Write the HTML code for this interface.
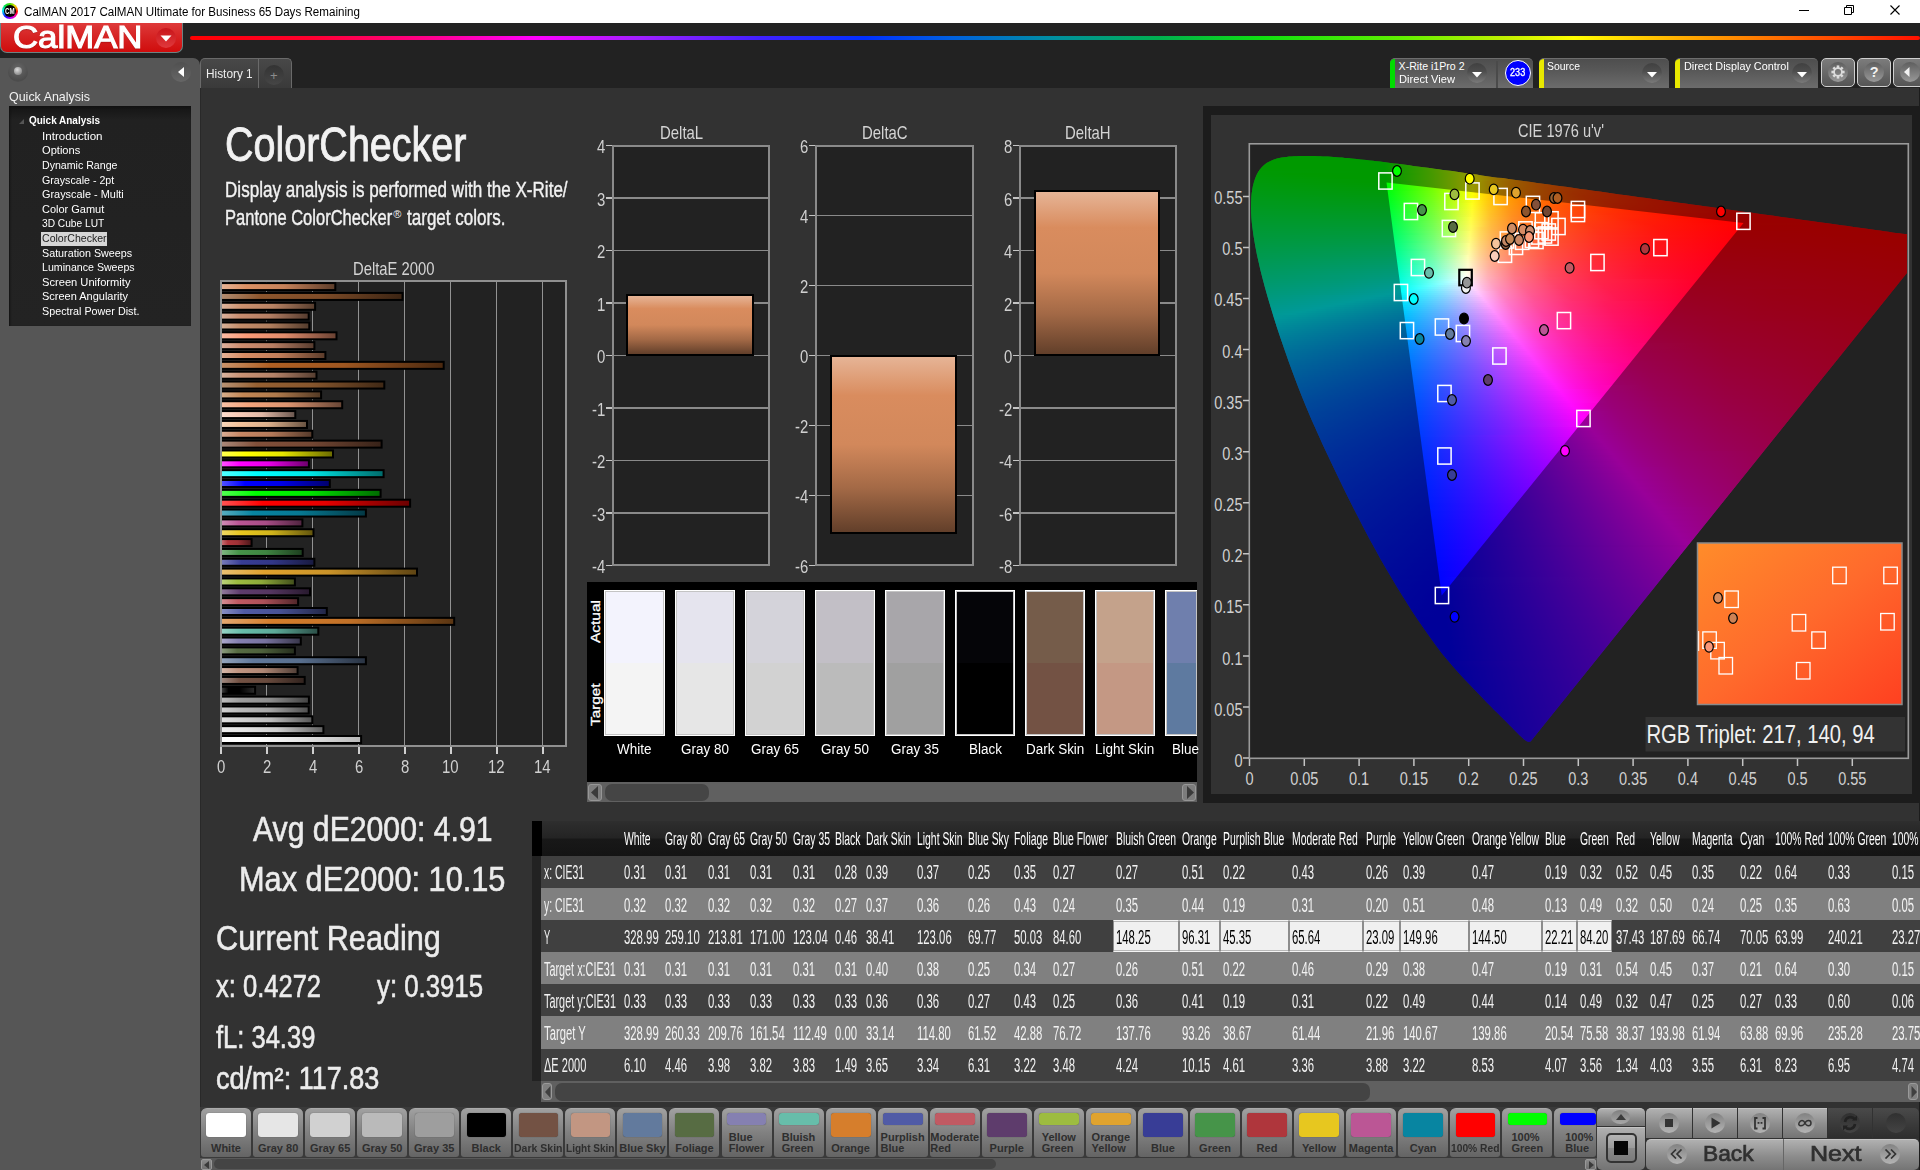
<!DOCTYPE html>
<html lang="en"><head><meta charset="utf-8"><title>CalMAN 2017 - ColorChecker</title>
<style>
*{box-sizing:border-box}
html,body{margin:0;padding:0;overflow:hidden}
body{width:1920px;height:1170px;overflow:hidden;background:#222;font-family:"Liberation Sans",sans-serif;position:relative}
div,span.t,svg{position:absolute}
span.t{white-space:nowrap;transform-origin:0 0;display:block}
.ciefill i{display:block;width:100%}
</style></head>
<body>
<!-- title bar -->
<div style="left:0px;top:0px;width:1920px;height:23px;background:#fff"></div>
<div style="left:1.8px;top:2.9px;width:16px;height:16px;border-radius:50%;background:conic-gradient(#4d0,#dd0 11%,#f80 19%,#f00 27%,#f0a 37%,#a0f 49%,#20f 60%,#08f 69%,#0ee 77%,#0d4 88%,#4d0);filter:blur(.3px)"></div>
<div style="left:3.9px;top:5px;width:11.8px;height:11.8px;border-radius:50%;background:#000"></div>
<span class="t" style="left:5.0px;top:6.1px;font-size:9.5px;line-height:9.5px;color:#fff;font-weight:bold;transform:scaleX(0.650);">CM</span>
<span class="t" style="left:24.0px;top:5.8px;font-size:12.5px;line-height:12.5px;color:#000;transform:scaleX(0.928);">CalMAN 2017 CalMAN Ultimate for Business 65 Days Remaining</span>
<svg style="left:1780px;top:0" width="140" height="23" viewBox="0 0 140 23" fill="none" stroke="#000" stroke-width="1"><path d="M19 10.5h10"/><path d="M64.5 7.5h7v7h-7zM66.5 7.5v-2h7v7h-2" /><path d="M110.500 5.500l9 9M119.500 5.500l-9 9" stroke-width="1.100"/></svg>
<!-- header -->
<div style="left:0px;top:23px;width:1920px;height:35px;background:#222"></div>
<div style="left:0px;top:23px;width:183px;height:29.7px;background:linear-gradient(#de3a3a,#d62222 50%,#d00c0c);border-radius:0 0 7px 7px;border:1px solid #6e8282;border-top:none"></div>
<span class="t" style="left:13.0px;top:21.3px;font-size:32px;line-height:32px;color:#fff;transform:scaleX(1.087);-webkit-text-stroke:1.1px #fff;text-shadow:0 1px 1px rgba(90,0,0,.6);">CalMAN</span>
<div style="left:156px;top:28px;width:20px;height:20px;border-radius:50%;background:linear-gradient(#c8151a,#e0393c)"></div>
<svg style="left:160px;top:35px" width="12" height="7"><path d="M0.500 0.500h11l-5.500 6z" fill="#fff"/></svg>
<div style="left:190px;top:36px;width:1730px;height:4px;background:linear-gradient(90deg,#f00 0,#ff0030 7%,#ff0090 14%,#f0f 20%,#a020ff 26%,#4020ff 33%,#0030ff 39%,#0060e0 44%,#0090a0 50%,#00b050 56%,#10e010 62%,#60f000 70%,#c0f000 76%,#ff0 80%,#ffb000 86%,#ff6000 93%,#ff1000 100%);border-radius:2px"></div>
<!-- sidebar -->
<div style="left:0px;top:58px;width:200px;height:1112px;background:#565656;border-top-right-radius:7px"></div>
<div style="left:8px;top:62px;width:20px;height:20px;border-radius:50%;background:radial-gradient(circle at 50% 35%,#686868,#4c4c4c 70%,#555)"></div>
<div style="left:14px;top:67px;width:8px;height:8px;border-radius:50%;background:radial-gradient(circle at 40% 35%,#ddd,#999 60%,#777)"></div>
<div style="left:171px;top:62px;width:20px;height:20px;border-radius:50%;background:linear-gradient(#505050,#666)"></div>
<svg style="left:177.800px;top:66.700px" width="6" height="10"><path d="M6 0v10l-6-5z" fill="#fff"/></svg>
<span class="t" style="left:9.0px;top:89.8px;font-size:13.5px;line-height:13.5px;color:#f0f0f0;transform:scaleX(0.923);">Quick Analysis</span>
<div style="left:9px;top:106px;width:182px;height:220px;background:linear-gradient(#141414,#212121 14px,#232323);box-shadow:inset 1px 1px 2px #111"></div>
<svg style="left:19px;top:119px" width="5" height="5"><path d="M5 0v5h-5z" fill="#555"/></svg>
<span class="t" style="left:29.0px;top:114.8px;font-size:11.5px;line-height:11.5px;color:#fff;font-weight:bold;transform:scaleX(0.866);">Quick Analysis</span>
<span class="t" style="left:42.0px;top:130.8px;font-size:11.5px;line-height:11.5px;color:#fff;transform:scaleX(1.007);">Introduction</span>
<span class="t" style="left:42.0px;top:145.4px;font-size:11.5px;line-height:11.5px;color:#fff;transform:scaleX(0.966);">Options</span>
<span class="t" style="left:42.0px;top:160.0px;font-size:11.5px;line-height:11.5px;color:#fff;transform:scaleX(0.922);">Dynamic Range</span>
<span class="t" style="left:42.0px;top:174.6px;font-size:11.5px;line-height:11.5px;color:#fff;transform:scaleX(0.926);">Grayscale - 2pt</span>
<span class="t" style="left:42.0px;top:189.2px;font-size:11.5px;line-height:11.5px;color:#fff;transform:scaleX(0.948);">Grayscale - Multi</span>
<span class="t" style="left:42.0px;top:203.8px;font-size:11.5px;line-height:11.5px;color:#fff;transform:scaleX(0.954);">Color Gamut</span>
<span class="t" style="left:42.0px;top:218.4px;font-size:11.5px;line-height:11.5px;color:#fff;transform:scaleX(0.885);">3D Cube LUT</span>
<div style="left:41px;top:231.8px;width:66px;height:14px;background:#d6d6d6"></div>
<span class="t" style="left:42.0px;top:233.1px;font-size:11.5px;line-height:11.5px;color:#222;transform:scaleX(0.919);">ColorChecker</span>
<span class="t" style="left:42.0px;top:247.6px;font-size:11.5px;line-height:11.5px;color:#fff;transform:scaleX(0.934);">Saturation Sweeps</span>
<span class="t" style="left:42.0px;top:262.2px;font-size:11.5px;line-height:11.5px;color:#fff;transform:scaleX(0.923);">Luminance Sweeps</span>
<span class="t" style="left:42.0px;top:276.9px;font-size:11.5px;line-height:11.5px;color:#fff;transform:scaleX(0.968);">Screen Uniformity</span>
<span class="t" style="left:42.0px;top:291.4px;font-size:11.5px;line-height:11.5px;color:#fff;transform:scaleX(0.955);">Screen Angularity</span>
<span class="t" style="left:42.0px;top:306.0px;font-size:11.5px;line-height:11.5px;color:#fff;transform:scaleX(0.935);">Spectral Power Dist.</span>
<!-- tabs -->
<div style="left:200px;top:58px;width:59px;height:30px;background:linear-gradient(#484848,#3a3a3a);border:1px solid #6a6a6a;border-bottom:none;border-radius:5px 0 0 0"></div>
<div style="left:258px;top:58px;width:34px;height:30px;background:linear-gradient(#484848,#3a3a3a);border:1px solid #6a6a6a;border-bottom:none;border-radius:0 5px 0 0"></div>
<span class="t" style="left:206.2px;top:68.0px;font-size:12px;line-height:12px;color:#eee;transform:scaleX(0.986);">History 1</span>
<div style="left:264px;top:65px;width:20px;height:20px;border-radius:50%;background:linear-gradient(#333,#464646)"></div>
<span class="t" style="left:270.0px;top:69.2px;font-size:13px;line-height:13px;color:#8c8c8c;">+</span>
<!-- toolbar -->
<div style="left:1390px;top:58px;width:143px;height:30px;background:linear-gradient(#4e4e4e,#585858 40%,#6c6c6c);border-top:1px solid #6e6e6e;border-radius:5px 5px 0 0;overflow:hidden"><div style="left:0;top:-1px;width:5px;height:31px;background:#0d0"></div><div style="left:106px;top:2px;width:2px;height:28px;background:#4a4a4a"></div></div>
<span class="t" style="left:1398.6px;top:60.5px;font-size:10.6px;line-height:10.6px;color:#fff;">X-Rite i1Pro 2</span>
<span class="t" style="left:1398.6px;top:74.4px;font-size:10.6px;line-height:10.6px;color:#fff;transform:scaleX(1.049);">Direct View</span>
<div style="left:1467.4px;top:63px;width:20px;height:20px;border-radius:50%;background:linear-gradient(#404040,#4c4c4c 40%,#7a7a7a)"></div>
<svg style="left:1472.4px;top:71.6px" width="10" height="6"><path d="M0 0h10l-5 5.500z" fill="#fff"/></svg>
<div style="left:1504.5px;top:59.5px;width:26px;height:26px;border-radius:50%;background:#00f;border:1px solid #fff"></div>
<span class="t" style="left:1510.0px;top:67.3px;font-size:10.5px;line-height:10.5px;color:#fff;transform:scaleX(0.868);-webkit-text-stroke:.35px #fff;">233</span>
<div style="left:1539px;top:58px;width:130px;height:30px;background:linear-gradient(#4e4e4e,#585858 40%,#6c6c6c);border-top:1px solid #6e6e6e;border-radius:5px 5px 0 0;overflow:hidden"><div style="left:0;top:-1px;width:5px;height:31px;background:#e8e800"></div></div>
<span class="t" style="left:1547.4px;top:60.5px;font-size:10.6px;line-height:10.6px;color:#fff;transform:scaleX(0.983);">Source</span>
<div style="left:1642.4px;top:63px;width:20px;height:20px;border-radius:50%;background:linear-gradient(#404040,#4c4c4c 40%,#7a7a7a)"></div>
<svg style="left:1647.4px;top:71.6px" width="10" height="6"><path d="M0 0h10l-5 5.500z" fill="#fff"/></svg>
<div style="left:1675px;top:58px;width:143px;height:30px;background:linear-gradient(#4e4e4e,#585858 40%,#6c6c6c);border-top:1px solid #6e6e6e;border-radius:5px 5px 0 0;overflow:hidden"><div style="left:0;top:-1px;width:5px;height:31px;background:#e8e800"></div></div>
<span class="t" style="left:1683.7px;top:60.5px;font-size:10.6px;line-height:10.6px;color:#fff;transform:scaleX(1.023);">Direct Display Control</span>
<div style="left:1791.8px;top:63px;width:20px;height:20px;border-radius:50%;background:linear-gradient(#404040,#4c4c4c 40%,#7a7a7a)"></div>
<svg style="left:1796.8px;top:71.6px" width="10" height="6"><path d="M0 0h10l-5 5.500z" fill="#fff"/></svg>
<div style="left:1821px;top:58px;width:34px;height:28.5px;background:linear-gradient(#7c7c7c,#555);border:1px solid #cfcfcf;border-radius:5px;"></div>
<div style="left:1828px;top:62px;width:20px;height:20px;border-radius:50%;background:linear-gradient(#5e5e5e,#999)"></div>
<div style="left:1857px;top:58px;width:34px;height:28.5px;background:linear-gradient(#7c7c7c,#555);border:1px solid #cfcfcf;border-radius:5px;"></div>
<div style="left:1864px;top:62px;width:20px;height:20px;border-radius:50%;background:linear-gradient(#5e5e5e,#999)"></div>
<div style="left:1893px;top:58px;width:34px;height:28.5px;background:linear-gradient(#7c7c7c,#555);border:1px solid #cfcfcf;border-radius:5px;"></div>
<div style="left:1900px;top:62px;width:20px;height:20px;border-radius:50%;background:linear-gradient(#5e5e5e,#999)"></div>
<svg style="left:1830px;top:64px" width="16" height="16" viewBox="-8 -8 16 16" fill="#dcdcdc"><rect x="-1.300" y="-6.600" width="2.600" height="2.800" transform="rotate(0)"/><rect x="-1.300" y="-6.600" width="2.600" height="2.800" transform="rotate(45)"/><rect x="-1.300" y="-6.600" width="2.600" height="2.800" transform="rotate(90)"/><rect x="-1.300" y="-6.600" width="2.600" height="2.800" transform="rotate(135)"/><rect x="-1.300" y="-6.600" width="2.600" height="2.800" transform="rotate(180)"/><rect x="-1.300" y="-6.600" width="2.600" height="2.800" transform="rotate(225)"/><rect x="-1.300" y="-6.600" width="2.600" height="2.800" transform="rotate(270)"/><rect x="-1.300" y="-6.600" width="2.600" height="2.800" transform="rotate(315)"/><circle r="3.900" fill="none" stroke="#dcdcdc" stroke-width="1.700"/></svg>
<span class="t" style="left:1869.8px;top:65.3px;font-size:14.5px;line-height:14.5px;color:#f2f2f2;font-weight:bold;">?</span>
<svg style="left:1904px;top:67px" width="6" height="10"><path d="M5.500 0v10l-5.500-5z" fill="#f2f2f2"/></svg>
<!-- main panel -->
<div style="left:200px;top:88px;width:1720px;height:1082px;background:#323232"></div>
<div style="left:1919px;top:88px;width:1px;height:1082px;background:#1c1c1c"></div>
<div style="left:200px;top:88px;width:1.2px;height:1082px;background:#292929"></div>
<span class="t" style="left:225.0px;top:119.6px;font-size:48.4px;line-height:48.4px;color:#f2f2f2;transform:scaleX(0.816);-webkit-text-stroke:.9px #f2f2f2;">ColorChecker</span>
<span class="t" style="left:225.0px;top:178.8px;font-size:21.2px;line-height:21.2px;color:#f2f2f2;transform:scaleX(0.806);-webkit-text-stroke:.4px #f2f2f2;">Display analysis is performed with the X-Rite/</span>
<span class="t" style="left:225.0px;top:206.5px;font-size:21.2px;line-height:21.2px;color:#f2f2f2;transform:scaleX(0.780);-webkit-text-stroke:.4px #f2f2f2;">Pantone ColorChecker</span>
<span class="t" style="left:393.3px;top:208.8px;font-size:11px;line-height:11px;color:#f2f2f2;">®</span>
<span class="t" style="left:407.3px;top:206.5px;font-size:21.2px;line-height:21.2px;color:#f2f2f2;transform:scaleX(0.804);-webkit-text-stroke:.4px #f2f2f2;">target colors.</span>
<!-- DeltaE 2000 chart -->
<span class="t" style="left:353.4px;top:260.1px;font-size:18.2px;line-height:18.2px;color:#d4d4d4;transform:scaleX(0.814);">DeltaE 2000</span>
<div style="left:220px;top:280px;width:347px;height:467px;background:#222"></div>
<div style="left:266.05px;top:282px;width:1.3px;height:463px;background:#929292"></div>
<div style="left:312.05px;top:282px;width:1.3px;height:463px;background:#929292"></div>
<div style="left:358.05px;top:282px;width:1.3px;height:463px;background:#929292"></div>
<div style="left:404.05px;top:282px;width:1.3px;height:463px;background:#929292"></div>
<div style="left:450.05px;top:282px;width:1.3px;height:463px;background:#929292"></div>
<div style="left:496.05px;top:282px;width:1.3px;height:463px;background:#929292"></div>
<div style="left:542.05px;top:282px;width:1.3px;height:463px;background:#929292"></div>
<div style="left:219.7px;top:747px;width:2px;height:7px;background:#d0d0d0"></div>
<span class="t" style="left:216.6px;top:757.7px;font-size:18.2px;line-height:18.2px;color:#d0d0d0;transform:scaleX(0.820);">0</span>
<div style="left:265.7px;top:747px;width:2px;height:7px;background:#d0d0d0"></div>
<span class="t" style="left:262.6px;top:757.7px;font-size:18.2px;line-height:18.2px;color:#d0d0d0;transform:scaleX(0.820);">2</span>
<div style="left:311.7px;top:747px;width:2px;height:7px;background:#d0d0d0"></div>
<span class="t" style="left:308.6px;top:757.7px;font-size:18.2px;line-height:18.2px;color:#d0d0d0;transform:scaleX(0.820);">4</span>
<div style="left:357.7px;top:747px;width:2px;height:7px;background:#d0d0d0"></div>
<span class="t" style="left:354.6px;top:757.7px;font-size:18.2px;line-height:18.2px;color:#d0d0d0;transform:scaleX(0.820);">6</span>
<div style="left:403.7px;top:747px;width:2px;height:7px;background:#d0d0d0"></div>
<span class="t" style="left:400.6px;top:757.7px;font-size:18.2px;line-height:18.2px;color:#d0d0d0;transform:scaleX(0.820);">8</span>
<div style="left:449.7px;top:747px;width:2px;height:7px;background:#d0d0d0"></div>
<span class="t" style="left:442.4px;top:757.7px;font-size:18.2px;line-height:18.2px;color:#d0d0d0;transform:scaleX(0.820);">10</span>
<div style="left:495.7px;top:747px;width:2px;height:7px;background:#d0d0d0"></div>
<span class="t" style="left:488.4px;top:757.7px;font-size:18.2px;line-height:18.2px;color:#d0d0d0;transform:scaleX(0.820);">12</span>
<div style="left:541.7px;top:747px;width:2px;height:7px;background:#d0d0d0"></div>
<span class="t" style="left:534.4px;top:757.7px;font-size:18.2px;line-height:18.2px;color:#d0d0d0;transform:scaleX(0.820);">14</span>
<svg style="left:220px;top:280px" width="347" height="467" viewBox="220 280 347 467"><defs><linearGradient id="b0"><stop offset="0" stop-color="#fff"/><stop offset=".22" stop-color="#fff"/><stop offset=".55" stop-color="#e6e6e6"/><stop offset="1" stop-color="#b9b9b9"/></linearGradient><linearGradient id="b1"><stop offset="0" stop-color="#eee"/><stop offset=".22" stop-color="#e6e6e6"/><stop offset=".55" stop-color="#cfcfcf"/><stop offset="1" stop-color="#616161"/></linearGradient><linearGradient id="b2"><stop offset="0" stop-color="#e0e0e0"/><stop offset=".22" stop-color="#d1d1d1"/><stop offset=".55" stop-color="#bcbcbc"/><stop offset="1" stop-color="#585858"/></linearGradient><linearGradient id="b3"><stop offset="0" stop-color="#d1d1d1"/><stop offset=".22" stop-color="#bababa"/><stop offset=".55" stop-color="#a7a7a7"/><stop offset="1" stop-color="#4e4e4e"/></linearGradient><linearGradient id="b4"><stop offset="0" stop-color="#bebebe"/><stop offset=".22" stop-color="#9e9e9e"/><stop offset=".55" stop-color="#8e8e8e"/><stop offset="1" stop-color="#424242"/></linearGradient><linearGradient id="b5"><stop offset="0" stop-color="#464646"/><stop offset=".22" stop-color="#000"/><stop offset=".55" stop-color="#000"/><stop offset="1" stop-color="#2d2d2d"/></linearGradient><linearGradient id="b6"><stop offset="0" stop-color="#a18b82"/><stop offset=".22" stop-color="#735244"/><stop offset=".55" stop-color="#684a3d"/><stop offset="1" stop-color="#30221d"/></linearGradient><linearGradient id="b7"><stop offset="0" stop-color="#d6b9ab"/><stop offset=".22" stop-color="#c29682"/><stop offset=".55" stop-color="#af8775"/><stop offset="1" stop-color="#513f37"/></linearGradient><linearGradient id="b8"><stop offset="0" stop-color="#96a6bd"/><stop offset=".22" stop-color="#627a9d"/><stop offset=".55" stop-color="#586e8d"/><stop offset="1" stop-color="#293342"/></linearGradient><linearGradient id="b9"><stop offset="0" stop-color="#8e9d81"/><stop offset=".22" stop-color="#576c43"/><stop offset=".55" stop-color="#4e613c"/><stop offset="1" stop-color="#252d1c"/></linearGradient><linearGradient id="b10"><stop offset="0" stop-color="#adaacb"/><stop offset=".22" stop-color="#8580b1"/><stop offset=".55" stop-color="#78739f"/><stop offset="1" stop-color="#38364a"/></linearGradient><linearGradient id="b11"><stop offset="0" stop-color="#99d3c6"/><stop offset=".22" stop-color="#67bdaa"/><stop offset=".55" stop-color="#5daa99"/><stop offset="1" stop-color="#2b4f47"/></linearGradient><linearGradient id="b12"><stop offset="0" stop-color="#e4a972"/><stop offset=".22" stop-color="#d67e2c"/><stop offset=".55" stop-color="#c17128"/><stop offset="1" stop-color="#5a3512"/></linearGradient><linearGradient id="b13"><stop offset="0" stop-color="#8a91c3"/><stop offset=".22" stop-color="#505ba6"/><stop offset=".55" stop-color="#485295"/><stop offset="1" stop-color="#222646"/></linearGradient><linearGradient id="b14"><stop offset="0" stop-color="#d59096"/><stop offset=".22" stop-color="#c15a63"/><stop offset=".55" stop-color="#ae5159"/><stop offset="1" stop-color="#51262a"/></linearGradient><linearGradient id="b15"><stop offset="0" stop-color="#937c9d"/><stop offset=".22" stop-color="#5e3c6c"/><stop offset=".55" stop-color="#553661"/><stop offset="1" stop-color="#27192d"/></linearGradient><linearGradient id="b16"><stop offset="0" stop-color="#bdd27f"/><stop offset=".22" stop-color="#9dbc40"/><stop offset=".55" stop-color="#8da93a"/><stop offset="1" stop-color="#424f1b"/></linearGradient><linearGradient id="b17"><stop offset="0" stop-color="#eac173"/><stop offset=".22" stop-color="#e0a32e"/><stop offset=".55" stop-color="#ca9329"/><stop offset="1" stop-color="#5e4413"/></linearGradient><linearGradient id="b18"><stop offset="0" stop-color="#7a7db9"/><stop offset=".22" stop-color="#383d96"/><stop offset=".55" stop-color="#323787"/><stop offset="1" stop-color="#181a3f"/></linearGradient><linearGradient id="b19"><stop offset="0" stop-color="#83b785"/><stop offset=".22" stop-color="#469449"/><stop offset=".55" stop-color="#3f8542"/><stop offset="1" stop-color="#1d3e1f"/></linearGradient><linearGradient id="b20"><stop offset="0" stop-color="#c9787c"/><stop offset=".22" stop-color="#af363c"/><stop offset=".55" stop-color="#9e3136"/><stop offset="1" stop-color="#4a1719"/></linearGradient><linearGradient id="b21"><stop offset="0" stop-color="#efd969"/><stop offset=".22" stop-color="#e7c71f"/><stop offset=".55" stop-color="#d0b31c"/><stop offset="1" stop-color="#61540d"/></linearGradient><linearGradient id="b22"><stop offset="0" stop-color="#d18eb8"/><stop offset=".22" stop-color="#bb5695"/><stop offset=".55" stop-color="#a84d86"/><stop offset="1" stop-color="#4f243f"/></linearGradient><linearGradient id="b23"><stop offset="0" stop-color="#5aadc0"/><stop offset=".22" stop-color="#0885a1"/><stop offset=".55" stop-color="#077891"/><stop offset="1" stop-color="#033844"/></linearGradient><linearGradient id="b24"><stop offset="0" stop-color="#ff5454"/><stop offset=".22" stop-color="#f00"/><stop offset=".55" stop-color="#e60000"/><stop offset="1" stop-color="#6b0000"/></linearGradient><linearGradient id="b25"><stop offset="0" stop-color="#54ff54"/><stop offset=".22" stop-color="#0f0"/><stop offset=".55" stop-color="#00e600"/><stop offset="1" stop-color="#006b00"/></linearGradient><linearGradient id="b26"><stop offset="0" stop-color="#5454ff"/><stop offset=".22" stop-color="#00f"/><stop offset=".55" stop-color="#0000e6"/><stop offset="1" stop-color="#00006b"/></linearGradient><linearGradient id="b27"><stop offset="0" stop-color="#54ffff"/><stop offset=".22" stop-color="#0ff"/><stop offset=".55" stop-color="#00e6e6"/><stop offset="1" stop-color="#006b6b"/></linearGradient><linearGradient id="b28"><stop offset="0" stop-color="#ff54ff"/><stop offset=".22" stop-color="#f0f"/><stop offset=".55" stop-color="#e600e6"/><stop offset="1" stop-color="#6b006b"/></linearGradient><linearGradient id="b29"><stop offset="0" stop-color="#ffff54"/><stop offset=".22" stop-color="#ff0"/><stop offset=".55" stop-color="#e6e600"/><stop offset="1" stop-color="#6b6b00"/></linearGradient><linearGradient id="b30"><stop offset="0" stop-color="#ab8a7b"/><stop offset=".22" stop-color="#82503a"/><stop offset=".55" stop-color="#754834"/><stop offset="1" stop-color="#372218"/></linearGradient><linearGradient id="b31"><stop offset="0" stop-color="#daaf97"/><stop offset=".22" stop-color="#c88764"/><stop offset=".55" stop-color="#b47a5a"/><stop offset="1" stop-color="#54392a"/></linearGradient><linearGradient id="b32"><stop offset="0" stop-color="#f8d7bc"/><stop offset=".22" stop-color="#f5c39b"/><stop offset=".55" stop-color="#dcb08c"/><stop offset="1" stop-color="#675241"/></linearGradient><linearGradient id="b33"><stop offset="0" stop-color="#fcded0"/><stop offset=".22" stop-color="#facdb9"/><stop offset=".55" stop-color="#e1b8a6"/><stop offset="1" stop-color="#69564e"/></linearGradient><linearGradient id="b34"><stop offset="0" stop-color="#f8c3a8"/><stop offset=".22" stop-color="#f5a57d"/><stop offset=".55" stop-color="#dc9470"/><stop offset="1" stop-color="#674535"/></linearGradient><linearGradient id="b35"><stop offset="0" stop-color="#d7af8d"/><stop offset=".22" stop-color="#c38755"/><stop offset=".55" stop-color="#b07a4c"/><stop offset="1" stop-color="#523924"/></linearGradient><linearGradient id="b36"><stop offset="0" stop-color="#b99476"/><stop offset=".22" stop-color="#966032"/><stop offset=".55" stop-color="#87562d"/><stop offset="1" stop-color="#3f2815"/></linearGradient><linearGradient id="b37"><stop offset="0" stop-color="#dab5a1"/><stop offset=".22" stop-color="#c89173"/><stop offset=".55" stop-color="#b48268"/><stop offset="1" stop-color="#543d30"/></linearGradient><linearGradient id="b38"><stop offset="0" stop-color="#c9946c"/><stop offset=".22" stop-color="#af5f23"/><stop offset=".55" stop-color="#9e5620"/><stop offset="1" stop-color="#4a280f"/></linearGradient><linearGradient id="b39"><stop offset="0" stop-color="#e4b297"/><stop offset=".22" stop-color="#d78c64"/><stop offset=".55" stop-color="#c27e5a"/><stop offset="1" stop-color="#5a3b2a"/></linearGradient><linearGradient id="b40"><stop offset="0" stop-color="#deb29e"/><stop offset=".22" stop-color="#cd8c6e"/><stop offset=".55" stop-color="#b87e63"/><stop offset="1" stop-color="#563b2e"/></linearGradient><linearGradient id="b41"><stop offset="0" stop-color="#fcbca5"/><stop offset=".22" stop-color="#fa9b78"/><stop offset=".55" stop-color="#e18c6c"/><stop offset="1" stop-color="#694132"/></linearGradient><linearGradient id="b42"><stop offset="0" stop-color="#d7b29a"/><stop offset=".22" stop-color="#c38c69"/><stop offset=".55" stop-color="#b07e5e"/><stop offset="1" stop-color="#523b2c"/></linearGradient><linearGradient id="b43"><stop offset="0" stop-color="#dab29e"/><stop offset=".22" stop-color="#c88c6e"/><stop offset=".55" stop-color="#b47e63"/><stop offset="1" stop-color="#543b2e"/></linearGradient><linearGradient id="b44"><stop offset="0" stop-color="#deb59e"/><stop offset=".22" stop-color="#cd916e"/><stop offset=".55" stop-color="#b88263"/><stop offset="1" stop-color="#563d2e"/></linearGradient><linearGradient id="b45"><stop offset="0" stop-color="#b28d72"/><stop offset=".22" stop-color="#8c552d"/><stop offset=".55" stop-color="#7e4c28"/><stop offset="1" stop-color="#3b2413"/></linearGradient><linearGradient id="b46"><stop offset="0" stop-color="#e8b597"/><stop offset=".22" stop-color="#dc9164"/><stop offset=".55" stop-color="#c6825a"/><stop offset="1" stop-color="#5c3d2a"/></linearGradient></defs><g stroke="#000" stroke-width="2"><rect x="221" y="736.00" width="140.1" height="7" fill="url(#b0)"/><rect x="221" y="726.15" width="102.4" height="7" fill="url(#b1)"/><rect x="221" y="716.31" width="91.3" height="7" fill="url(#b2)"/><rect x="221" y="706.46" width="87.7" height="7" fill="url(#b3)"/><rect x="221" y="696.62" width="87.9" height="7" fill="url(#b4)"/><rect x="221" y="686.77" width="34.1" height="7" fill="url(#b5)"/><rect x="221" y="676.92" width="83.7" height="7" fill="url(#b6)"/><rect x="221" y="667.08" width="76.6" height="7" fill="url(#b7)"/><rect x="221" y="657.23" width="144.9" height="7" fill="url(#b8)"/><rect x="221" y="647.39" width="73.9" height="7" fill="url(#b9)"/><rect x="221" y="637.54" width="79.8" height="7" fill="url(#b10)"/><rect x="221" y="627.69" width="97.3" height="7" fill="url(#b11)"/><rect x="221" y="617.85" width="233.2" height="7" fill="url(#b12)"/><rect x="221" y="608.00" width="105.8" height="7" fill="url(#b13)"/><rect x="221" y="598.16" width="77.1" height="7" fill="url(#b14)"/><rect x="221" y="588.31" width="89.0" height="7" fill="url(#b15)"/><rect x="221" y="578.46" width="73.9" height="7" fill="url(#b16)"/><rect x="221" y="568.62" width="196.0" height="7" fill="url(#b17)"/><rect x="221" y="558.77" width="93.4" height="7" fill="url(#b18)"/><rect x="221" y="548.93" width="81.7" height="7" fill="url(#b19)"/><rect x="221" y="539.08" width="30.6" height="7" fill="url(#b20)"/><rect x="221" y="529.23" width="92.5" height="7" fill="url(#b21)"/><rect x="221" y="519.39" width="81.4" height="7" fill="url(#b22)"/><rect x="221" y="509.54" width="144.9" height="7" fill="url(#b23)"/><rect x="221" y="499.70" width="189.1" height="7" fill="url(#b24)"/><rect x="221" y="489.85" width="159.6" height="7" fill="url(#b25)"/><rect x="221" y="480.00" width="108.8" height="7" fill="url(#b26)"/><rect x="221" y="470.16" width="162.6" height="7" fill="url(#b27)"/><rect x="221" y="460.31" width="87.9" height="7" fill="url(#b28)"/><rect x="221" y="450.47" width="112.0" height="7" fill="url(#b29)"/><rect x="221" y="440.62" width="160.6" height="7" fill="url(#b30)"/><rect x="221" y="430.77" width="91.3" height="7" fill="url(#b31)"/><rect x="221" y="420.93" width="86.0" height="7" fill="url(#b32)"/><rect x="221" y="411.08" width="74.3" height="7" fill="url(#b33)"/><rect x="221" y="401.24" width="121.2" height="7" fill="url(#b34)"/><rect x="221" y="391.39" width="100.1" height="7" fill="url(#b35)"/><rect x="221" y="381.54" width="163.3" height="7" fill="url(#b36)"/><rect x="221" y="371.70" width="95.5" height="7" fill="url(#b37)"/><rect x="221" y="361.85" width="222.7" height="7" fill="url(#b38)"/><rect x="221" y="352.01" width="104.4" height="7" fill="url(#b39)"/><rect x="221" y="342.16" width="93.4" height="7" fill="url(#b40)"/><rect x="221" y="332.31" width="115.5" height="7" fill="url(#b41)"/><rect x="221" y="322.47" width="88.3" height="7" fill="url(#b42)"/><rect x="221" y="312.62" width="87.7" height="7" fill="url(#b43)"/><rect x="221" y="302.78" width="94.1" height="7" fill="url(#b44)"/><rect x="221" y="292.93" width="181.5" height="7" fill="url(#b45)"/><rect x="221" y="283.08" width="114.3" height="7" fill="url(#b46)"/></g></svg>
<div style="left:220px;top:280px;width:347px;height:467px;border:2px solid #909090"></div>
<!-- Delta charts -->
<span class="t" style="left:659.6px;top:124.1px;font-size:18.2px;line-height:18.2px;color:#d4d4d4;transform:scaleX(0.820);">DeltaL</span>
<div style="left:612px;top:144.5px;width:158px;height:421px;background:#222;border:2px solid #8a8a8a"></div>
<div style="left:606px;top:564.75px;width:6px;height:1.5px;background:#c4c4c4"></div>
<span class="t" style="left:592.4px;top:558.2px;font-size:18.2px;line-height:18.2px;color:#d0d0d0;transform:scaleX(0.820);">-4</span>
<div style="left:614px;top:512.25px;width:154px;height:1.5px;background:#8a8a8a"></div>
<div style="left:606px;top:512.25px;width:6px;height:1.5px;background:#c4c4c4"></div>
<span class="t" style="left:592.4px;top:505.7px;font-size:18.2px;line-height:18.2px;color:#d0d0d0;transform:scaleX(0.820);">-3</span>
<div style="left:614px;top:459.75px;width:154px;height:1.5px;background:#8a8a8a"></div>
<div style="left:606px;top:459.75px;width:6px;height:1.5px;background:#c4c4c4"></div>
<span class="t" style="left:592.4px;top:453.2px;font-size:18.2px;line-height:18.2px;color:#d0d0d0;transform:scaleX(0.820);">-2</span>
<div style="left:614px;top:407.25px;width:154px;height:1.5px;background:#8a8a8a"></div>
<div style="left:606px;top:407.25px;width:6px;height:1.5px;background:#c4c4c4"></div>
<span class="t" style="left:592.4px;top:400.7px;font-size:18.2px;line-height:18.2px;color:#d0d0d0;transform:scaleX(0.820);">-1</span>
<div style="left:614px;top:354.75px;width:154px;height:1.5px;background:#8a8a8a"></div>
<div style="left:606px;top:354.75px;width:6px;height:1.5px;background:#c4c4c4"></div>
<span class="t" style="left:597.4px;top:348.2px;font-size:18.2px;line-height:18.2px;color:#d0d0d0;transform:scaleX(0.820);">0</span>
<div style="left:614px;top:302.25px;width:154px;height:1.5px;background:#8a8a8a"></div>
<div style="left:606px;top:302.25px;width:6px;height:1.5px;background:#c4c4c4"></div>
<span class="t" style="left:597.4px;top:295.7px;font-size:18.2px;line-height:18.2px;color:#d0d0d0;transform:scaleX(0.820);">1</span>
<div style="left:614px;top:249.75px;width:154px;height:1.5px;background:#8a8a8a"></div>
<div style="left:606px;top:249.75px;width:6px;height:1.5px;background:#c4c4c4"></div>
<span class="t" style="left:597.4px;top:243.2px;font-size:18.2px;line-height:18.2px;color:#d0d0d0;transform:scaleX(0.820);">2</span>
<div style="left:614px;top:197.25px;width:154px;height:1.5px;background:#8a8a8a"></div>
<div style="left:606px;top:197.25px;width:6px;height:1.5px;background:#c4c4c4"></div>
<span class="t" style="left:597.4px;top:190.7px;font-size:18.2px;line-height:18.2px;color:#d0d0d0;transform:scaleX(0.820);">3</span>
<div style="left:606px;top:144.75px;width:6px;height:1.5px;background:#c4c4c4"></div>
<span class="t" style="left:597.4px;top:138.2px;font-size:18.2px;line-height:18.2px;color:#d0d0d0;transform:scaleX(0.820);">4</span>
<div style="left:626.3px;top:293.6px;width:127.4px;height:62.9px;border:2px solid #000;background:linear-gradient(#e6b496,#d98c5e 22%,#d2885b 50%,#a36946 75%,#623f2a)"></div>
<span class="t" style="left:861.9px;top:124.1px;font-size:18.2px;line-height:18.2px;color:#d4d4d4;transform:scaleX(0.820);">DeltaC</span>
<div style="left:815px;top:144.5px;width:159px;height:421px;background:#222;border:2px solid #8a8a8a"></div>
<div style="left:809px;top:564.75px;width:6px;height:1.5px;background:#c4c4c4"></div>
<span class="t" style="left:795.4px;top:558.2px;font-size:18.2px;line-height:18.2px;color:#d0d0d0;transform:scaleX(0.820);">-6</span>
<div style="left:817px;top:494.75px;width:155px;height:1.5px;background:#8a8a8a"></div>
<div style="left:809px;top:494.75px;width:6px;height:1.5px;background:#c4c4c4"></div>
<span class="t" style="left:795.4px;top:488.2px;font-size:18.2px;line-height:18.2px;color:#d0d0d0;transform:scaleX(0.820);">-4</span>
<div style="left:817px;top:424.75px;width:155px;height:1.5px;background:#8a8a8a"></div>
<div style="left:809px;top:424.75px;width:6px;height:1.5px;background:#c4c4c4"></div>
<span class="t" style="left:795.4px;top:418.2px;font-size:18.2px;line-height:18.2px;color:#d0d0d0;transform:scaleX(0.820);">-2</span>
<div style="left:817px;top:354.75px;width:155px;height:1.5px;background:#8a8a8a"></div>
<div style="left:809px;top:354.75px;width:6px;height:1.5px;background:#c4c4c4"></div>
<span class="t" style="left:800.4px;top:348.2px;font-size:18.2px;line-height:18.2px;color:#d0d0d0;transform:scaleX(0.820);">0</span>
<div style="left:817px;top:284.75px;width:155px;height:1.5px;background:#8a8a8a"></div>
<div style="left:809px;top:284.75px;width:6px;height:1.5px;background:#c4c4c4"></div>
<span class="t" style="left:800.4px;top:278.2px;font-size:18.2px;line-height:18.2px;color:#d0d0d0;transform:scaleX(0.820);">2</span>
<div style="left:817px;top:214.75px;width:155px;height:1.5px;background:#8a8a8a"></div>
<div style="left:809px;top:214.75px;width:6px;height:1.5px;background:#c4c4c4"></div>
<span class="t" style="left:800.4px;top:208.2px;font-size:18.2px;line-height:18.2px;color:#d0d0d0;transform:scaleX(0.820);">4</span>
<div style="left:809px;top:144.75px;width:6px;height:1.5px;background:#c4c4c4"></div>
<span class="t" style="left:800.4px;top:138.2px;font-size:18.2px;line-height:18.2px;color:#d0d0d0;transform:scaleX(0.820);">6</span>
<div style="left:829.8px;top:354.5px;width:127.4px;height:179.45px;border:2px solid #000;background:linear-gradient(#e6b496,#d98c5e 22%,#d2885b 50%,#a36946 75%,#623f2a)"></div>
<span class="t" style="left:1064.9px;top:124.1px;font-size:18.2px;line-height:18.2px;color:#d4d4d4;transform:scaleX(0.820);">DeltaH</span>
<div style="left:1018.5px;top:144.5px;width:158px;height:421px;background:#222;border:2px solid #8a8a8a"></div>
<div style="left:1012.5px;top:564.75px;width:6px;height:1.5px;background:#c4c4c4"></div>
<span class="t" style="left:998.9px;top:558.2px;font-size:18.2px;line-height:18.2px;color:#d0d0d0;transform:scaleX(0.820);">-8</span>
<div style="left:1020.5px;top:512.25px;width:154px;height:1.5px;background:#8a8a8a"></div>
<div style="left:1012.5px;top:512.25px;width:6px;height:1.5px;background:#c4c4c4"></div>
<span class="t" style="left:998.9px;top:505.7px;font-size:18.2px;line-height:18.2px;color:#d0d0d0;transform:scaleX(0.820);">-6</span>
<div style="left:1020.5px;top:459.75px;width:154px;height:1.5px;background:#8a8a8a"></div>
<div style="left:1012.5px;top:459.75px;width:6px;height:1.5px;background:#c4c4c4"></div>
<span class="t" style="left:998.9px;top:453.2px;font-size:18.2px;line-height:18.2px;color:#d0d0d0;transform:scaleX(0.820);">-4</span>
<div style="left:1020.5px;top:407.25px;width:154px;height:1.5px;background:#8a8a8a"></div>
<div style="left:1012.5px;top:407.25px;width:6px;height:1.5px;background:#c4c4c4"></div>
<span class="t" style="left:998.9px;top:400.7px;font-size:18.2px;line-height:18.2px;color:#d0d0d0;transform:scaleX(0.820);">-2</span>
<div style="left:1020.5px;top:354.75px;width:154px;height:1.5px;background:#8a8a8a"></div>
<div style="left:1012.5px;top:354.75px;width:6px;height:1.5px;background:#c4c4c4"></div>
<span class="t" style="left:1003.9px;top:348.2px;font-size:18.2px;line-height:18.2px;color:#d0d0d0;transform:scaleX(0.820);">0</span>
<div style="left:1020.5px;top:302.25px;width:154px;height:1.5px;background:#8a8a8a"></div>
<div style="left:1012.5px;top:302.25px;width:6px;height:1.5px;background:#c4c4c4"></div>
<span class="t" style="left:1003.9px;top:295.7px;font-size:18.2px;line-height:18.2px;color:#d0d0d0;transform:scaleX(0.820);">2</span>
<div style="left:1020.5px;top:249.75px;width:154px;height:1.5px;background:#8a8a8a"></div>
<div style="left:1012.5px;top:249.75px;width:6px;height:1.5px;background:#c4c4c4"></div>
<span class="t" style="left:1003.9px;top:243.2px;font-size:18.2px;line-height:18.2px;color:#d0d0d0;transform:scaleX(0.820);">4</span>
<div style="left:1020.5px;top:197.25px;width:154px;height:1.5px;background:#8a8a8a"></div>
<div style="left:1012.5px;top:197.25px;width:6px;height:1.5px;background:#c4c4c4"></div>
<span class="t" style="left:1003.9px;top:190.7px;font-size:18.2px;line-height:18.2px;color:#d0d0d0;transform:scaleX(0.820);">6</span>
<div style="left:1012.5px;top:144.75px;width:6px;height:1.5px;background:#c4c4c4"></div>
<span class="t" style="left:1003.9px;top:138.2px;font-size:18.2px;line-height:18.2px;color:#d0d0d0;transform:scaleX(0.820);">8</span>
<div style="left:1033.8px;top:190.175px;width:126.4px;height:166.325px;border:2px solid #000;background:linear-gradient(#e6b496,#d98c5e 22%,#d2885b 50%,#a36946 75%,#623f2a)"></div>
<!-- actual/target swatches -->
<div class="swp" style="left:587px;top:582px;width:610px;height:220px;background:#000;overflow:hidden"></div>
<div style="left:604px;top:589.5px;width:61px;height:146.5px;border:1px solid #fff;box-shadow:inset 0 0 0 1px #c4c4c4;background:linear-gradient(#f3f3fd 50%,#f4f4f4 50%)"></div>
<span class="t" style="left:616.8px;top:740.6px;font-size:15.3px;line-height:15.3px;color:#fff;transform:scaleX(0.880);">White</span>
<div style="left:675px;top:589.5px;width:60px;height:146.5px;border:1px solid #fff;box-shadow:inset 0 0 0 1px #c4c4c4;background:linear-gradient(#e5e4ee 50%,#e6e6e6 50%)"></div>
<span class="t" style="left:681.1px;top:740.6px;font-size:15.3px;line-height:15.3px;color:#fff;transform:scaleX(0.880);">Gray 80</span>
<div style="left:745px;top:589.5px;width:60px;height:146.5px;border:1px solid #fff;box-shadow:inset 0 0 0 1px #c4c4c4;background:linear-gradient(#d4d3da 50%,#d2d2d2 50%)"></div>
<span class="t" style="left:751.1px;top:740.6px;font-size:15.3px;line-height:15.3px;color:#fff;transform:scaleX(0.880);">Gray 65</span>
<div style="left:815px;top:589.5px;width:60px;height:146.5px;border:1px solid #fff;box-shadow:inset 0 0 0 1px #c4c4c4;background:linear-gradient(#c2bfc6 50%,#bbb 50%)"></div>
<span class="t" style="left:821.1px;top:740.6px;font-size:15.3px;line-height:15.3px;color:#fff;transform:scaleX(0.880);">Gray 50</span>
<div style="left:885px;top:589.5px;width:60px;height:146.5px;border:1px solid #fff;box-shadow:inset 0 0 0 1px #c4c4c4;background:linear-gradient(#a8a6aa 50%,#a0a0a0 50%)"></div>
<span class="t" style="left:891.1px;top:740.6px;font-size:15.3px;line-height:15.3px;color:#fff;transform:scaleX(0.880);">Gray 35</span>
<div style="left:955px;top:589.5px;width:60px;height:146.5px;border:1px solid #fff;box-shadow:inset 0 0 0 1px #c4c4c4;background:linear-gradient(#050508 50%,#000 50%)"></div>
<span class="t" style="left:968.5px;top:740.6px;font-size:15.3px;line-height:15.3px;color:#fff;transform:scaleX(0.880);">Black</span>
<div style="left:1025px;top:589.5px;width:60px;height:146.5px;border:1px solid #fff;box-shadow:inset 0 0 0 1px #c4c4c4;background:linear-gradient(#755c4a 50%,#735244 50%)"></div>
<span class="t" style="left:1025.8px;top:740.6px;font-size:15.3px;line-height:15.3px;color:#fff;transform:scaleX(0.880);">Dark Skin</span>
<div style="left:1095px;top:589.5px;width:60px;height:146.5px;border:1px solid #fff;box-shadow:inset 0 0 0 1px #c4c4c4;background:linear-gradient(#c4a28b 50%,#c49884 50%)"></div>
<span class="t" style="left:1095.4px;top:740.6px;font-size:15.3px;line-height:15.3px;color:#fff;transform:scaleX(0.880);">Light Skin</span>
<div style="left:1165px;top:589.5px;width:32px;height:146.5px;border:1px solid #fff;box-shadow:inset 0 0 0 1px #c4c4c4;border-right:none;background:linear-gradient(#6f7fad 50%,#5e7aa0 50%)"></div>
<span class="t" style="left:1171.5px;top:740.6px;font-size:15.3px;line-height:15.3px;color:#fff;transform:scaleX(0.880);">Blue</span>
<span class="t" style="left:0.0px;top:-10.2px;font-size:12.5px;line-height:12.5px;color:#fff;transform:scaleX(1.238);left:590px;top:643.300px;transform-origin:0 0;transform:rotate(-90deg) scaleX(1.238);-webkit-text-stroke:.3px #fff;">Actual</span>
<span class="t" style="left:0.0px;top:-10.2px;font-size:12.5px;line-height:12.5px;color:#fff;transform:scaleX(1.226);left:590px;top:725.600px;transform-origin:0 0;transform:rotate(-90deg) scaleX(1.226);-webkit-text-stroke:.3px #fff;">Target</span>
<div style="left:587px;top:782px;width:610px;height:20px;background:#606060"></div>
<div style="left:605px;top:783.5px;width:103.5px;height:17px;background:#454545;border-radius:7px"></div>
<div style="left:587.7px;top:783.5px;width:14.3px;height:17.5px;background:#7c7c7c;border:1px solid #969696;border-radius:3px"></div>
<div style="left:1182px;top:783.5px;width:14.3px;height:17.5px;background:#7c7c7c;border:1px solid #969696;border-radius:3px"></div>
<svg style="left:591px;top:785.500px" width="8" height="13"><path d="M7 0v13l-7-6.500z" fill="#3a3a3a"/></svg>
<svg style="left:1186px;top:785.500px" width="8" height="13"><path d="M1 0v13l7-6.500z" fill="#3a3a3a"/></svg>
<!-- CIE 1976 panel -->
<div style="left:1203px;top:106px;width:717px;height:697px;background:#1c1c1c"></div>
<div style="left:1211px;top:115px;width:701px;height:679px;background:#323232"></div>
<span class="t" style="left:1517.7px;top:121.6px;font-size:18.2px;line-height:18.2px;color:#d4d4d4;transform:scaleX(0.803);">CIE 1976 u'v'</span>
<div style="left:1248.5px;top:143px;width:660.5px;height:616px;background:#222"></div>
<div class="ciefill" style="position:absolute;left:1250px;top:145px;width:657px;height:612px;clip-path:polygon(281.0px 596.1px,280.9px 596.1px,280.7px 596.3px,280.6px 596.5px,280.4px 596.6px,280.1px 596.7px,279.7px 596.7px,279.3px 596.7px,278.8px 596.7px,278.2px 596.7px,277.5px 596.5px,276.8px 596.2px,275.9px 595.8px,275.0px 595.1px,274.1px 594.4px,273.1px 593.6px,272.0px 592.5px,270.7px 591.3px,269.2px 589.9px,267.6px 588.3px,265.8px 586.5px,263.8px 584.5px,261.7px 582.3px,259.3px 579.9px,256.7px 577.3px,253.9px 574.5px,250.9px 571.5px,247.7px 568.3px,244.2px 564.9px,240.4px 561.1px,236.3px 556.9px,231.6px 552.1px,226.3px 546.6px,220.8px 540.8px,215.2px 534.9px,209.9px 529.2px,205.2px 524.1px,201.3px 519.6px,197.9px 515.6px,194.7px 511.8px,191.6px 508.0px,188.4px 503.7px,184.7px 498.7px,180.6px 493.1px,176.3px 487.0px,171.8px 480.6px,167.1px 473.8px,162.3px 466.5px,157.4px 458.8px,152.4px 450.8px,147.1px 442.3px,141.8px 433.3px,136.3px 424.0px,130.8px 414.4px,125.2px 404.3px,119.5px 393.9px,113.7px 382.9px,107.8px 371.6px,101.9px 360.0px,96.0px 348.3px,90.3px 336.5px,84.5px 324.5px,78.7px 312.3px,72.9px 300.0px,67.3px 287.6px,61.8px 275.2px,56.6px 263.1px,51.7px 251.1px,47.0px 239.0px,42.5px 227.0px,38.2px 215.2px,34.2px 203.7px,30.4px 192.7px,26.8px 182.0px,23.5px 171.5px,20.4px 161.3px,17.5px 151.5px,14.9px 142.2px,12.5px 133.3px,10.4px 124.9px,8.6px 117.0px,6.9px 109.4px,5.5px 102.3px,4.3px 95.6px,3.3px 89.2px,2.5px 83.2px,1.8px 77.6px,1.4px 72.4px,1.1px 67.3px,1.0px 62.3px,1.1px 57.6px,1.3px 53.1px,1.6px 49.0px,2.2px 45.1px,2.8px 41.5px,3.7px 38.1px,4.6px 34.9px,5.7px 32.0px,6.9px 29.3px,8.3px 26.8px,9.7px 24.7px,11.3px 22.8px,13.0px 21.0px,14.7px 19.4px,16.6px 18.1px,18.5px 16.9px,20.6px 15.9px,22.7px 15.0px,24.8px 14.2px,27.0px 13.5px,29.3px 12.9px,31.7px 12.5px,34.1px 12.2px,36.5px 11.9px,39.0px 11.6px,41.5px 11.4px,44.0px 11.3px,46.6px 11.2px,49.2px 11.1px,51.8px 11.1px,54.4px 11.0px,57.0px 11.0px,59.5px 11.0px,62.1px 11.0px,64.7px 11.1px,67.4px 11.2px,70.0px 11.3px,72.7px 11.4px,75.4px 11.5px,78.0px 11.6px,80.8px 11.8px,83.5px 12.0px,86.3px 12.2px,89.2px 12.4px,92.0px 12.6px,94.9px 12.9px,97.9px 13.1px,100.9px 13.4px,103.9px 13.7px,107.0px 14.0px,110.1px 14.4px,113.3px 14.7px,116.5px 15.1px,119.7px 15.4px,123.0px 15.8px,126.4px 16.2px,129.8px 16.6px,133.3px 17.0px,136.8px 17.5px,140.4px 17.9px,144.0px 18.4px,147.7px 18.8px,151.5px 19.3px,155.4px 19.8px,159.3px 20.3px,163.2px 20.9px,167.3px 21.4px,171.4px 21.9px,175.6px 22.5px,179.8px 23.1px,184.2px 23.7px,188.6px 24.3px,193.0px 24.9px,197.6px 25.5px,202.2px 26.1px,206.9px 26.8px,211.7px 27.5px,216.6px 28.2px,221.5px 28.9px,226.6px 29.6px,231.7px 30.4px,236.9px 31.2px,242.1px 32.0px,247.4px 32.8px,252.9px 33.1px,258.4px 33.9px,263.9px 34.7px,269.6px 35.5px,275.3px 36.3px,281.1px 37.1px,287.0px 37.9px,293.0px 38.7px,299.0px 39.6px,305.1px 40.4px,311.3px 41.3px,317.6px 42.1px,323.9px 43.0px,330.2px 43.9px,336.7px 44.8px,343.2px 45.7px,349.7px 46.6px,356.3px 47.5px,362.9px 48.4px,369.5px 49.4px,376.2px 50.3px,382.9px 51.2px,389.6px 52.2px,396.3px 53.1px,402.9px 54.0px,409.4px 55.0px,416.0px 55.9px,422.4px 56.8px,428.9px 57.7px,435.3px 58.6px,441.7px 59.4px,448.1px 60.3px,454.5px 61.2px,460.9px 62.1px,467.2px 63.0px,473.4px 63.9px,479.5px 64.7px,485.1px 65.5px,490.4px 66.2px,495.5px 66.9px,500.8px 67.6px,506.8px 68.5px,513.7px 69.4px,522.0px 70.6px,531.4px 71.9px,541.4px 73.3px,551.4px 74.7px,561.1px 76.0px,569.7px 77.2px,577.4px 78.3px,584.5px 79.3px,591.2px 80.2px,597.6px 81.1px,603.6px 82.0px,609.4px 82.8px,615.0px 83.5px,620.3px 84.3px,625.3px 85.0px,629.9px 85.6px,634.4px 86.3px,638.5px 86.8px,642.4px 87.4px,645.9px 87.9px,649.2px 88.3px,652.2px 88.7px,655.0px 89.1px,657.6px 89.5px,660.0px 89.8px,662.1px 90.1px,663.9px 90.3px,665.6px 90.6px,667.3px 90.8px,669.0px 91.1px,670.8px 91.3px,672.7px 91.6px,674.4px 91.8px,676.1px 92.0px,677.6px 92.3px,678.9px 92.4px,679.9px 92.6px,680.8px 92.7px,681.4px 92.8px,682.0px 92.9px,682.4px 92.9px,682.7px 93.0px,682.7px 95.9px)">
<i style="height:2px"></i>
<i style="height:2px"></i>
<i style="height:2px"></i>
<i style="height:2px"></i>
<i style="height:2px"></i>
<i style="height:2px;background:linear-gradient(90deg,#0f0 33px,#0f0 86px)"></i>
<i style="height:2px;background:linear-gradient(90deg,#0f0 23px,#0f0 109px)"></i>
<i style="height:2px;background:linear-gradient(90deg,#0f0 18px,#0f0 127px)"></i>
<i style="height:2px;background:linear-gradient(90deg,#0f0 14px,#0f0 133px,#14ff00 143px)"></i>
<i style="height:2px;background:linear-gradient(90deg,#0f0 12px,#0f0 134px,#3aff00 159px)"></i>
<i style="height:2px;background:linear-gradient(90deg,#0f0 10px,#0f0 134px,#60ff00 174px)"></i>
<i style="height:2px;background:linear-gradient(90deg,#0f0 8px,#0f0 134px,#3eff00 161px,#8aff00 189px)"></i>
<i style="height:2px;background:linear-gradient(90deg,#00ff03 6px,#0f0 135px,#57ff00 171px,#b8ff00 204px)"></i>
<i style="height:2px;background:linear-gradient(90deg,#00ff06 5px,#0f0 135px,#6dff00 179px,#e7ff00 218px)"></i>
<i style="height:2px;background:linear-gradient(90deg,#00ff08 4px,#0f0 62px,#0f0 135px,#35ff00 158px,#75ff00 182px,#b8ff00 204px,#fdff00 224px,#ffe800 231px)"></i>
<i style="height:2px;background:linear-gradient(90deg,#00ff0b 3px,#0f0 79px,#01ff00 136px,#78ff00 183px,#b8ff00 204px,#feff00 224px,#ffc100 245px)"></i>
<i style="height:2px;background:linear-gradient(90deg,#00ff0e 2px,#0f0 97px,#0f0 136px,#78ff00 183px,#b9ff00 204px,#ff0 224px,#ffc800 242px,#ff9c00 262px)"></i>
<i style="height:2px;background:linear-gradient(90deg,#00ff10 2px,#0f0 136px,#75ff00 182px,#b9ff00 204px,#ff0 224px,#fb0 247px,#ff8500 276px)"></i>
<i style="height:2px;background:linear-gradient(90deg,#00ff13 1px,#0f0 136px,#34ff00 158px,#75ff00 182px,#b6ff00 203px,#fffe00 224px,#ffd400 237px,#ffaf00 252px,#ff8d00 270px,#ff7100 290px)"></i>
<i style="height:2px;background:linear-gradient(90deg,#00ff16 1px,#01ff03 137px,#78ff00 183px,#b9ff00 204px,#fcff00 223px,#ffcb00 240px,#ffa200 258px,#ff7e00 280px,#ff6000 305px)"></i>
<i style="height:2px;background:linear-gradient(90deg,#00ff19 0px,#00ff06 137px,#7f0 183px,#b9ff00 204px,#fdff00 223px,#ffc500 242px,#ff9800 263px,#ff7300 288px,#ff5300 319px)"></i>
<i style="height:2px;background:linear-gradient(90deg,#00ff1b 0px,#00ff0a 137px,#74ff01 182px,#b6ff00 203px,#feff00 223px,#ffc200 243px,#ff9000 267px,#ff6800 297px,#ff4700 333px)"></i>
<i style="height:2px;background:linear-gradient(90deg,#00ff1e 0px,#00ff0d 137px,#32ff0a 158px,#74ff05 182px,#b6ff00 203px,#feff00 223px,#ffbc00 245px,#f80 272px,#ff5e00 306px,#ff3c00 348px)"></i>
<i style="height:2px;background:linear-gradient(90deg,#00ff21 0px,#01ff11 138px,#77ff09 183px,#baff04 204px,#ff0 223px,#ffda00 234px,#ffb900 246px,#ff8100 276px,#f50 314px,#f30 362px)"></i>
<i style="height:2px;background:linear-gradient(90deg,#00ff23 0px,#00ff14 138px,#77ff0d 183px,#b7ff09 203px,#ffff04 223px,#ffd601 235px,#ffb400 248px,#ff7900 281px,#ff4d00 323px,#ff2b00 377px)"></i>
<i style="height:2px;background:linear-gradient(90deg,#00ff26 0px,#00ff18 138px,#74ff11 182px,#b7ff0d 203px,#fcff09 222px,#ffd004 237px,#ffaf01 250px,#ff9000 266px,#ff7400 285px,#ff4600 331px,#ff2400 391px)"></i>
<i style="height:2px;background:linear-gradient(90deg,#00ff29 0px,#01ff1c 139px,#77ff15 183px,#b7ff11 203px,#fdff0e 222px,#ffcf08 237px,#ffac04 251px,#ff8c01 268px,#ff6f00 288px,#ff4100 338px,#ff1e00 405px)"></i>
<i style="height:2px;background:linear-gradient(90deg,#00ff2c 0px,#00ff1f 139px,#77ff19 183px,#b7ff16 203px,#fdff12 222px,#ffce0c 237px,#ffa908 252px,#ff8804 270px,#ff6a00 292px,#ff3b00 346px,#ff1800 419px)"></i>
<i style="height:2px;background:linear-gradient(90deg,#00ff2f 0px,#00ff23 139px,#73ff1e 182px,#fffc17 223px,#ffce10 237px,#ffa40b 254px,#ff8306 273px,#ff6502 296px,#ff3600 354px,#ff1300 434px)"></i>
<i style="height:2px;background:linear-gradient(90deg,#00ff31 0px,#00ff27 139px,#34ff25 160px,#76ff22 183px,#b8ff1f 203px,#ffff1c 222px,#ffcd14 237px,#ffa40e 254px,#ff7f08 275px,#ff6104 299px,#ff3100 361px,#ff0f00 448px)"></i>
<i style="height:2px;background:linear-gradient(90deg,#00ff34 0px,#01ff2b 140px,#76ff26 183px,#b8ff24 203px,#ffff21 222px,#ffc918 238px,#ff9f11 256px,#ff7a0b 278px,#ff5c06 303px,#ff4201 333px,#ff2c00 369px,#ff0a00 463px)"></i>
<i style="height:2px;background:linear-gradient(90deg,#00ff37 0px,#00ff2f 140px,#76ff2b 183px,#b5ff28 202px,#fffe26 222px,#ffc91c 238px,#ff9c14 257px,#ff780d 279px,#ff5807 306px,#ff3e03 338px,#ff2800 377px,#ff0600 477px)"></i>
<i style="height:2px;background:linear-gradient(90deg,#00ff3a 0px,#0f3 140px,#73ff2f 182px,#fffe2b 222px,#ffc820 238px,#ff9a17 258px,#ff730f 282px,#ff5409 310px,#ff3a04 344px,#ff2400 384px,#ff0300 491px)"></i>
<i style="height:2px;background:linear-gradient(90deg,#00ff3d 0px,#00ff37 140px,#32ff35 160px,#73ff34 182px,#fffd30 222px,#ffc524 239px,#ff971a 259px,#ff7112 283px,#ff510b 313px,#ff3605 349px,#ff2000 393px,#f00 506px)"></i>
<i style="height:2px;background:linear-gradient(90deg,#00ff40 0px,#01ff3b 141px,#72ff38 182px,#fffc35 222px,#ffc127 240px,#ff931c 261px,#ff6c13 287px,#ff4c0c 318px,#ff3006 358px,#ff1a01 406px,#ff0500 480px,#f00 520px)"></i>
<i style="height:2px;background:linear-gradient(90deg,#00ff43 0px,#00ff3f 141px,#72ff3d 182px,#fffc3a 222px,#ffc12b 240px,#ff901f 262px,#ff6816 289px,#ff480e 322px,#ff2c07 366px,#ff1501 420px,#f00 499px,#f00 535px)"></i>
<i style="height:2px;background:linear-gradient(90deg,#00ff46 0px,#00ff43 141px,#37ff42 162px,#75ff41 183px,#b9ff41 203px,#ffff40 221px,#ffc330 239px,#ff9023 262px,#ff6718 290px,#ff450f 325px,#ff2807 373px,#ff1001 433px,#f00 497px,#f00 549px)"></i>
<i style="height:2px;background:linear-gradient(90deg,#00ff49 0px,#00ff47 141px,#31ff46 160px,#72ff46 182px,#b6ff46 202px,#fffe45 221px,#ffbf33 240px,#ff8b25 264px,#ff631a 293px,#ff4210 329px,#ff2308 381px,#ff0c02 447px,#f00 496px,#f00 563px)"></i>
<i style="height:2px;background:linear-gradient(90deg,#00ff4c 0px,#01ff4b 142px,#75ff4b 183px,#fffe4a 221px,#ffbc37 241px,#ff8928 265px,#ff601c 295px,#ff3e12 333px,#ff1f09 389px,#ff0702 462px,#f00 495px,#f00 578px)"></i>
<i style="height:2px;background:linear-gradient(90deg,#00ff4f 0px,#00ff4f 142px,#75ff50 183px,#fffd4f 221px,#ffbb3b 241px,#ff872a 266px,#ff5d1e 297px,#ff3b13 336px,#ff1c09 396px,#ff0402 475px,#f00 592px)"></i>
<i style="height:2px;background:linear-gradient(90deg,#00ff52 0px,#00ff53 142px,#71ff54 182px,#fffd55 221px,#ffba3f 241px,#ff842d 267px,#ff5a1f 299px,#ff3814 340px,#ff180a 405px,#ff0002 491px,#f00 606px)"></i>
<i style="height:2px;background:linear-gradient(90deg,#0f5 0px,#01ff58 143px,#75ff59 183px,#fffc5a 221px,#ffd74d 231px,#ffb742 242px,#ff8230 268px,#ff5721 302px,#ff3515 344px,#ff170b 407px,#ff0003 489px,#f00 621px)"></i>
<i style="height:2px;background:linear-gradient(90deg,#00ff58 0px,#00ff5c 143px,#71ff5e 182px,#fffb5f 221px,#ffd652 231px,#ffb646 242px,#ff8033 269px,#ff5523 303px,#ff3317 347px,#ff160c 408px,#ff0004 488px,#f00 635px)"></i>
<i style="height:2px;background:linear-gradient(90deg,#00ff5b 0px,#00ff61 143px,#78ff63 184px,#b7ff65 202px,#ff6 220px,#ffd958 230px,#ffb84b 241px,#ff7f36 269px,#ff5325 304px,#ff3118 349px,#ff150e 409px,#ff0006 486px,#f00 649px)"></i>
<i style="height:2px;background:linear-gradient(90deg,#00ff5e 1px,#00ff65 143px,#3f6 162px,#74ff68 183px,#b4ff6a 201px,#fffe6c 220px,#ffd85d 230px,#ffb54f 242px,#ff7d38 270px,#ff5127 306px,#ff2f1a 351px,#ff150f 409px,#ff0007 484px,#f00 657px)"></i>
<i style="height:2px;background:linear-gradient(90deg,#00ff61 1px,#01ff6a 144px,#74ff6d 183px,#fffd71 220px,#ffd861 230px,#ffb754 241px,#ff7e3c 269px,#ff512a 305px,#ff2f1c 351px,#ff1511 409px,#ff0008 483px,#f00 657px)"></i>
<i style="height:2px;background:linear-gradient(90deg,#00ff64 1px,#00ff6e 144px,#74ff72 183px,#fffd77 220px,#ffd766 230px,#ffb658 241px,#ff7d3f 269px,#ff512c 305px,#ff2e1e 351px,#ff1412 408px,#ff000a 481px,#f00 657px)"></i>
<i style="height:2px;background:linear-gradient(90deg,#00ff67 2px,#00ff73 144px,#70ff77 182px,#fffc7c 220px,#ffd66b 230px,#ffb55c 241px,#ff7c43 269px,#ff502f 305px,#ff2e1f 351px,#ff1414 408px,#ff000b 480px,#f00 657px)"></i>
<i style="height:2px;background:linear-gradient(90deg,#00ff6b 2px,#0f7 144px,#31ff7a 162px,#70ff7d 182px,#fffb82 220px,#ffd570 230px,#ffb561 241px,#ff7c46 269px,#ff4f31 305px,#ff2d21 351px,#ff1416 407px,#ff000c 478px,#f00 657px)"></i>
<i style="height:2px;background:linear-gradient(90deg,#00ff6e 2px,#01ff7c 145px,#77ff82 184px,#b8ff86 202px,#ffff8a 219px,#ffd877 229px,#ffb766 240px,#ff7c4a 268px,#ff5135 303px,#ff2e24 349px,#ff1417 405px,#ff000e 476px,#ff0001 657px)"></i>
<i style="height:2px;background:linear-gradient(90deg,#00ff71 3px,#00ff81 145px,#7f8 184px,#b5ff8b 201px,#fffe8f 219px,#ffd77c 229px,#ffb66b 240px,#ff7c4d 268px,#ff5037 303px,#ff2d26 349px,#ff1419 405px,#ff000f 475px,#ff0002 657px)"></i>
<i style="height:2px;background:linear-gradient(90deg,#00ff75 3px,#00ff86 145px,#73ff8d 183px,#b1ff91 200px,#fffe95 219px,#ffd781 229px,#ffb56f 240px,#ff7b51 268px,#ff4f3a 303px,#ff2d28 349px,#ff141b 404px,#ff0010 473px,#ff0003 657px)"></i>
<i style="height:2px;background:linear-gradient(90deg,#00ff78 3px,#00ff8a 145px,#2fff8e 162px,#6fff92 182px,#fffd9b 219px,#ffd686 229px,#ffb474 240px,#ff7a54 268px,#ff4f3d 303px,#ff2c2a 349px,#ff141c 403px,#ff0012 472px,#ff0003 657px)"></i>
<i style="height:2px;background:linear-gradient(90deg,#00ff7b 4px,#01ff90 146px,#73ff98 183px,#fffca1 219px,#ffd58b 229px,#ffb478 240px,#ff7a58 268px,#ff4e3f 303px,#ff2c2c 349px,#ff141e 402px,#ff0013 470px,#ff0004 657px)"></i>
<i style="height:2px;background:linear-gradient(90deg,#00ff7f 4px,#00ff94 146px,#72ff9e 183px,#fffca7 219px,#ffd490 229px,#ffb37d 240px,#ff795b 268px,#ff4e42 303px,#ff2b2e 349px,#ff1320 402px,#ff0015 468px,#ff0005 657px)"></i>
<i style="height:2px;background:linear-gradient(90deg,#00ff82 5px,#0f9 146px,#6fffa3 182px,#b6ffa9 201px,#ffffb0 218px,#fffbad 219px,#ffd495 229px,#ffb281 240px,#ff785e 268px,#ff4d44 303px,#ff2b30 349px,#ff1322 401px,#ff0016 467px,#ff0006 657px)"></i>
<i style="height:2px;background:linear-gradient(90deg,#00ff85 5px,#01ff9f 147px,#79ffaa 185px,#baffb0 202px,#ffffb6 218px,#ffd69d 228px,#ffb488 239px,#ff7963 267px,#ff4d48 302px,#ff2b32 348px,#ff1323 400px,#ff0018 465px,#ff0006 657px)"></i>
<i style="height:2px;background:linear-gradient(90deg,#00ff89 5px,#00ffa4 147px,#75ffaf 184px,#fffebc 218px,#ffd6a2 228px,#ffb38c 239px,#ff7a67 266px,#ff4d4a 302px,#ff2a34 348px,#ff1325 399px,#ff0019 463px,#ff0007 657px)"></i>
<i style="height:2px;background:linear-gradient(90deg,#00ff8d 6px,#00ffa9 147px,#75ffb5 184px,#fffdc2 218px,#ffd5a8 228px,#ffb391 239px,#ff796b 266px,#ff4d4e 301px,#ff2a37 347px,#ff1327 398px,#ff001b 462px,#ff0008 657px)"></i>
<i style="height:2px;background:linear-gradient(90deg,#00ff90 6px,#00ffae 147px,#31ffb4 164px,#71ffbb 183px,#fffdc9 218px,#ffd4ad 228px,#ffb296 239px,#ff796e 266px,#ff4c50 301px,#ff2a39 347px,#ff1329 397px,#ff001c 460px,#ff0009 657px)"></i>
<i style="height:2px;background:linear-gradient(90deg,#00ff94 7px,#01ffb4 148px,#71ffc1 183px,#fffccf 218px,#ffd3b3 228px,#ffb19a 239px,#ff7872 266px,#ff4c53 301px,#ff293b 347px,#ff122a 397px,#ff001e 459px,#ff0009 657px)"></i>
<i style="height:2px;background:linear-gradient(90deg,#00ff97 7px,#00ffb9 148px,#71ffc7 183px,#fffbd5 218px,#ffd3b8 228px,#ffb09f 239px,#ff7776 266px,#ff4b56 301px,#ff293d 347px,#ff122c 396px,#ff001f 457px,#ff000a 657px)"></i>
<i style="height:2px;background:linear-gradient(90deg,#00ff9b 8px,#00ffbf 148px,#75ffce 184px,#b7ffd6 201px,#ffffdf 217px,#ffd5c0 227px,#ffb2a6 238px,#ff787a 265px,#ff4b59 300px,#ff293f 346px,#ff122e 395px,#ff0021 455px,#ff000b 657px)"></i>
<i style="height:2px;background:linear-gradient(90deg,#00ff9f 8px,#00ffc4 148px,#33ffcb 165px,#74ffd4 184px,#b3ffdc 200px,#fffee6 217px,#ffd5c6 227px,#ffb1ab 238px,#ff777e 265px,#ff4b5c 300px,#ff2841 346px,#ff1230 394px,#f02 454px,#ff000c 657px)"></i>
<i style="height:2px;background:linear-gradient(90deg,#00ffa2 9px,#01ffca 149px,#74ffda 184px,#fffeed 217px,#ffd4cc 227px,#ffb1b0 238px,#ff7682 265px,#ff4a5f 300px,#ff2843 346px,#ff1232 393px,#ff0024 452px,#ff000d 657px)"></i>
<i style="height:2px;background:linear-gradient(90deg,#00ffa6 9px,#00ffcf 149px,#74ffe1 184px,#fffdf3 217px,#ffd3d1 227px,#ffb0b5 238px,#ff7685 265px,#ff4961 300px,#ff2745 346px,#ff1134 393px,#ff0026 451px,#ff000d 657px)"></i>
<i style="height:2px;background:linear-gradient(90deg,#0fa 10px,#00ffbe 86px,#00ffd5 149px,#70ffe7 183px,#fffcfa 217px,#ffd6da 226px,#ffb2bc 237px,#ff778b 264px,#ff4a65 299px,#ff2748 345px,#ff1236 391px,#ff0027 449px,#ff000e 656px)"></i>
<i style="height:2px;background:linear-gradient(90deg,#00ffae 10px,#00ffc2 86px,#00ffdb 149px,#65ffeb 180px,#dcffff 209px,#fff7fd 218px,#ffceda 228px,#ffabbc 239px,#ff738b 266px,#ff4766 301px,#ff2549 347px,#ff0029 447px,#ff000f 655px)"></i>
<i style="height:2px;background:linear-gradient(90deg,#00ffb2 11px,#00ffc7 87px,#01ffe1 150px,#56ffef 176px,#b0ffff 199px,#ffedfc 220px,#ffc6d9 230px,#ffa5bc 241px,#ff6f8c 268px,#ff4567 303px,#ff244a 349px,#ff002b 446px,#ff0010 653px)"></i>
<i style="height:2px;background:linear-gradient(90deg,#00ffb6 11px,#0fc 87px,#00ffe7 150px,#40fff2 170px,#8bffff 190px,#ffe7fe 221px,#ffc2dc 231px,#ffa2bf 242px,#ff6c8f 269px,#ff4268 305px,#ff224b 351px,#ff002c 444px,#f01 651px)"></i>
<i style="height:2px;background:linear-gradient(90deg,#00ffba 12px,#00ffd1 88px,#00ffed 150px,#64ffff 180px,#ffdefd 223px,#ffbadc 233px,#ff9cbf 244px,#ff678e 272px,#ff3f69 308px,#ff204c 354px,#ff002e 443px,#ff0012 650px)"></i>
<i style="height:2px;background:linear-gradient(90deg,#00ffbe 12px,#00ffd6 88px,#01fff3 151px,#3fffff 170px,#ffd9ff 224px,#ffb7de 234px,#ff96bf 246px,#ff6590 273px,#ff3d6a 309px,#ff1f4d 355px,#ff0030 441px,#ff0013 648px)"></i>
<i style="height:2px;background:linear-gradient(90deg,#00ffc2 13px,#00ffdb 89px,#00fffa 151px,#1dffff 160px,#ffd1fe 226px,#ffb0de 236px,#ff91c0 248px,#ff6090 276px,#ff3a6b 312px,#ff1d4e 358px,#ff0032 439px,#ff0021 529px,#ff0014 647px)"></i>
<i style="height:2px;background:linear-gradient(90deg,#00ffc6 13px,#00ffdf 87px,#00feff 151px,#6fe8ff 186px,#ffc9fd 228px,#ff8cc0 250px,#ff5d90 278px,#ff386c 314px,#ff1b4f 360px,#f03 438px,#f02 528px,#ff0015 645px)"></i>
<i style="height:2px;background:linear-gradient(90deg,#00ffca 14px,#00ffe2 82px,#00fffe 139px,#00f8ff 151px,#73e1ff 188px,#ffc4ff 229px,#ff89c2 251px,#ff5b93 279px,#ff366d 315px,#ff1a50 362px,#ff0035 436px,#ff0023 525px,#ff0016 643px)"></i>
<i style="height:2px;background:linear-gradient(90deg,#00ffce 15px,#0ff 130px,#01f2ff 152px,#79d9ff 191px,#ffbdfe 231px,#ff84c2 253px,#ff5692 282px,#ff336e 318px,#ff1851 365px,#ff0037 435px,#ff0025 524px,#ff0016 642px)"></i>
<i style="height:2px;background:linear-gradient(90deg,#00ffd2 15px,#0ff 120px,#00ecff 152px,#70d5ff 189px,#ffb5fd 233px,#ff7fc2 255px,#ff5393 284px,#ff316e 320px,#ff1751 367px,#ff0039 433px,#ff0026 522px,#ff0017 640px)"></i>
<i style="height:2px;background:linear-gradient(90deg,#00ffd7 16px,#0ff 110px,#00e7ff 152px,#7acdff 193px,#ffb1ff 234px,#ff7ac2 257px,#ff5195 285px,#ff2f6f 322px,#ff1552 369px,#ff003b 431px,#ff0027 521px,#ff0018 639px)"></i>
<i style="height:2px;background:linear-gradient(90deg,#00ffdb 16px,#0ff 100px,#00e2ff 152px,#6ecaff 190px,#ffabfe 236px,#ff7bc9 256px,#ff549c 282px,#ff3579 314px,#ff1c5c 354px,#ff003d 430px,#ff0029 519px,#ff0019 637px)"></i>
<i style="height:2px;background:linear-gradient(90deg,#00ffdf 17px,#0ff 90px,#01dcff 153px,#71c4ff 192px,#ffa4fd 238px,#ff75c7 259px,#ff519d 284px,#ff327a 316px,#ff1a5d 356px,#ff003f 428px,#ff002a 517px,#ff001a 635px)"></i>
<i style="height:2px;background:linear-gradient(90deg,#00ffe4 17px,#0ff 80px,#00d7ff 153px,#7dbcff 197px,#ffa0ff 239px,#ff72c9 260px,#ff4f9e 285px,#ff317b 317px,#ff195f 356px,#ff0041 426px,#ff002c 515px,#ff001b 634px)"></i>
<i style="height:2px;background:linear-gradient(90deg,#00ffe8 18px,#0ff 70px,#00d2ff 153px,#71baff 194px,#ff9afe 241px,#ff6ec9 262px,#ff4c9f 287px,#ff2f7c 319px,#ff1860 358px,#ff0043 425px,#ff002d 514px,#ff001c 632px)"></i>
<i style="height:2px;background:linear-gradient(90deg,#00ffed 19px,#0ff 61px,#00ceff 153px,#69b6ff 192px,#ff94fd 243px,#ff6ac9 264px,#ff49a0 289px,#ff2d7d 321px,#ff1661 360px,#ff0045 423px,#ff002e 512px,#ff001d 631px)"></i>
<i style="height:2px;background:linear-gradient(90deg,#00fff1 19px,#0ff 51px,#00c9ff 154px,#7dadff 200px,#ff91ff 244px,#ff68cb 265px,#ff46a0 291px,#ff2c7e 322px,#ff1562 361px,#ff0047 422px,#ff0030 511px,#ff001e 629px)"></i>
<i style="height:2px;background:linear-gradient(90deg,#00fff6 20px,#0ff 41px,#00c4ff 154px,#75aaff 198px,#ff8bfe 246px,#ff64cb 267px,#ff43a1 293px,#ff297f 324px,#ff1463 363px,#ff0049 420px,#ff0031 509px,#ff001f 627px)"></i>
<i style="height:2px;background:linear-gradient(90deg,#00fffb 21px,#00f7ff 48px,#00c0ff 154px,#6da8ff 196px,#ff86fd 248px,#ff60cb 269px,#ff40a1 295px,#ff2880 326px,#ff1364 365px,#ff004c 418px,#f03 507px,#ff0020 626px)"></i>
<i style="height:2px;background:linear-gradient(90deg,#0ff 21px,#01bcff 155px,#7da0ff 203px,#ff83ff 249px,#ff5dcd 270px,#ff3fa3 296px,#ff2682 327px,#ff1266 365px,#ff004e 417px,#ff0034 506px,#f02 624px)"></i>
<i style="height:2px;background:linear-gradient(90deg,#00faff 22px,#00b8ff 155px,#789dff 202px,#ff7efe 251px,#ff5acd 272px,#ff3ca3 298px,#ff2482 329px,#ff1167 367px,#ff0050 415px,#ff0036 503px,#ff0023 622px)"></i>
<i style="height:2px;background:linear-gradient(90deg,#00f6ff 22px,#00b4ff 155px,#709aff 200px,#ff79fd 253px,#ff56cc 274px,#ff3aa4 300px,#ff2283 331px,#ff0f68 369px,#ff0052 413px,#ff003f 471px,#ff0024 621px)"></i>
<i style="height:2px;background:linear-gradient(90deg,#00f1ff 23px,#00b0ff 155px,#7695ff 203px,#ff76ff 254px,#ff54ce 275px,#ff38a5 301px,#ff2185 332px,#ff0f6a 369px,#ff0054 412px,#ff0041 470px,#ff0025 619px)"></i>
<i style="height:2px;background:linear-gradient(90deg,#00ecff 24px,#01acff 156px,#7891ff 205px,#ff71fe 256px,#ff51ce 277px,#ff35a6 303px,#ff1f85 334px,#ff0d6a 371px,#ff0057 410px,#ff0042 471px,#ff0026 618px)"></i>
<i style="height:2px;background:linear-gradient(90deg,#00e8ff 24px,#00a9ff 156px,#748eff 204px,#ff6dfd 258px,#ff4dce 279px,#ff33a6 305px,#ff1e86 336px,#ff0c6b 373px,#ff0059 409px,#ff0043 472px,#ff0027 616px)"></i>
<i style="height:2px;background:linear-gradient(90deg,#00e4ff 25px,#00a5ff 156px,#7989ff 207px,#ff6aff 259px,#ff4bd0 280px,#ff32a9 305px,#ff1d88 336px,#ff0b6d 373px,#ff005b 407px,#f04 471px,#ff0028 614px)"></i>
<i style="height:2px;background:linear-gradient(90deg,#00e0ff 26px,#00a2ff 156px,#6f88ff 204px,#ff66fe 261px,#ff48d0 282px,#ff2fa8 308px,#ff1b89 338px,#ff0a6e 375px,#ff005e 405px,#ff0045 472px,#ff0029 613px)"></i>
<i style="height:2px;background:linear-gradient(90deg,#00dcff 26px,#009eff 157px,#7483ff 207px,#ff61fd 263px,#ff45d0 284px,#ff2eaa 309px,#ff1a8a 339px,#ff096f 376px,#ff0060 404px,#ff0047 472px,#ff002a 611px)"></i>
<i style="height:2px;background:linear-gradient(90deg,#00d8ff 27px,#009bff 157px,#7b7eff 211px,#ff5fff 264px,#ff43d1 285px,#ff2cac 310px,#ff198c 340px,#ff0871 377px,#ff0063 402px,#ff0048 473px,#ff002b 610px)"></i>
<i style="height:2px;background:linear-gradient(90deg,#00d4ff 28px,#0098ff 157px,#727dff 208px,#ff5bfe 266px,#ff40d1 287px,#ff29ab 313px,#ff178b 343px,#ff0771 379px,#ff0065 401px,#ff0049 473px,#ff002c 608px)"></i>
<i style="height:2px;background:linear-gradient(90deg,#00d1ff 28px,#0195ff 158px,#727aff 209px,#ff57fd 268px,#ff3dd1 289px,#ff28ac 314px,#ff168d 344px,#ff0673 380px,#ff0068 399px,#ff004a 473px,#ff002e 606px)"></i>
<i style="height:2px;background:linear-gradient(90deg,#00cdff 29px,#0092ff 158px,#7c74ff 214px,#f5f 269px,#ff3cd3 290px,#ff26ae 315px,#ff158e 345px,#ff0574 381px,#ff006b 397px,#ff004b 474px,#ff002f 605px)"></i>
<i style="height:2px;background:linear-gradient(90deg,#00caff 30px,#008fff 158px,#7573ff 212px,#ff51fe 271px,#ff39d3 292px,#ff24ae 317px,#ff138f 347px,#ff0475 382px,#ff004d 474px,#ff0030 603px)"></i>
<i style="height:2px;background:linear-gradient(90deg,#00c6ff 30px,#008cff 158px,#6e71ff 210px,#ff4efd 273px,#ff36d3 294px,#ff22ae 319px,#ff118f 349px,#ff0376 384px,#ff004d 475px,#ff0031 602px)"></i>
<i style="height:2px;background:linear-gradient(90deg,#00c3ff 31px,#0189ff 159px,#7c6bff 217px,#ff4bff 274px,#ff34d4 295px,#ff21b0 320px,#ff1192 349px,#ff0378 384px,#ff004f 474px,#ff0032 600px)"></i>
<i style="height:2px;background:linear-gradient(90deg,#00bfff 32px,#0086ff 159px,#7769ff 216px,#ff48fe 276px,#ff32d4 297px,#ff1fb0 322px,#ff0f92 351px,#ff0278 386px,#ff0050 475px,#f03 598px)"></i>
<i style="height:2px;background:linear-gradient(90deg,#00bcff 32px,#0084ff 159px,#7168ff 214px,#ff45fd 278px,#ff2fd4 299px,#ff1db0 324px,#ff0e93 353px,#ff0179 387px,#ff0051 475px,#ff0035 597px)"></i>
<i style="height:2px;background:linear-gradient(90deg,#00b9ff 33px,#0081ff 159px,#7664ff 217px,#ff43ff 279px,#ff2ed5 300px,#ff1cb2 325px,#ff0d94 354px,#ff007b 388px,#ff0053 475px,#ff0036 595px)"></i>
<i style="height:2px;background:linear-gradient(90deg,#00b6ff 34px,#017eff 160px,#7861ff 219px,#ff40fe 281px,#ff2bd5 302px,#ff1ab3 326px,#ff0c95 355px,#ff007c 389px,#ff0054 475px,#ff0037 594px)"></i>
<i style="height:2px;background:linear-gradient(90deg,#00b3ff 35px,#007cff 160px,#7460ff 218px,#ff3dfd 283px,#ff29d5 304px,#ff18b2 329px,#ff0a95 358px,#ff007c 391px,#f05 476px,#ff0038 592px)"></i>
<i style="height:2px;background:linear-gradient(90deg,#00b0ff 35px,#007aff 160px,#785cff 221px,#ff3bff 284px,#ff27d7 305px,#ff17b5 329px,#ff0997 358px,#ff007e 391px,#ff0057 475px,#ff003a 590px)"></i>
<i style="height:2px;background:linear-gradient(90deg,#00adff 36px,#0177ff 161px,#785aff 222px,#ff38fe 286px,#ff25d6 307px,#ff16b5 331px,#ff0898 359px,#ff0080 392px,#ff0058 475px,#ff003b 589px)"></i>
<i style="height:2px;background:linear-gradient(90deg,#0af 37px,#0075ff 161px,#7c56ff 225px,#ff36ff 287px,#ff24d8 308px,#ff14b6 332px,#ff008a 379px,#ff0081 393px,#ff0059 475px,#ff003c 587px)"></i>
<i style="height:2px;background:linear-gradient(90deg,#00a7ff 37px,#0073ff 161px,#7a54ff 225px,#f3f 289px,#ff21d8 310px,#ff13b7 334px,#ff008e 377px,#ff0082 394px,#ff005a 476px,#ff003d 586px)"></i>
<i style="height:2px;background:linear-gradient(90deg,#00a5ff 38px,#0071ff 161px,#7254ff 222px,#ff30fe 291px,#ff20d9 311px,#ff11b8 335px,#ff0091 376px,#ff0083 395px,#ff005c 476px,#ff003f 584px)"></i>
<i style="height:2px;background:linear-gradient(90deg,#00a2ff 39px,#016eff 162px,#7c4fff 228px,#ff2eff 292px,#ff1ed9 313px,#ff10b8 337px,#ff0094 374px,#ff0084 396px,#ff005d 476px,#ff0040 582px)"></i>
<i style="height:2px;background:linear-gradient(90deg,#009fff 40px,#006cff 162px,#7a4dff 228px,#ff2cff 294px,#ff1cda 314px,#ff0fba 338px,#ff0097 373px,#ff0085 397px,#ff005e 476px,#ff0041 581px)"></i>
<i style="height:2px;background:linear-gradient(90deg,#009dff 40px,#006aff 162px,#754dff 226px,#ff29fe 296px,#ff1ada 316px,#ff0dba 340px,#ff009b 371px,#ff0087 398px,#ff0060 476px,#ff0042 579px)"></i>
<i style="height:2px;background:linear-gradient(90deg,#009aff 41px,#0068ff 162px,#794aff 229px,#ff28ff 297px,#ff18da 318px,#ff0cbb 341px,#ff009e 370px,#f08 399px,#ff0061 476px,#f04 577px)"></i>
<i style="height:2px;background:linear-gradient(90deg,#0097ff 42px,#0166ff 163px,#7b47ff 231px,#ff25ff 299px,#ff17db 319px,#ff0abb 343px,#ff00a2 368px,#ff0089 400px,#ff0062 476px,#ff0045 576px)"></i>
<i style="height:2px;background:linear-gradient(90deg,#0095ff 43px,#0064ff 163px,#7746ff 230px,#ff23fe 301px,#ff15db 321px,#ff09bc 344px,#ff00a6 366px,#ff008a 401px,#ff0064 476px,#ff0047 574px)"></i>
<i style="height:2px;background:linear-gradient(90deg,#0093ff 43px,#0062ff 163px,#7b43ff 233px,#ff21ff 302px,#ff14dc 322px,#ff08be 345px,#ff00a9 365px,#ff008b 402px,#ff0065 476px,#ff0048 573px)"></i>
<i style="height:2px;background:linear-gradient(90deg,#0090ff 44px,#0160ff 164px,#7b41ff 234px,#ff1fff 304px,#ff12dc 324px,#ff06be 347px,#ff00ad 363px,#ff008c 403px,#f06 476px,#ff0049 571px)"></i>
<i style="height:2px;background:linear-gradient(90deg,#008eff 45px,#005eff 164px,#7740ff 233px,#ff1dfe 306px,#ff10dc 326px,#ff05be 349px,#ff008d 404px,#ff0068 476px,#ff004b 569px)"></i>
<i style="height:2px;background:linear-gradient(90deg,#008bff 46px,#005dff 164px,#7d3dff 237px,#ff1bff 307px,#ff0fdd 327px,#ff04bf 350px,#ff008e 405px,#ff0069 476px,#ff004c 568px)"></i>
<i style="height:2px;background:linear-gradient(90deg,#0089ff 46px,#005bff 164px,#773cff 235px,#ff19ff 309px,#ff03c0 351px,#ff0090 405px,#ff006b 475px,#ff004e 566px)"></i>
<i style="height:2px;background:linear-gradient(90deg,#0087ff 47px,#0159ff 165px,#783aff 236px,#ff17fe 311px,#ff01c0 353px,#ff0091 407px,#ff006c 476px,#ff004f 565px)"></i>
<i style="height:2px;background:linear-gradient(90deg,#0085ff 48px,#0057ff 165px,#7d37ff 240px,#ff15ff 312px,#ff00c2 354px,#ff0092 407px,#ff006d 475px,#ff0050 563px)"></i>
<i style="height:2px;background:linear-gradient(90deg,#0082ff 49px,#0056ff 165px,#7936ff 239px,#ff13ff 314px,#ff00c3 355px,#ff0093 408px,#ff006f 475px,#ff0052 561px)"></i>
<i style="height:2px;background:linear-gradient(90deg,#0080ff 50px,#0054ff 165px,#7336ff 236px,#ff11fe 316px,#ff00c3 357px,#ff0095 409px,#ff0070 475px,#ff0053 560px)"></i>
<i style="height:2px;background:linear-gradient(90deg,#007eff 50px,#0152ff 166px,#7d32ff 243px,#ff10ff 317px,#ff00c4 358px,#ff0096 409px,#ff0072 475px,#f05 558px)"></i>
<i style="height:2px;background:linear-gradient(90deg,#007cff 51px,#0051ff 166px,#7a31ff 242px,#ff0eff 319px,#ff00c4 360px,#ff0097 411px,#ff0072 476px,#ff0056 557px)"></i>
<i style="height:2px;background:linear-gradient(90deg,#007aff 52px,#004fff 166px,#7531ff 240px,#ff0cfe 321px,#ff00d6 347px,#ff00c5 361px,#ff0098 412px,#ff0074 475px,#ff0058 555px)"></i>
<i style="height:2px;background:linear-gradient(90deg,#0078ff 53px,#014eff 167px,#7d2dff 246px,#ff0bff 322px,#ff00db 345px,#ff00c6 362px,#f09 412px,#ff0076 475px,#ff0059 553px)"></i>
<i style="height:2px;background:linear-gradient(90deg,#0076ff 54px,#004cff 167px,#7a2cff 245px,#ff09ff 324px,#ff00df 344px,#ff00c6 364px,#ff009b 413px,#f07 475px,#ff005b 552px)"></i>
<i style="height:2px;background:linear-gradient(90deg,#0074ff 55px,#004bff 167px,#772cff 244px,#ff07fe 326px,#ff00e5 342px,#ff00c8 365px,#ff009c 414px,#ff0078 475px,#ff005c 550px)"></i>
<i style="height:2px;background:linear-gradient(90deg,#0072ff 55px,#0049ff 167px,#7a29ff 247px,#ff06ff 327px,#ff00c9 366px,#ff009d 414px,#ff007a 474px,#ff005e 549px)"></i>
<i style="height:2px;background:linear-gradient(90deg,#0070ff 56px,#0148ff 168px,#7a28ff 248px,#ff04ff 329px,#ff00ca 367px,#ff009e 415px,#ff007c 474px,#ff0060 547px)"></i>
<i style="height:2px;background:linear-gradient(90deg,#006fff 57px,#0046ff 168px,#7727ff 247px,#ff03fe 331px,#ff00ca 369px,#ff009f 416px,#ff007d 474px,#ff0061 545px)"></i>
<i style="height:2px;background:linear-gradient(90deg,#006dff 58px,#0045ff 168px,#7d24ff 252px,#ff02ff 332px,#ff00cb 370px,#ff00a1 416px,#ff007f 473px,#ff0063 544px)"></i>
<i style="height:2px;background:linear-gradient(90deg,#006bff 59px,#04f 168px,#7724ff 249px,#ff00fe 334px,#f0c 371px,#ff00a2 417px,#ff0080 473px,#ff0064 542px)"></i>
<i style="height:2px;background:linear-gradient(90deg,#0069ff 60px,#0142ff 169px,#7723ff 250px,#ff00fe 336px,#f0c 373px,#ff00a3 418px,#ff0082 473px,#f06 541px)"></i>
<i style="height:2px;background:linear-gradient(90deg,#0067ff 61px,#0041ff 169px,#7d20ff 255px,#f0f 337px,#ff00cd 374px,#ff00a5 418px,#ff0083 473px,#ff0068 539px)"></i>
<i style="height:2px;background:linear-gradient(90deg,#06f 61px,#0040ff 169px,#7920ff 253px,#ff00fe 339px,#ff00ce 375px,#ff00a6 419px,#ff0085 472px,#ff006a 537px)"></i>
<i style="height:2px;background:linear-gradient(90deg,#0064ff 62px,#013eff 170px,#7320ff 250px,#ea00ff 327px,#ff00fe 341px,#ff00ce 377px,#ff00a7 420px,#ff0086 473px,#ff006b 536px)"></i>
<i style="height:2px;background:linear-gradient(90deg,#0062ff 63px,#013dff 170px,#701fff 249px,#e500ff 326px,#f0f 342px,#ff00d0 377px,#ff00a9 420px,#f08 472px,#ff006d 534px)"></i>
<i style="height:2px;background:linear-gradient(90deg,#0061ff 64px,#003cff 170px,#6d1fff 248px,#e000ff 324px,#ff00fe 344px,#ff00d0 379px,#f0a 421px,#ff0089 472px,#ff006e 533px)"></i>
<i style="height:2px;background:linear-gradient(90deg,#005fff 65px,#003bff 170px,#691fff 246px,#db00ff 322px,#fe00ff 345px,#ff00d0 381px,#ff00ab 422px,#ff008b 472px,#ff0070 531px)"></i>
<i style="height:2px;background:linear-gradient(90deg,#005dff 66px,#013aff 171px,#d700ff 321px,#f0f 347px,#ff00d2 381px,#ff00ac 422px,#ff008d 471px,#ff0072 529px)"></i>
<i style="height:2px;background:linear-gradient(90deg,#005cff 67px,#0038ff 171px,#d100ff 319px,#ff00fe 349px,#ff00d2 383px,#ff00ad 423px,#ff008e 471px,#ff0074 528px)"></i>
<i style="height:2px;background:linear-gradient(90deg,#005aff 68px,#0037ff 171px,#ce00ff 318px,#f0f 350px,#ff00d3 384px,#ff00ae 424px,#ff008f 471px,#ff0076 526px)"></i>
<i style="height:2px;background:linear-gradient(90deg,#0059ff 69px,#0036ff 171px,#c900ff 316px,#f0f 352px,#ff00d4 385px,#ff00b0 424px,#ff0091 470px,#ff0078 524px)"></i>
<i style="height:2px;background:linear-gradient(90deg,#0057ff 70px,#0135ff 172px,#c400ff 314px,#ff00fe 354px,#ff00d4 387px,#ff00b1 425px,#ff0093 470px,#ff0079 523px)"></i>
<i style="height:2px;background:linear-gradient(90deg,#0056ff 70px,#0034ff 172px,#c000ff 313px,#f0f 355px,#ff00d5 388px,#ff00b3 425px,#ff0095 469px,#ff007b 521px)"></i>
<i style="height:2px;background:linear-gradient(90deg,#0054ff 71px,#03f 172px,#bc00ff 311px,#f0f 357px,#ff00d6 389px,#ff00b4 426px,#ff0096 469px,#ff007d 520px)"></i>
<i style="height:2px;background:linear-gradient(90deg,#0053ff 72px,#0132ff 173px,#b800ff 310px,#ff00fe 359px,#ff00d7 390px,#ff00b5 426px,#ff0098 468px,#ff007f 518px)"></i>
<i style="height:2px;background:linear-gradient(90deg,#0051ff 73px,#0131ff 173px,#b400ff 308px,#f0f 360px,#ff00d7 392px,#ff00b6 427px,#ff0081 516px)"></i>
<i style="height:2px;background:linear-gradient(90deg,#0050ff 74px,#0030ff 173px,#af00ff 306px,#f0f 362px,#ff00d9 392px,#ff00b8 427px,#ff0083 515px)"></i>
<i style="height:2px;background:linear-gradient(90deg,#004eff 75px,#002fff 173px,#ac00ff 305px,#ff00fe 364px,#ff00d9 394px,#ff00b9 428px,#ff0085 513px)"></i>
<i style="height:2px;background:linear-gradient(90deg,#004dff 76px,#012eff 174px,#a800ff 303px,#f0f 365px,#ff00da 395px,#f0b 428px,#ff0087 512px)"></i>
<i style="height:2px;background:linear-gradient(90deg,#004cff 77px,#002dff 174px,#a300ff 301px,#f0f 367px,#ff00db 396px,#ff00bc 429px,#ff0089 510px)"></i>
<i style="height:2px;background:linear-gradient(90deg,#004aff 78px,#002cff 174px,#a000ff 300px,#ff00fe 369px,#ff00dc 397px,#ff00bd 429px,#ff008b 508px)"></i>
<i style="height:2px;background:linear-gradient(90deg,#0049ff 79px,#002bff 174px,#9c00ff 298px,#f0f 370px,#ff00dc 399px,#ff00be 430px,#ff008d 507px)"></i>
<i style="height:2px;background:linear-gradient(90deg,#0048ff 80px,#012aff 175px,#90f 297px,#f0f 372px,#ff00de 399px,#ff00c0 430px,#ff008f 505px)"></i>
<i style="height:2px;background:linear-gradient(90deg,#0046ff 81px,#0029ff 175px,#9500ff 295px,#ff00fe 374px,#ff00c1 431px,#ff0091 504px)"></i>
<i style="height:2px;background:linear-gradient(90deg,#0045ff 82px,#0028ff 175px,#9100ff 293px,#f0f 375px,#ff00c3 431px,#ff0094 502px)"></i>
<i style="height:2px;background:linear-gradient(90deg,#04f 83px,#0027ff 175px,#8e00ff 292px,#f0f 377px,#ff00c4 431px,#ff0096 500px)"></i>
<i style="height:2px;background:linear-gradient(90deg,#0042ff 84px,#0126ff 176px,#8b00ff 290px,#ff00fe 379px,#ff00c5 432px,#ff0098 499px)"></i>
<i style="height:2px;background:linear-gradient(90deg,#0041ff 85px,#0025ff 176px,#80f 289px,#f0f 380px,#ff00c7 432px,#ff009a 497px)"></i>
<i style="height:2px;background:linear-gradient(90deg,#0040ff 86px,#0025ff 176px,#8400ff 287px,#f0f 382px,#ff00c8 433px,#ff009c 496px)"></i>
<i style="height:2px;background:linear-gradient(90deg,#003fff 87px,#0123ff 177px,#8000ff 285px,#fe00ff 383px,#ff00ca 433px,#ff009f 494px)"></i>
<i style="height:2px;background:linear-gradient(90deg,#003dff 88px,#0023ff 177px,#7e00ff 284px,#f0f 385px,#ff00cb 433px,#ff00a1 492px)"></i>
<i style="height:2px;background:linear-gradient(90deg,#003cff 89px,#02f 177px,#7a00ff 282px,#f0f 387px,#f0c 434px,#ff00a3 491px)"></i>
<i style="height:2px;background:linear-gradient(90deg,#003bff 89px,#0021ff 177px,#7800ff 281px,#fe00ff 388px,#ff00cd 435px,#ff00a6 489px)"></i>
<i style="height:2px;background:linear-gradient(90deg,#003aff 90px,#0120ff 178px,#7400ff 279px,#f0f 390px,#ff00cf 435px,#ff00a8 488px)"></i>
<i style="height:2px;background:linear-gradient(90deg,#0039ff 91px,#001fff 178px,#7100ff 277px,#fe00ff 391px,#ff00d0 436px,#f0a 486px)"></i>
<i style="height:2px;background:linear-gradient(90deg,#0038ff 92px,#001fff 178px,#6f00ff 276px,#fe00ff 393px,#ff00d2 435px,#ff00ad 484px)"></i>
<i style="height:2px;background:linear-gradient(90deg,#0037ff 93px,#001eff 178px,#6b00ff 274px,#f0f 395px,#ff00d3 436px,#ff00af 483px)"></i>
<i style="height:2px;background:linear-gradient(90deg,#0036ff 94px,#011dff 179px,#6900ff 273px,#fe00ff 396px,#ff00d4 437px,#ff00b2 481px)"></i>
<i style="height:2px;background:linear-gradient(90deg,#0035ff 95px,#001cff 179px,#60f 271px,#fe00ff 398px,#ff00d6 437px,#ff00b4 480px)"></i>
<i style="height:2px;background:linear-gradient(90deg,#03f 96px,#001cff 179px,#6300ff 269px,#f0f 400px,#ff00d8 436px,#ff00b7 478px)"></i>
<i style="height:2px;background:linear-gradient(90deg,#0032ff 97px,#011bff 180px,#6100ff 268px,#fe00ff 401px,#ff00d8 438px,#ff00ba 476px)"></i>
<i style="height:2px;background:linear-gradient(90deg,#0031ff 98px,#001aff 180px,#5d00ff 266px,#fe00ff 403px,#ff00da 438px,#ff00bc 475px)"></i>
<i style="height:2px;background:linear-gradient(90deg,#0030ff 99px,#0019ff 180px,#5a00ff 264px,#f0f 405px,#f0d 437px,#ff00bf 473px)"></i>
<i style="height:2px;background:linear-gradient(90deg,#002fff 100px,#0019ff 180px,#5800ff 263px,#f0f 407px,#ff00c2 471px)"></i>
<i style="height:2px;background:linear-gradient(90deg,#002eff 101px,#0118ff 181px,#50f 261px,#fe00ff 408px,#ff00c4 470px)"></i>
<i style="height:2px;background:linear-gradient(90deg,#002dff 102px,#0017ff 181px,#5300ff 260px,#f0f 410px,#ff00c7 468px)"></i>
<i style="height:2px;background:linear-gradient(90deg,#002cff 103px,#0017ff 181px,#5100ff 258px,#fe00ff 411px,#ff00c9 467px)"></i>
<i style="height:2px;background:linear-gradient(90deg,#002bff 105px,#0016ff 181px,#4e00ff 256px,#f0f 413px,#ff00cd 465px)"></i>
<i style="height:2px;background:linear-gradient(90deg,#002aff 106px,#0115ff 182px,#4c00ff 255px,#f0f 415px,#ff00d0 463px)"></i>
<i style="height:2px;background:linear-gradient(90deg,#0029ff 107px,#0014ff 182px,#4900ff 253px,#fe00ff 416px,#ff00d2 462px)"></i>
<i style="height:2px;background:linear-gradient(90deg,#0028ff 108px,#0014ff 182px,#4700ff 252px,#f0f 418px,#ff00d6 460px)"></i>
<i style="height:2px;background:linear-gradient(90deg,#0027ff 109px,#0013ff 182px,#40f 250px,#f0f 420px,#ff00d8 459px)"></i>
<i style="height:2px;background:linear-gradient(90deg,#0026ff 110px,#0112ff 183px,#4200ff 248px,#fe00ff 421px,#ff00db 457px)"></i>
<i style="height:2px;background:linear-gradient(90deg,#0025ff 111px,#0012ff 183px,#4000ff 247px,#f0f 423px,#ff00df 455px)"></i>
<i style="height:2px;background:linear-gradient(90deg,#0024ff 112px,#01f 183px,#3d00ff 245px,#f0f 425px,#ff00e1 454px)"></i>
<i style="height:2px;background:linear-gradient(90deg,#0023ff 113px,#0110ff 184px,#3c00ff 244px,#fe00ff 426px,#ff00e5 452px)"></i>
<i style="height:2px;background:linear-gradient(90deg,#0023ff 114px,#0010ff 184px,#3900ff 242px,#f0f 428px,#ff00e8 451px)"></i>
<i style="height:2px;background:linear-gradient(90deg,#02f 115px,#000fff 184px,#3700ff 240px,#f0f 430px,#ff00eb 449px)"></i>
<i style="height:2px;background:linear-gradient(90deg,#0021ff 116px,#000fff 184px,#3500ff 239px,#fe00ff 431px,#ff00ef 447px)"></i>
<i style="height:2px;background:linear-gradient(90deg,#0020ff 117px,#010eff 185px,#3200ff 237px,#f0f 433px,#ff00f2 446px)"></i>
<i style="height:2px;background:linear-gradient(90deg,#001fff 118px,#000eff 185px,#3000ff 235px,#f0f 435px,#ff00f5 444px)"></i>
<i style="height:2px;background:linear-gradient(90deg,#001eff 119px,#000dff 185px,#2e00ff 234px,#fe00ff 436px,#ff00f8 443px)"></i>
<i style="height:2px;background:linear-gradient(90deg,#001dff 120px,#010cff 186px,#2c00ff 232px,#ff00fc 441px)"></i>
<i style="height:2px;background:linear-gradient(90deg,#001cff 121px,#010cff 186px,#2b00ff 231px,#fe00ff 439px)"></i>
<i style="height:2px;background:linear-gradient(90deg,#001bff 123px,#000bff 186px,#2800ff 229px,#fb00ff 438px)"></i>
<i style="height:2px;background:linear-gradient(90deg,#001bff 124px,#000bff 186px,#2600ff 227px,#f700ff 436px)"></i>
<i style="height:2px;background:linear-gradient(90deg,#001aff 125px,#010aff 187px,#2500ff 226px,#f400ff 435px)"></i>
<i style="height:2px;background:linear-gradient(90deg,#0019ff 126px,#000aff 187px,#20f 224px,#f100ff 433px)"></i>
<i style="height:2px;background:linear-gradient(90deg,#0018ff 127px,#0009ff 187px,#2100ff 223px,#ed00ff 431px)"></i>
<i style="height:2px;background:linear-gradient(90deg,#0017ff 128px,#0009ff 187px,#1f00ff 221px,#ea00ff 430px)"></i>
<i style="height:2px;background:linear-gradient(90deg,#0017ff 129px,#0108ff 188px,#1c00ff 219px,#e600ff 428px)"></i>
<i style="height:2px;background:linear-gradient(90deg,#0016ff 130px,#0007ff 188px,#1b00ff 218px,#e300ff 426px)"></i>
<i style="height:2px;background:linear-gradient(90deg,#0015ff 132px,#0007ff 188px,#1900ff 216px,#e000ff 425px)"></i>
<i style="height:2px;background:linear-gradient(90deg,#0014ff 133px,#0007ff 188px,#1800ff 215px,#d0f 423px)"></i>
<i style="height:2px;background:linear-gradient(90deg,#0013ff 134px,#0106ff 189px,#1600ff 213px,#da00ff 422px)"></i>
<i style="height:2px;background:linear-gradient(90deg,#0013ff 135px,#0005ff 189px,#1300ff 211px,#d700ff 420px)"></i>
<i style="height:2px;background:linear-gradient(90deg,#0012ff 136px,#0005ff 189px,#1200ff 210px,#d300ff 418px)"></i>
<i style="height:2px;background:linear-gradient(90deg,#01f 137px,#0104ff 190px,#1000ff 208px,#d100ff 417px)"></i>
<i style="height:2px;background:linear-gradient(90deg,#0010ff 138px,#0004ff 190px,#ce00ff 415px)"></i>
<i style="height:2px;background:linear-gradient(90deg,#0010ff 140px,#0004ff 190px,#cb00ff 414px)"></i>
<i style="height:2px;background:linear-gradient(90deg,#000fff 141px,#0003ff 190px,#c800ff 412px)"></i>
<i style="height:2px;background:linear-gradient(90deg,#000eff 142px,#0102ff 191px,#c500ff 410px)"></i>
<i style="height:2px;background:linear-gradient(90deg,#000dff 143px,#0002ff 191px,#c300ff 409px)"></i>
<i style="height:2px;background:linear-gradient(90deg,#000dff 144px,#0002ff 191px,#bf00ff 407px)"></i>
<i style="height:2px;background:linear-gradient(90deg,#000cff 146px,#0001ff 191px,#bd00ff 406px)"></i>
<i style="height:2px;background:linear-gradient(90deg,#000bff 147px,#0101ff 192px,#ba00ff 404px)"></i>
<i style="height:2px;background:linear-gradient(90deg,#000bff 148px,#00f 192px,#b700ff 402px)"></i>
<i style="height:2px;background:linear-gradient(90deg,#000aff 149px,#00f 192px,#b500ff 401px)"></i>
<i style="height:2px;background:linear-gradient(90deg,#0009ff 151px,#0100ff 193px,#b200ff 399px)"></i>
<i style="height:2px;background:linear-gradient(90deg,#0008ff 152px,#00f 193px,#b000ff 398px)"></i>
<i style="height:2px;background:linear-gradient(90deg,#0008ff 153px,#00f 193px,#ad00ff 396px)"></i>
<i style="height:2px;background:linear-gradient(90deg,#0007ff 154px,#00f 193px,#a0f 394px)"></i>
<i style="height:2px;background:linear-gradient(90deg,#0006ff 156px,#0100ff 194px,#a800ff 393px)"></i>
<i style="height:2px;background:linear-gradient(90deg,#0006ff 157px,#00f 194px,#a500ff 391px)"></i>
<i style="height:2px;background:linear-gradient(90deg,#0005ff 158px,#00f 194px,#a300ff 390px)"></i>
<i style="height:2px;background:linear-gradient(90deg,#0004ff 159px,#00f 194px,#a000ff 388px)"></i>
<i style="height:2px;background:linear-gradient(90deg,#0004ff 161px,#0100ff 195px,#9e00ff 386px)"></i>
<i style="height:2px;background:linear-gradient(90deg,#0003ff 162px,#00f 195px,#9c00ff 385px)"></i>
<i style="height:2px;background:linear-gradient(90deg,#0002ff 163px,#00f 195px,#90f 383px)"></i>
<i style="height:2px;background:linear-gradient(90deg,#0002ff 165px,#00f 195px,#9700ff 382px)"></i>
<i style="height:2px;background:linear-gradient(90deg,#0001ff 166px,#0100ff 196px,#9500ff 380px)"></i>
<i style="height:2px;background:linear-gradient(90deg,#00f 168px,#00f 196px,#9200ff 378px)"></i>
<i style="height:2px;background:linear-gradient(90deg,#00f 169px,#00f 196px,#9000ff 377px)"></i>
<i style="height:2px;background:linear-gradient(90deg,#00f 170px,#0100ff 197px,#8e00ff 375px)"></i>
<i style="height:2px;background:linear-gradient(90deg,#00f 172px,#00f 197px,#8b00ff 373px)"></i>
<i style="height:2px;background:linear-gradient(90deg,#00f 173px,#00f 197px,#8a00ff 372px)"></i>
<i style="height:2px;background:linear-gradient(90deg,#00f 174px,#00f 197px,#8700ff 370px)"></i>
<i style="height:2px;background:linear-gradient(90deg,#00f 176px,#0100ff 198px,#8500ff 369px)"></i>
<i style="height:2px;background:linear-gradient(90deg,#00f 177px,#00f 198px,#8300ff 367px)"></i>
<i style="height:2px;background:linear-gradient(90deg,#00f 179px,#00f 198px,#8100ff 365px)"></i>
<i style="height:2px;background:linear-gradient(90deg,#00f 180px,#00f 198px,#7f00ff 364px)"></i>
<i style="height:2px;background:linear-gradient(90deg,#00f 182px,#0100ff 199px,#7d00ff 362px)"></i>
<i style="height:2px;background:linear-gradient(90deg,#00f 183px,#00f 199px,#7b00ff 361px)"></i>
<i style="height:2px;background:linear-gradient(90deg,#00f 185px,#00f 199px,#7900ff 359px)"></i>
<i style="height:2px;background:linear-gradient(90deg,#00f 186px,#0100ff 200px,#7600ff 357px)"></i>
<i style="height:2px;background:linear-gradient(90deg,#00f 188px,#00f 200px,#7500ff 356px)"></i>
<i style="height:2px;background:linear-gradient(90deg,#00f 189px,#00f 200px,#7300ff 354px)"></i>
<i style="height:2px;background:linear-gradient(90deg,#00f 191px,#00f 200px,#7100ff 353px)"></i>
<i style="height:2px;background:linear-gradient(90deg,#00f 192px,#0100ff 201px,#6f00ff 351px)"></i>
<i style="height:2px;background:linear-gradient(90deg,#00f 194px,#00f 201px,#6d00ff 349px)"></i>
<i style="height:2px;background:linear-gradient(90deg,#00f 196px,#6b00ff 348px)"></i>
<i style="height:2px;background:linear-gradient(90deg,#00f 197px,#6900ff 346px)"></i>
<i style="height:2px;background:linear-gradient(90deg,#00f 199px,#6800ff 345px)"></i>
<i style="height:2px;background:linear-gradient(90deg,#00f 201px,#60f 343px)"></i>
<i style="height:2px;background:linear-gradient(90deg,#0100ff 203px,#6300ff 341px)"></i>
<i style="height:2px;background:linear-gradient(90deg,#0100ff 204px,#6200ff 340px)"></i>
<i style="height:2px;background:linear-gradient(90deg,#0300ff 206px,#6000ff 338px)"></i>
<i style="height:2px;background:linear-gradient(90deg,#0400ff 208px,#5f00ff 337px)"></i>
<i style="height:2px;background:linear-gradient(90deg,#0500ff 210px,#5d00ff 335px)"></i>
<i style="height:2px;background:linear-gradient(90deg,#0600ff 212px,#5b00ff 333px)"></i>
<i style="height:2px;background:linear-gradient(90deg,#0700ff 214px,#5900ff 332px)"></i>
<i style="height:2px;background:linear-gradient(90deg,#0800ff 216px,#5700ff 330px)"></i>
<i style="height:2px;background:linear-gradient(90deg,#0900ff 218px,#50f 328px)"></i>
<i style="height:2px;background:linear-gradient(90deg,#0a00ff 219px,#5400ff 327px)"></i>
<i style="height:2px;background:linear-gradient(90deg,#0b00ff 221px,#5200ff 325px)"></i>
<i style="height:2px;background:linear-gradient(90deg,#0c00ff 223px,#5100ff 324px)"></i>
<i style="height:2px;background:linear-gradient(90deg,#0d00ff 225px,#4f00ff 322px)"></i>
<i style="height:2px;background:linear-gradient(90deg,#0e00ff 227px,#4d00ff 320px)"></i>
<i style="height:2px;background:linear-gradient(90deg,#0f00ff 229px,#4c00ff 319px)"></i>
<i style="height:2px;background:linear-gradient(90deg,#10f 231px,#4a00ff 317px)"></i>
<i style="height:2px;background:linear-gradient(90deg,#1200ff 233px,#4900ff 316px)"></i>
<i style="height:2px;background:linear-gradient(90deg,#1300ff 235px,#4700ff 314px)"></i>
<i style="height:2px;background:linear-gradient(90deg,#1400ff 237px,#4500ff 312px)"></i>
<i style="height:2px;background:linear-gradient(90deg,#1500ff 239px,#40f 311px)"></i>
<i style="height:2px;background:linear-gradient(90deg,#1600ff 241px,#4300ff 309px)"></i>
<i style="height:2px;background:linear-gradient(90deg,#1700ff 243px,#4100ff 308px)"></i>
<i style="height:2px;background:linear-gradient(90deg,#1800ff 245px,#4000ff 306px)"></i>
<i style="height:2px;background:linear-gradient(90deg,#1900ff 247px,#3e00ff 304px)"></i>
<i style="height:2px;background:linear-gradient(90deg,#1a00ff 249px,#3d00ff 303px)"></i>
<i style="height:2px;background:linear-gradient(90deg,#1b00ff 251px,#3b00ff 301px)"></i>
<i style="height:2px;background:linear-gradient(90deg,#1c00ff 253px,#3a00ff 300px)"></i>
<i style="height:2px;background:linear-gradient(90deg,#1d00ff 255px,#3800ff 298px)"></i>
<i style="height:2px;background:linear-gradient(90deg,#1e00ff 257px,#3700ff 296px)"></i>
<i style="height:2px;background:linear-gradient(90deg,#1f00ff 259px,#3600ff 295px)"></i>
<i style="height:2px;background:linear-gradient(90deg,#2000ff 261px,#3400ff 293px)"></i>
<i style="height:2px;background:linear-gradient(90deg,#2100ff 263px,#30f 292px)"></i>
<i style="height:2px;background:linear-gradient(90deg,#20f 265px,#3100ff 290px)"></i>
<i style="height:2px;background:linear-gradient(90deg,#2300ff 267px,#3000ff 288px)"></i>
<i style="height:2px;background:linear-gradient(90deg,#2400ff 269px,#2f00ff 287px)"></i>
<i style="height:2px;background:linear-gradient(90deg,#2500ff 271px,#2d00ff 285px)"></i>
<i style="height:2px;background:linear-gradient(90deg,#2600ff 274px,#2c00ff 284px)"></i>
<i style="height:2px"></i>
<i style="height:2px"></i>
<i style="height:2px"></i>
<i style="height:2px"></i>
<i style="height:2px"></i>
<i style="height:2px"></i>
<i style="height:2px"></i>
</div>
<svg style="left:1203px;top:106px" width="717" height="697" viewBox="1203 106 717 697" font-family="Liberation Sans, sans-serif"><defs><clipPath id="plotclip"><rect x="1250" y="145" width="657" height="612"/></clipPath></defs><path d="M1531.0 741.1L1530.9 741.1L1530.7 741.3L1530.6 741.5L1530.4 741.6L1530.1 741.7L1529.7 741.7L1529.3 741.7L1528.8 741.7L1528.2 741.7L1527.5 741.5L1526.8 741.2L1525.9 740.8L1525.0 740.1L1524.1 739.4L1523.1 738.6L1522.0 737.5L1520.7 736.3L1519.2 734.9L1517.6 733.3L1515.8 731.5L1513.8 729.5L1511.7 727.3L1509.3 724.9L1506.7 722.3L1503.9 719.5L1500.9 716.5L1497.7 713.3L1494.2 709.9L1490.4 706.1L1486.3 701.9L1481.6 697.1L1476.3 691.6L1470.8 685.8L1465.2 679.9L1459.9 674.2L1455.2 669.1L1451.3 664.6L1447.9 660.6L1444.7 656.8L1441.6 653.0L1438.4 648.7L1434.7 643.7L1430.6 638.1L1426.3 632.0L1421.8 625.6L1417.1 618.8L1412.3 611.5L1407.4 603.8L1402.4 595.8L1397.1 587.3L1391.8 578.3L1386.3 569.0L1380.8 559.4L1375.2 549.3L1369.5 538.9L1363.7 527.9L1357.8 516.6L1351.9 505.0L1346.0 493.3L1340.3 481.5L1334.5 469.5L1328.7 457.3L1322.9 445.0L1317.3 432.6L1311.8 420.2L1306.6 408.1L1301.7 396.1L1297.0 384.0L1292.5 372.0L1288.2 360.2L1284.2 348.7L1280.4 337.7L1276.8 327.0L1273.5 316.5L1270.4 306.3L1267.5 296.5L1264.9 287.2L1262.5 278.3L1260.4 269.9L1258.6 262.0L1256.9 254.4L1255.5 247.3L1254.3 240.6L1253.3 234.2L1252.5 228.2L1251.8 222.6L1251.4 217.4L1251.1 212.3L1251.0 207.3L1251.1 202.6L1251.3 198.1L1251.6 194.0L1252.2 190.1L1252.8 186.5L1253.7 183.1L1254.6 179.9L1255.7 177.0L1256.9 174.3L1258.3 171.8L1259.7 169.7L1261.3 167.8L1263.0 166.0L1264.7 164.4L1266.6 163.1L1268.5 161.9L1270.6 160.9L1272.7 160.0L1274.8 159.2L1277.0 158.5L1279.3 157.9L1281.7 157.5L1284.1 157.2L1286.5 156.9L1289.0 156.6L1291.5 156.4L1294.0 156.3L1296.6 156.2L1299.2 156.1L1301.8 156.1L1304.4 156.0L1307.0 156.0L1309.5 156.0L1312.1 156.0L1314.7 156.1L1317.4 156.2L1320.0 156.3L1322.7 156.4L1325.4 156.5L1328.0 156.6L1330.8 156.8L1333.5 157.0L1336.3 157.2L1339.2 157.4L1342.0 157.6L1344.9 157.9L1347.9 158.1L1350.9 158.4L1353.9 158.7L1357.0 159.0L1360.1 159.4L1363.3 159.7L1366.5 160.1L1369.7 160.4L1373.0 160.8L1376.4 161.2L1379.8 161.6L1383.3 162.0L1386.8 162.5L1390.4 162.9L1394.0 163.4L1397.7 163.8L1401.5 164.3L1405.4 164.8L1409.3 165.3L1413.2 165.9L1417.3 166.4L1421.4 166.9L1425.6 167.5L1429.8 168.1L1434.2 168.7L1438.6 169.3L1443.0 169.9L1447.6 170.5L1452.2 171.1L1456.9 171.8L1461.7 172.5L1466.6 173.2L1471.5 173.9L1476.6 174.6L1481.7 175.4L1486.9 176.2L1492.1 177.0L1497.4 177.8L1502.9 178.1L1508.4 178.9L1513.9 179.7L1519.6 180.5L1525.3 181.3L1531.1 182.1L1537.0 182.9L1543.0 183.7L1549.0 184.6L1555.1 185.4L1561.3 186.3L1567.6 187.1L1573.9 188.0L1580.2 188.9L1586.7 189.8L1593.2 190.7L1599.7 191.6L1606.3 192.5L1612.9 193.4L1619.5 194.4L1626.2 195.3L1632.9 196.2L1639.6 197.2L1646.3 198.1L1652.9 199.0L1659.4 200.0L1666.0 200.9L1672.4 201.8L1678.9 202.7L1685.3 203.6L1691.7 204.4L1698.1 205.3L1704.5 206.2L1710.9 207.1L1717.2 208.0L1723.4 208.9L1729.5 209.7L1735.1 210.5L1740.4 211.2L1745.5 211.9L1750.8 212.6L1756.8 213.5L1763.7 214.4L1772.0 215.6L1781.4 216.9L1791.4 218.3L1801.4 219.7L1811.1 221.0L1819.7 222.2L1827.4 223.3L1834.5 224.3L1841.2 225.2L1847.6 226.1L1853.6 227.0L1859.4 227.8L1865.0 228.5L1870.3 229.3L1875.3 230.0L1879.9 230.6L1884.4 231.3L1888.5 231.8L1892.4 232.4L1895.9 232.9L1899.2 233.3L1902.2 233.7L1905.0 234.1L1907.6 234.5L1910.0 234.8L1912.1 235.1L1913.9 235.3L1915.6 235.6L1917.3 235.8L1919.0 236.1L1920.8 236.3L1922.7 236.6L1924.4 236.8L1926.1 237.0L1927.6 237.3L1928.9 237.4L1929.9 237.6L1930.8 237.7L1931.4 237.8L1932.0 237.9L1932.4 237.9L1932.7 238.0L1932.7 240.9ZM1743.5 222.9L1386.5 182.5L1441.7 595.6Z" fill="#000" fill-opacity=".4" fill-rule="evenodd" clip-path="url(#plotclip)"/><rect x="1378.8" y="172.9" width="13.300" height="16.200" fill="none" stroke="#fff" stroke-width="1.500"/><rect x="1404.3" y="203.4" width="13.300" height="16.200" fill="none" stroke="#fff" stroke-width="1.500"/><rect x="1444.8" y="193.4" width="13.300" height="16.200" fill="none" stroke="#fff" stroke-width="1.500"/><rect x="1465.8" y="182.9" width="13.300" height="16.200" fill="none" stroke="#fff" stroke-width="1.500"/><rect x="1493.9" y="188.4" width="13.300" height="16.200" fill="none" stroke="#fff" stroke-width="1.500"/><rect x="1442.3" y="220.4" width="13.300" height="16.200" fill="none" stroke="#fff" stroke-width="1.500"/><rect x="1526.3" y="196.3" width="13.300" height="16.200" fill="none" stroke="#fff" stroke-width="1.500"/><rect x="1571.3" y="201.4" width="13.300" height="16.200" fill="none" stroke="#fff" stroke-width="1.500"/><rect x="1571.3" y="205.4" width="13.300" height="16.200" fill="none" stroke="#fff" stroke-width="1.500"/><rect x="1411.3" y="259.4" width="13.300" height="16.200" fill="none" stroke="#fff" stroke-width="1.500"/><rect x="1394.3" y="284.4" width="13.300" height="16.200" fill="none" stroke="#fff" stroke-width="1.500"/><rect x="1590.8" y="254.4" width="13.300" height="16.200" fill="none" stroke="#fff" stroke-width="1.500"/><rect x="1400.3" y="322.5" width="13.300" height="16.200" fill="none" stroke="#fff" stroke-width="1.500"/><rect x="1435.3" y="318.9" width="13.300" height="16.200" fill="none" stroke="#fff" stroke-width="1.500"/><rect x="1456.3" y="325.4" width="13.300" height="16.200" fill="none" stroke="#fff" stroke-width="1.500"/><rect x="1492.8" y="347.9" width="13.300" height="16.200" fill="none" stroke="#fff" stroke-width="1.500"/><rect x="1557.3" y="312.5" width="13.300" height="16.200" fill="none" stroke="#fff" stroke-width="1.500"/><rect x="1437.8" y="385.4" width="13.300" height="16.200" fill="none" stroke="#fff" stroke-width="1.500"/><rect x="1576.8" y="410.4" width="13.300" height="16.200" fill="none" stroke="#fff" stroke-width="1.500"/><rect x="1437.8" y="447.9" width="13.300" height="16.200" fill="none" stroke="#fff" stroke-width="1.500"/><rect x="1435.3" y="587.4" width="13.300" height="16.200" fill="none" stroke="#fff" stroke-width="1.500"/><rect x="1736.8" y="213.2" width="13.300" height="16.200" fill="none" stroke="#fff" stroke-width="1.500"/><rect x="1653.8" y="239.5" width="13.300" height="16.200" fill="none" stroke="#fff" stroke-width="1.500"/><rect x="1535.3" y="212.7" width="13.300" height="16.200" fill="none" stroke="#fff" stroke-width="1.500"/><rect x="1544.8" y="211.7" width="13.300" height="16.200" fill="none" stroke="#fff" stroke-width="1.500"/><rect x="1551.8" y="218.4" width="13.300" height="16.200" fill="none" stroke="#fff" stroke-width="1.500"/><rect x="1518.8" y="221.8" width="13.300" height="16.200" fill="none" stroke="#fff" stroke-width="1.500"/><rect x="1534.8" y="222.6" width="13.300" height="16.200" fill="none" stroke="#fff" stroke-width="1.500"/><rect x="1542.1" y="223.9" width="13.300" height="16.200" fill="none" stroke="#fff" stroke-width="1.500"/><rect x="1544.8" y="229.0" width="13.300" height="16.200" fill="none" stroke="#fff" stroke-width="1.500"/><rect x="1525.3" y="231.3" width="13.300" height="16.200" fill="none" stroke="#fff" stroke-width="1.500"/><rect x="1529.8" y="232.4" width="13.300" height="16.200" fill="none" stroke="#fff" stroke-width="1.500"/><rect x="1500.3" y="231.9" width="13.300" height="16.200" fill="none" stroke="#fff" stroke-width="1.500"/><rect x="1509.3" y="238.3" width="13.300" height="16.200" fill="none" stroke="#fff" stroke-width="1.500"/><rect x="1515.5" y="233.2" width="13.300" height="16.200" fill="none" stroke="#fff" stroke-width="1.500"/><rect x="1498.3" y="246.2" width="13.300" height="16.200" fill="none" stroke="#fff" stroke-width="1.500"/><rect x="1538.3" y="226.9" width="13.300" height="16.200" fill="none" stroke="#fff" stroke-width="1.500"/><rect x="1531.8" y="227.9" width="13.300" height="16.200" fill="none" stroke="#fff" stroke-width="1.500"/><rect x="1459.3" y="269.8" width="12.500" height="15.500" fill="none" stroke="#000" stroke-width="2.200"/><ellipse cx="1397.0" cy="171.0" rx="4.400" ry="5.300" fill="#0f0" stroke="#000" stroke-width="1.200"/><ellipse cx="1469.7" cy="178.7" rx="4.400" ry="5.300" fill="#ff0" stroke="#000" stroke-width="1.200"/><ellipse cx="1493.7" cy="189.4" rx="4.400" ry="5.300" fill="#e7c71f" stroke="#000" stroke-width="1.200"/><ellipse cx="1516.0" cy="192.7" rx="4.400" ry="5.300" fill="#e0a32e" stroke="#000" stroke-width="1.200"/><ellipse cx="1454.5" cy="194.4" rx="4.400" ry="5.300" fill="#9dbc40" stroke="#000" stroke-width="1.200"/><ellipse cx="1422.0" cy="210.0" rx="4.400" ry="5.300" fill="#469449" stroke="#000" stroke-width="1.200"/><ellipse cx="1453.0" cy="227.0" rx="4.400" ry="5.300" fill="#576c43" stroke="#000" stroke-width="1.200"/><ellipse cx="1554.0" cy="198.0" rx="4.400" ry="5.300" fill="#966032" stroke="#000" stroke-width="1.200"/><ellipse cx="1557.5" cy="198.0" rx="4.400" ry="5.300" fill="#af5f23" stroke="#000" stroke-width="1.200"/><ellipse cx="1536.0" cy="204.7" rx="4.400" ry="5.300" fill="#82503a" stroke="#000" stroke-width="1.200"/><ellipse cx="1526.0" cy="211.5" rx="4.400" ry="5.300" fill="#8c552d" stroke="#000" stroke-width="1.200"/><ellipse cx="1547.0" cy="211.5" rx="4.400" ry="5.300" fill="#734632" stroke="#000" stroke-width="1.200"/><ellipse cx="1494.7" cy="256.0" rx="4.400" ry="5.300" fill="#facdb9" stroke="#000" stroke-width="1.200"/><ellipse cx="1496.0" cy="243.7" rx="4.400" ry="5.300" fill="#f5c39b" stroke="#000" stroke-width="1.200"/><ellipse cx="1505.6" cy="244.0" rx="4.400" ry="5.300" fill="#966040" stroke="#000" stroke-width="1.200"/><ellipse cx="1506.0" cy="241.0" rx="4.400" ry="5.300" fill="#c38764" stroke="#000" stroke-width="1.200"/><ellipse cx="1510.0" cy="239.0" rx="4.400" ry="5.300" fill="#c38755" stroke="#000" stroke-width="1.200"/><ellipse cx="1519.0" cy="240.0" rx="4.400" ry="5.300" fill="#c88764" stroke="#000" stroke-width="1.200"/><ellipse cx="1512.0" cy="228.5" rx="4.400" ry="5.300" fill="#cd8c64" stroke="#000" stroke-width="1.200"/><ellipse cx="1523.0" cy="229.7" rx="4.400" ry="5.300" fill="#d78c64" stroke="#000" stroke-width="1.200"/><ellipse cx="1530.0" cy="231.0" rx="4.400" ry="5.300" fill="#c88c6e" stroke="#000" stroke-width="1.200"/><ellipse cx="1529.0" cy="237.0" rx="4.400" ry="5.300" fill="#fa9b78" stroke="#000" stroke-width="1.200"/><ellipse cx="1429.0" cy="272.9" rx="4.400" ry="5.300" fill="#67bdaa" stroke="#000" stroke-width="1.200"/><ellipse cx="1413.7" cy="299.0" rx="4.400" ry="5.300" fill="#0ff" stroke="#000" stroke-width="1.200"/><ellipse cx="1569.6" cy="267.9" rx="4.400" ry="5.300" fill="#c15a63" stroke="#000" stroke-width="1.200"/><ellipse cx="1465.9" cy="288.0" rx="4.400" ry="5.300" fill="#f0f0f0" stroke="#000" stroke-width="1.200"/><ellipse cx="1466.9" cy="282.7" rx="4.400" ry="5.300" fill="#969696" stroke="#000" stroke-width="1.200"/><ellipse cx="1464.0" cy="318.5" rx="4.400" ry="5.300" fill="#000" stroke="#000" stroke-width="1.200"/><ellipse cx="1419.6" cy="339.0" rx="4.400" ry="5.300" fill="#0885a1" stroke="#000" stroke-width="1.200"/><ellipse cx="1450.0" cy="334.0" rx="4.400" ry="5.300" fill="#627a9d" stroke="#000" stroke-width="1.200"/><ellipse cx="1466.0" cy="341.0" rx="4.400" ry="5.300" fill="#8580b1" stroke="#000" stroke-width="1.200"/><ellipse cx="1544.0" cy="330.0" rx="4.400" ry="5.300" fill="#bb5695" stroke="#000" stroke-width="1.200"/><ellipse cx="1488.0" cy="380.0" rx="4.400" ry="5.300" fill="#5e3c6c" stroke="#000" stroke-width="1.200"/><ellipse cx="1452.0" cy="400.0" rx="4.400" ry="5.300" fill="#505ba6" stroke="#000" stroke-width="1.200"/><ellipse cx="1452.0" cy="475.0" rx="4.400" ry="5.300" fill="#383d96" stroke="#000" stroke-width="1.200"/><ellipse cx="1565.0" cy="450.9" rx="4.400" ry="5.300" fill="#f0f" stroke="#000" stroke-width="1.200"/><ellipse cx="1454.6" cy="616.8" rx="4.400" ry="5.300" fill="#00f" stroke="#000" stroke-width="1.200"/><ellipse cx="1721.0" cy="211.5" rx="4.400" ry="5.300" fill="#f00" stroke="#000" stroke-width="1.200"/><ellipse cx="1645.0" cy="248.9" rx="4.400" ry="5.300" fill="#af363c" stroke="#000" stroke-width="1.200"/><rect x="1249.300" y="143.800" width="659" height="614.500" fill="none" stroke="#9a9a9a" stroke-width="1.600"/><path d="M1249.5 759v7M1243 758.0h6" stroke="#c4c4c4" stroke-width="1.500"/><text x="1249.5" y="785" font-size="18.200" fill="#d0d0d0" text-anchor="middle" textLength="8.1" lengthAdjust="spacingAndGlyphs">0</text><text x="1242.500" y="766.8" font-size="18.200" fill="#d0d0d0" text-anchor="end" textLength="8.1" lengthAdjust="spacingAndGlyphs">0</text><path d="M1304.3 759v7M1243 707.0h6" stroke="#c4c4c4" stroke-width="1.500"/><text x="1304.3" y="785" font-size="18.200" fill="#d0d0d0" text-anchor="middle" textLength="28.3" lengthAdjust="spacingAndGlyphs">0.05</text><text x="1242.500" y="715.6" font-size="18.200" fill="#d0d0d0" text-anchor="end" textLength="28.3" lengthAdjust="spacingAndGlyphs">0.05</text><path d="M1359.1 759v7M1243 655.9h6" stroke="#c4c4c4" stroke-width="1.500"/><text x="1359.1" y="785" font-size="18.200" fill="#d0d0d0" text-anchor="middle" textLength="20.2" lengthAdjust="spacingAndGlyphs">0.1</text><text x="1242.500" y="664.5" font-size="18.200" fill="#d0d0d0" text-anchor="end" textLength="20.2" lengthAdjust="spacingAndGlyphs">0.1</text><path d="M1413.9 759v7M1243 604.8h6" stroke="#c4c4c4" stroke-width="1.500"/><text x="1413.9" y="785" font-size="18.200" fill="#d0d0d0" text-anchor="middle" textLength="28.3" lengthAdjust="spacingAndGlyphs">0.15</text><text x="1242.500" y="613.3" font-size="18.200" fill="#d0d0d0" text-anchor="end" textLength="28.3" lengthAdjust="spacingAndGlyphs">0.15</text><path d="M1468.7 759v7M1243 553.8h6" stroke="#c4c4c4" stroke-width="1.500"/><text x="1468.7" y="785" font-size="18.200" fill="#d0d0d0" text-anchor="middle" textLength="20.2" lengthAdjust="spacingAndGlyphs">0.2</text><text x="1242.500" y="562.1" font-size="18.200" fill="#d0d0d0" text-anchor="end" textLength="20.2" lengthAdjust="spacingAndGlyphs">0.2</text><path d="M1523.5 759v7M1243 502.8h6" stroke="#c4c4c4" stroke-width="1.500"/><text x="1523.5" y="785" font-size="18.200" fill="#d0d0d0" text-anchor="middle" textLength="28.3" lengthAdjust="spacingAndGlyphs">0.25</text><text x="1242.500" y="511.0" font-size="18.200" fill="#d0d0d0" text-anchor="end" textLength="28.3" lengthAdjust="spacingAndGlyphs">0.25</text><path d="M1578.3 759v7M1243 451.7h6" stroke="#c4c4c4" stroke-width="1.500"/><text x="1578.3" y="785" font-size="18.200" fill="#d0d0d0" text-anchor="middle" textLength="20.2" lengthAdjust="spacingAndGlyphs">0.3</text><text x="1242.500" y="459.8" font-size="18.200" fill="#d0d0d0" text-anchor="end" textLength="20.2" lengthAdjust="spacingAndGlyphs">0.3</text><path d="M1633.1 759v7M1243 400.6h6" stroke="#c4c4c4" stroke-width="1.500"/><text x="1633.1" y="785" font-size="18.200" fill="#d0d0d0" text-anchor="middle" textLength="28.3" lengthAdjust="spacingAndGlyphs">0.35</text><text x="1242.500" y="408.6" font-size="18.200" fill="#d0d0d0" text-anchor="end" textLength="28.3" lengthAdjust="spacingAndGlyphs">0.35</text><path d="M1687.9 759v7M1243 349.6h6" stroke="#c4c4c4" stroke-width="1.500"/><text x="1687.9" y="785" font-size="18.200" fill="#d0d0d0" text-anchor="middle" textLength="20.2" lengthAdjust="spacingAndGlyphs">0.4</text><text x="1242.500" y="357.5" font-size="18.200" fill="#d0d0d0" text-anchor="end" textLength="20.2" lengthAdjust="spacingAndGlyphs">0.4</text><path d="M1742.7 759v7M1243 298.6h6" stroke="#c4c4c4" stroke-width="1.500"/><text x="1742.7" y="785" font-size="18.200" fill="#d0d0d0" text-anchor="middle" textLength="28.3" lengthAdjust="spacingAndGlyphs">0.45</text><text x="1242.500" y="306.3" font-size="18.200" fill="#d0d0d0" text-anchor="end" textLength="28.3" lengthAdjust="spacingAndGlyphs">0.45</text><path d="M1797.5 759v7M1243 247.5h6" stroke="#c4c4c4" stroke-width="1.500"/><text x="1797.5" y="785" font-size="18.200" fill="#d0d0d0" text-anchor="middle" textLength="20.2" lengthAdjust="spacingAndGlyphs">0.5</text><text x="1242.500" y="255.1" font-size="18.200" fill="#d0d0d0" text-anchor="end" textLength="20.2" lengthAdjust="spacingAndGlyphs">0.5</text><path d="M1852.3 759v7M1243 196.4h6" stroke="#c4c4c4" stroke-width="1.500"/><text x="1852.3" y="785" font-size="18.200" fill="#d0d0d0" text-anchor="middle" textLength="28.3" lengthAdjust="spacingAndGlyphs">0.55</text><text x="1242.500" y="204.0" font-size="18.200" fill="#d0d0d0" text-anchor="end" textLength="28.3" lengthAdjust="spacingAndGlyphs">0.55</text><defs><linearGradient id="insg" x1="0" y1="0" x2="1" y2="1"><stop offset="0" stop-color="#ff8c2a"/><stop offset=".5" stop-color="#ff6a2c"/><stop offset="1" stop-color="#ff4020"/></linearGradient></defs><rect x="1695" y="539" width="210" height="169.500" fill="#222"/><rect x="1697.500" y="543" width="204.500" height="161.500" fill="url(#insg)" stroke="#8a8a8a" stroke-width="1.500"/><path d="M1698.700 631v20" stroke="#fff" stroke-width="1"/><rect x="1724.8" y="591.0" width="13.500" height="16.500" fill="none" stroke="#fff" stroke-width="1.300"/><rect x="1832.7" y="567.2" width="13.500" height="16.500" fill="none" stroke="#fff" stroke-width="1.300"/><rect x="1883.8" y="567.2" width="13.500" height="16.500" fill="none" stroke="#fff" stroke-width="1.300"/><rect x="1792.2" y="614.5" width="13.500" height="16.500" fill="none" stroke="#fff" stroke-width="1.300"/><rect x="1880.7" y="613.5" width="13.500" height="16.500" fill="none" stroke="#fff" stroke-width="1.300"/><rect x="1811.8" y="631.9" width="13.500" height="16.500" fill="none" stroke="#fff" stroke-width="1.300"/><rect x="1702.8" y="631.9" width="13.500" height="16.500" fill="none" stroke="#fff" stroke-width="1.300"/><rect x="1710.8" y="642.4" width="13.500" height="16.500" fill="none" stroke="#fff" stroke-width="1.300"/><rect x="1719.0" y="657.5" width="13.500" height="16.500" fill="none" stroke="#fff" stroke-width="1.300"/><rect x="1796.5" y="662.5" width="13.500" height="16.500" fill="none" stroke="#fff" stroke-width="1.300"/><ellipse cx="1718.0" cy="597.9" rx="4.300" ry="5.200" fill="#d78c5f" stroke="#000" stroke-width="1.200"/><ellipse cx="1733.0" cy="618.2" rx="4.300" ry="5.200" fill="#cd8255" stroke="#000" stroke-width="1.200"/><ellipse cx="1709.0" cy="646.9" rx="4.300" ry="5.200" fill="#fa9678" stroke="#000" stroke-width="1.200"/><rect x="1645.500" y="717" width="259.500" height="34.500" fill="#333"/><text x="1646.400" y="743.300" font-size="25.300" fill="#f0f0f0" textLength="228.500" lengthAdjust="spacingAndGlyphs">RGB Triplet: 217, 140, 94</text></svg>
<!-- statistics -->
<span class="t" style="left:252.7px;top:811.8px;font-size:35.4px;line-height:35.4px;color:#ececec;transform:scaleX(0.853);-webkit-text-stroke:.6px #ececec;">Avg dE2000: 4.91</span>
<span class="t" style="left:239.3px;top:862.4px;font-size:35.4px;line-height:35.4px;color:#ececec;transform:scaleX(0.868);-webkit-text-stroke:.6px #ececec;">Max dE2000: 10.15</span>
<span class="t" style="left:215.7px;top:920.8px;font-size:35.4px;line-height:35.4px;color:#ececec;transform:scaleX(0.866);-webkit-text-stroke:.6px #ececec;">Current Reading</span>
<span class="t" style="left:215.7px;top:970.5px;font-size:30.5px;line-height:30.5px;color:#ececec;transform:scaleX(0.837);-webkit-text-stroke:.6px #ececec;">x: 0.4272</span>
<span class="t" style="left:376.7px;top:970.5px;font-size:30.5px;line-height:30.5px;color:#ececec;transform:scaleX(0.845);-webkit-text-stroke:.6px #ececec;">y: 0.3915</span>
<span class="t" style="left:215.7px;top:1021.5px;font-size:30.5px;line-height:30.5px;color:#ececec;transform:scaleX(0.837);-webkit-text-stroke:.6px #ececec;">fL: 34.39</span>
<span class="t" style="left:215.7px;top:1063.0px;font-size:30.5px;line-height:30.5px;color:#ececec;transform:scaleX(0.887);-webkit-text-stroke:.6px #ececec;">cd/m²: 117.83</span>
<!-- data table -->
<div style="left:532px;top:821px;width:1388px;height:34.8px;background:linear-gradient(#2e2e2e,#242424 48%,#181818 52%,#141414)"></div>
<div style="left:532px;top:821px;width:9.5px;height:34.8px;background:#000"></div>
<span class="t" style="left:623.7px;top:829.8px;font-size:18.4px;line-height:18.4px;color:#fff;transform:scaleX(0.565);">White</span>
<span class="t" style="left:664.8px;top:829.8px;font-size:18.4px;line-height:18.4px;color:#fff;transform:scaleX(0.565);">Gray 80</span>
<span class="t" style="left:707.5px;top:829.8px;font-size:18.4px;line-height:18.4px;color:#fff;transform:scaleX(0.565);">Gray 65</span>
<span class="t" style="left:750.3px;top:829.8px;font-size:18.4px;line-height:18.4px;color:#fff;transform:scaleX(0.565);">Gray 50</span>
<span class="t" style="left:792.8px;top:829.8px;font-size:18.4px;line-height:18.4px;color:#fff;transform:scaleX(0.565);">Gray 35</span>
<span class="t" style="left:835.4px;top:829.8px;font-size:18.4px;line-height:18.4px;color:#fff;transform:scaleX(0.565);">Black</span>
<span class="t" style="left:866.3px;top:829.8px;font-size:18.4px;line-height:18.4px;color:#fff;transform:scaleX(0.565);">Dark Skin</span>
<span class="t" style="left:916.7px;top:829.8px;font-size:18.4px;line-height:18.4px;color:#fff;transform:scaleX(0.565);">Light Skin</span>
<span class="t" style="left:968.0px;top:829.8px;font-size:18.4px;line-height:18.4px;color:#fff;transform:scaleX(0.565);">Blue Sky</span>
<span class="t" style="left:1013.7px;top:829.8px;font-size:18.4px;line-height:18.4px;color:#fff;transform:scaleX(0.565);">Foliage</span>
<span class="t" style="left:1053.3px;top:829.8px;font-size:18.4px;line-height:18.4px;color:#fff;transform:scaleX(0.565);">Blue Flower</span>
<span class="t" style="left:1116.0px;top:829.8px;font-size:18.4px;line-height:18.4px;color:#fff;transform:scaleX(0.565);">Bluish Green</span>
<span class="t" style="left:1182.3px;top:829.8px;font-size:18.4px;line-height:18.4px;color:#fff;transform:scaleX(0.565);">Orange</span>
<span class="t" style="left:1223.0px;top:829.8px;font-size:18.4px;line-height:18.4px;color:#fff;transform:scaleX(0.565);">Purplish Blue</span>
<span class="t" style="left:1291.7px;top:829.8px;font-size:18.4px;line-height:18.4px;color:#fff;transform:scaleX(0.565);">Moderate Red</span>
<span class="t" style="left:1366.0px;top:829.8px;font-size:18.4px;line-height:18.4px;color:#fff;transform:scaleX(0.565);">Purple</span>
<span class="t" style="left:1403.0px;top:829.8px;font-size:18.4px;line-height:18.4px;color:#fff;transform:scaleX(0.565);">Yellow Green</span>
<span class="t" style="left:1471.6px;top:829.8px;font-size:18.4px;line-height:18.4px;color:#fff;transform:scaleX(0.565);">Orange Yellow</span>
<span class="t" style="left:1545.3px;top:829.8px;font-size:18.4px;line-height:18.4px;color:#fff;transform:scaleX(0.565);">Blue</span>
<span class="t" style="left:1580.4px;top:829.8px;font-size:18.4px;line-height:18.4px;color:#fff;transform:scaleX(0.565);">Green</span>
<span class="t" style="left:1615.5px;top:829.8px;font-size:18.4px;line-height:18.4px;color:#fff;transform:scaleX(0.565);">Red</span>
<span class="t" style="left:1650.3px;top:829.8px;font-size:18.4px;line-height:18.4px;color:#fff;transform:scaleX(0.565);">Yellow</span>
<span class="t" style="left:1691.7px;top:829.8px;font-size:18.4px;line-height:18.4px;color:#fff;transform:scaleX(0.565);">Magenta</span>
<span class="t" style="left:1739.8px;top:829.8px;font-size:18.4px;line-height:18.4px;color:#fff;transform:scaleX(0.565);">Cyan</span>
<span class="t" style="left:1775.2px;top:829.8px;font-size:18.4px;line-height:18.4px;color:#fff;transform:scaleX(0.565);">100% Red</span>
<span class="t" style="left:1828.0px;top:829.8px;font-size:18.4px;line-height:18.4px;color:#fff;transform:scaleX(0.565);">100% Green</span>
<span class="t" style="left:1892.2px;top:829.8px;font-size:18.4px;line-height:18.4px;color:#fff;transform:scaleX(0.565);">100% Blue</span>
<div style="left:532px;top:855.8px;width:1388px;height:32.43px;background:#404040"></div>
<div style="left:532px;top:855.8px;width:9.3px;height:32.43px;background:#222"></div>
<span class="t" style="left:544.0px;top:863.4px;font-size:19.5px;line-height:19.5px;color:#f2f2f2;transform:scaleX(0.535);">x: CIE31</span>
<span class="t" style="left:623.7px;top:863.4px;font-size:19.5px;line-height:19.5px;color:#f2f2f2;transform:scaleX(0.582);">0.31</span>
<span class="t" style="left:664.8px;top:863.4px;font-size:19.5px;line-height:19.5px;color:#f2f2f2;transform:scaleX(0.582);">0.31</span>
<span class="t" style="left:707.5px;top:863.4px;font-size:19.5px;line-height:19.5px;color:#f2f2f2;transform:scaleX(0.582);">0.31</span>
<span class="t" style="left:750.3px;top:863.4px;font-size:19.5px;line-height:19.5px;color:#f2f2f2;transform:scaleX(0.582);">0.31</span>
<span class="t" style="left:792.8px;top:863.4px;font-size:19.5px;line-height:19.5px;color:#f2f2f2;transform:scaleX(0.582);">0.31</span>
<span class="t" style="left:835.4px;top:863.4px;font-size:19.5px;line-height:19.5px;color:#f2f2f2;transform:scaleX(0.582);">0.28</span>
<span class="t" style="left:866.3px;top:863.4px;font-size:19.5px;line-height:19.5px;color:#f2f2f2;transform:scaleX(0.582);">0.39</span>
<span class="t" style="left:916.7px;top:863.4px;font-size:19.5px;line-height:19.5px;color:#f2f2f2;transform:scaleX(0.582);">0.37</span>
<span class="t" style="left:968.0px;top:863.4px;font-size:19.5px;line-height:19.5px;color:#f2f2f2;transform:scaleX(0.582);">0.25</span>
<span class="t" style="left:1013.7px;top:863.4px;font-size:19.5px;line-height:19.5px;color:#f2f2f2;transform:scaleX(0.582);">0.35</span>
<span class="t" style="left:1053.3px;top:863.4px;font-size:19.5px;line-height:19.5px;color:#f2f2f2;transform:scaleX(0.582);">0.27</span>
<span class="t" style="left:1116.0px;top:863.4px;font-size:19.5px;line-height:19.5px;color:#f2f2f2;transform:scaleX(0.582);">0.27</span>
<span class="t" style="left:1182.3px;top:863.4px;font-size:19.5px;line-height:19.5px;color:#f2f2f2;transform:scaleX(0.582);">0.51</span>
<span class="t" style="left:1223.0px;top:863.4px;font-size:19.5px;line-height:19.5px;color:#f2f2f2;transform:scaleX(0.582);">0.22</span>
<span class="t" style="left:1291.7px;top:863.4px;font-size:19.5px;line-height:19.5px;color:#f2f2f2;transform:scaleX(0.582);">0.43</span>
<span class="t" style="left:1366.0px;top:863.4px;font-size:19.5px;line-height:19.5px;color:#f2f2f2;transform:scaleX(0.582);">0.26</span>
<span class="t" style="left:1403.0px;top:863.4px;font-size:19.5px;line-height:19.5px;color:#f2f2f2;transform:scaleX(0.582);">0.39</span>
<span class="t" style="left:1471.6px;top:863.4px;font-size:19.5px;line-height:19.5px;color:#f2f2f2;transform:scaleX(0.582);">0.47</span>
<span class="t" style="left:1545.3px;top:863.4px;font-size:19.5px;line-height:19.5px;color:#f2f2f2;transform:scaleX(0.582);">0.19</span>
<span class="t" style="left:1580.4px;top:863.4px;font-size:19.5px;line-height:19.5px;color:#f2f2f2;transform:scaleX(0.582);">0.32</span>
<span class="t" style="left:1615.5px;top:863.4px;font-size:19.5px;line-height:19.5px;color:#f2f2f2;transform:scaleX(0.582);">0.52</span>
<span class="t" style="left:1650.3px;top:863.4px;font-size:19.5px;line-height:19.5px;color:#f2f2f2;transform:scaleX(0.582);">0.45</span>
<span class="t" style="left:1691.7px;top:863.4px;font-size:19.5px;line-height:19.5px;color:#f2f2f2;transform:scaleX(0.582);">0.35</span>
<span class="t" style="left:1739.8px;top:863.4px;font-size:19.5px;line-height:19.5px;color:#f2f2f2;transform:scaleX(0.582);">0.22</span>
<span class="t" style="left:1775.2px;top:863.4px;font-size:19.5px;line-height:19.5px;color:#f2f2f2;transform:scaleX(0.582);">0.64</span>
<span class="t" style="left:1828.0px;top:863.4px;font-size:19.5px;line-height:19.5px;color:#f2f2f2;transform:scaleX(0.582);">0.33</span>
<span class="t" style="left:1892.2px;top:863.4px;font-size:19.5px;line-height:19.5px;color:#f2f2f2;transform:scaleX(0.582);">0.15</span>
<div style="left:532px;top:887.93px;width:1388px;height:32.43px;background:#808080"></div>
<div style="left:532px;top:887.93px;width:9.3px;height:32.43px;background:#222"></div>
<span class="t" style="left:544.0px;top:895.6px;font-size:19.5px;line-height:19.5px;color:#f2f2f2;transform:scaleX(0.535);">y: CIE31</span>
<span class="t" style="left:623.7px;top:895.6px;font-size:19.5px;line-height:19.5px;color:#f2f2f2;transform:scaleX(0.582);">0.32</span>
<span class="t" style="left:664.8px;top:895.6px;font-size:19.5px;line-height:19.5px;color:#f2f2f2;transform:scaleX(0.582);">0.32</span>
<span class="t" style="left:707.5px;top:895.6px;font-size:19.5px;line-height:19.5px;color:#f2f2f2;transform:scaleX(0.582);">0.32</span>
<span class="t" style="left:750.3px;top:895.6px;font-size:19.5px;line-height:19.5px;color:#f2f2f2;transform:scaleX(0.582);">0.32</span>
<span class="t" style="left:792.8px;top:895.6px;font-size:19.5px;line-height:19.5px;color:#f2f2f2;transform:scaleX(0.582);">0.32</span>
<span class="t" style="left:835.4px;top:895.6px;font-size:19.5px;line-height:19.5px;color:#f2f2f2;transform:scaleX(0.582);">0.27</span>
<span class="t" style="left:866.3px;top:895.6px;font-size:19.5px;line-height:19.5px;color:#f2f2f2;transform:scaleX(0.582);">0.37</span>
<span class="t" style="left:916.7px;top:895.6px;font-size:19.5px;line-height:19.5px;color:#f2f2f2;transform:scaleX(0.582);">0.36</span>
<span class="t" style="left:968.0px;top:895.6px;font-size:19.5px;line-height:19.5px;color:#f2f2f2;transform:scaleX(0.582);">0.26</span>
<span class="t" style="left:1013.7px;top:895.6px;font-size:19.5px;line-height:19.5px;color:#f2f2f2;transform:scaleX(0.582);">0.43</span>
<span class="t" style="left:1053.3px;top:895.6px;font-size:19.5px;line-height:19.5px;color:#f2f2f2;transform:scaleX(0.582);">0.24</span>
<span class="t" style="left:1116.0px;top:895.6px;font-size:19.5px;line-height:19.5px;color:#f2f2f2;transform:scaleX(0.582);">0.35</span>
<span class="t" style="left:1182.3px;top:895.6px;font-size:19.5px;line-height:19.5px;color:#f2f2f2;transform:scaleX(0.582);">0.44</span>
<span class="t" style="left:1223.0px;top:895.6px;font-size:19.5px;line-height:19.5px;color:#f2f2f2;transform:scaleX(0.582);">0.19</span>
<span class="t" style="left:1291.7px;top:895.6px;font-size:19.5px;line-height:19.5px;color:#f2f2f2;transform:scaleX(0.582);">0.31</span>
<span class="t" style="left:1366.0px;top:895.6px;font-size:19.5px;line-height:19.5px;color:#f2f2f2;transform:scaleX(0.582);">0.20</span>
<span class="t" style="left:1403.0px;top:895.6px;font-size:19.5px;line-height:19.5px;color:#f2f2f2;transform:scaleX(0.582);">0.51</span>
<span class="t" style="left:1471.6px;top:895.6px;font-size:19.5px;line-height:19.5px;color:#f2f2f2;transform:scaleX(0.582);">0.48</span>
<span class="t" style="left:1545.3px;top:895.6px;font-size:19.5px;line-height:19.5px;color:#f2f2f2;transform:scaleX(0.582);">0.13</span>
<span class="t" style="left:1580.4px;top:895.6px;font-size:19.5px;line-height:19.5px;color:#f2f2f2;transform:scaleX(0.582);">0.49</span>
<span class="t" style="left:1615.5px;top:895.6px;font-size:19.5px;line-height:19.5px;color:#f2f2f2;transform:scaleX(0.582);">0.32</span>
<span class="t" style="left:1650.3px;top:895.6px;font-size:19.5px;line-height:19.5px;color:#f2f2f2;transform:scaleX(0.582);">0.50</span>
<span class="t" style="left:1691.7px;top:895.6px;font-size:19.5px;line-height:19.5px;color:#f2f2f2;transform:scaleX(0.582);">0.24</span>
<span class="t" style="left:1739.8px;top:895.6px;font-size:19.5px;line-height:19.5px;color:#f2f2f2;transform:scaleX(0.582);">0.25</span>
<span class="t" style="left:1775.2px;top:895.6px;font-size:19.5px;line-height:19.5px;color:#f2f2f2;transform:scaleX(0.582);">0.35</span>
<span class="t" style="left:1828.0px;top:895.6px;font-size:19.5px;line-height:19.5px;color:#f2f2f2;transform:scaleX(0.582);">0.63</span>
<span class="t" style="left:1892.2px;top:895.6px;font-size:19.5px;line-height:19.5px;color:#f2f2f2;transform:scaleX(0.582);">0.05</span>
<div style="left:532px;top:920.06px;width:1388px;height:32.43px;background:#404040"></div>
<div style="left:532px;top:920.06px;width:9.3px;height:32.43px;background:#222"></div>
<span class="t" style="left:544.0px;top:927.7px;font-size:19.5px;line-height:19.5px;color:#f2f2f2;transform:scaleX(0.477);">Y</span>
<span class="t" style="left:623.7px;top:927.7px;font-size:19.5px;line-height:19.5px;color:#f2f2f2;transform:scaleX(0.582);">328.99</span>
<span class="t" style="left:664.8px;top:927.7px;font-size:19.5px;line-height:19.5px;color:#f2f2f2;transform:scaleX(0.582);">259.10</span>
<span class="t" style="left:707.5px;top:927.7px;font-size:19.5px;line-height:19.5px;color:#f2f2f2;transform:scaleX(0.582);">213.81</span>
<span class="t" style="left:750.3px;top:927.7px;font-size:19.5px;line-height:19.5px;color:#f2f2f2;transform:scaleX(0.582);">171.00</span>
<span class="t" style="left:792.8px;top:927.7px;font-size:19.5px;line-height:19.5px;color:#f2f2f2;transform:scaleX(0.582);">123.04</span>
<span class="t" style="left:835.4px;top:927.7px;font-size:19.5px;line-height:19.5px;color:#f2f2f2;transform:scaleX(0.582);">0.46</span>
<span class="t" style="left:866.3px;top:927.7px;font-size:19.5px;line-height:19.5px;color:#f2f2f2;transform:scaleX(0.582);">38.41</span>
<span class="t" style="left:916.7px;top:927.7px;font-size:19.5px;line-height:19.5px;color:#f2f2f2;transform:scaleX(0.582);">123.06</span>
<span class="t" style="left:968.0px;top:927.7px;font-size:19.5px;line-height:19.5px;color:#f2f2f2;transform:scaleX(0.582);">69.77</span>
<span class="t" style="left:1013.7px;top:927.7px;font-size:19.5px;line-height:19.5px;color:#f2f2f2;transform:scaleX(0.582);">50.03</span>
<span class="t" style="left:1053.3px;top:927.7px;font-size:19.5px;line-height:19.5px;color:#f2f2f2;transform:scaleX(0.582);">84.60</span>
<div style="left:1113px;top:920.06px;width:66.3px;height:32.43px;background:#f0f0f0;border:1px solid #f4f4f4;border-left-color:#8c8c8c;border-right-color:#8c8c8c;box-shadow:inset 0 1px 0 #b8b8b8,inset 0 -1px 0 #b8b8b8"></div>
<span class="t" style="left:1116.0px;top:927.7px;font-size:19.5px;line-height:19.5px;color:#000;transform:scaleX(0.582);">148.25</span>
<div style="left:1179.3px;top:920.06px;width:40.7px;height:32.43px;background:#f0f0f0;border:1px solid #f4f4f4;border-left-color:#8c8c8c;border-right-color:#8c8c8c;box-shadow:inset 0 1px 0 #b8b8b8,inset 0 -1px 0 #b8b8b8"></div>
<span class="t" style="left:1182.3px;top:927.7px;font-size:19.5px;line-height:19.5px;color:#000;transform:scaleX(0.582);">96.31</span>
<div style="left:1220px;top:920.06px;width:68.7px;height:32.43px;background:#f0f0f0;border:1px solid #f4f4f4;border-left-color:#8c8c8c;border-right-color:#8c8c8c;box-shadow:inset 0 1px 0 #b8b8b8,inset 0 -1px 0 #b8b8b8"></div>
<span class="t" style="left:1223.0px;top:927.7px;font-size:19.5px;line-height:19.5px;color:#000;transform:scaleX(0.582);">45.35</span>
<div style="left:1288.7px;top:920.06px;width:74.3px;height:32.43px;background:#f0f0f0;border:1px solid #f4f4f4;border-left-color:#8c8c8c;border-right-color:#8c8c8c;box-shadow:inset 0 1px 0 #b8b8b8,inset 0 -1px 0 #b8b8b8"></div>
<span class="t" style="left:1291.7px;top:927.7px;font-size:19.5px;line-height:19.5px;color:#000;transform:scaleX(0.582);">65.64</span>
<div style="left:1363px;top:920.06px;width:37px;height:32.43px;background:#f0f0f0;border:1px solid #f4f4f4;border-left-color:#8c8c8c;border-right-color:#8c8c8c;box-shadow:inset 0 1px 0 #b8b8b8,inset 0 -1px 0 #b8b8b8"></div>
<span class="t" style="left:1366.0px;top:927.7px;font-size:19.5px;line-height:19.5px;color:#000;transform:scaleX(0.582);">23.09</span>
<div style="left:1400px;top:920.06px;width:68.6px;height:32.43px;background:#f0f0f0;border:1px solid #f4f4f4;border-left-color:#8c8c8c;border-right-color:#8c8c8c;box-shadow:inset 0 1px 0 #b8b8b8,inset 0 -1px 0 #b8b8b8"></div>
<span class="t" style="left:1403.0px;top:927.7px;font-size:19.5px;line-height:19.5px;color:#000;transform:scaleX(0.582);">149.96</span>
<div style="left:1468.6px;top:920.06px;width:73.7px;height:32.43px;background:#f0f0f0;border:1px solid #f4f4f4;border-left-color:#8c8c8c;border-right-color:#8c8c8c;box-shadow:inset 0 1px 0 #b8b8b8,inset 0 -1px 0 #b8b8b8"></div>
<span class="t" style="left:1471.6px;top:927.7px;font-size:19.5px;line-height:19.5px;color:#000;transform:scaleX(0.582);">144.50</span>
<div style="left:1542.3px;top:920.06px;width:35.1px;height:32.43px;background:#f0f0f0;border:1px solid #f4f4f4;border-left-color:#8c8c8c;border-right-color:#8c8c8c;box-shadow:inset 0 1px 0 #b8b8b8,inset 0 -1px 0 #b8b8b8"></div>
<span class="t" style="left:1545.3px;top:927.7px;font-size:19.5px;line-height:19.5px;color:#000;transform:scaleX(0.582);">22.21</span>
<div style="left:1577.4px;top:920.06px;width:35.1px;height:32.43px;background:#f0f0f0;border:1px solid #f4f4f4;border-left-color:#8c8c8c;border-right-color:#8c8c8c;box-shadow:inset 0 1px 0 #b8b8b8,inset 0 -1px 0 #b8b8b8"></div>
<span class="t" style="left:1580.4px;top:927.7px;font-size:19.5px;line-height:19.5px;color:#000;transform:scaleX(0.582);">84.20</span>
<span class="t" style="left:1615.5px;top:927.7px;font-size:19.5px;line-height:19.5px;color:#f2f2f2;transform:scaleX(0.582);">37.43</span>
<span class="t" style="left:1650.3px;top:927.7px;font-size:19.5px;line-height:19.5px;color:#f2f2f2;transform:scaleX(0.582);">187.69</span>
<span class="t" style="left:1691.7px;top:927.7px;font-size:19.5px;line-height:19.5px;color:#f2f2f2;transform:scaleX(0.582);">66.74</span>
<span class="t" style="left:1739.8px;top:927.7px;font-size:19.5px;line-height:19.5px;color:#f2f2f2;transform:scaleX(0.582);">70.05</span>
<span class="t" style="left:1775.2px;top:927.7px;font-size:19.5px;line-height:19.5px;color:#f2f2f2;transform:scaleX(0.582);">63.99</span>
<span class="t" style="left:1828.0px;top:927.7px;font-size:19.5px;line-height:19.5px;color:#f2f2f2;transform:scaleX(0.582);">240.21</span>
<span class="t" style="left:1892.2px;top:927.7px;font-size:19.5px;line-height:19.5px;color:#f2f2f2;transform:scaleX(0.582);">23.27</span>
<div style="left:532px;top:952.19px;width:1388px;height:32.43px;background:#808080"></div>
<div style="left:532px;top:952.19px;width:9.3px;height:32.43px;background:#222"></div>
<span class="t" style="left:544.0px;top:959.8px;font-size:19.5px;line-height:19.5px;color:#f2f2f2;transform:scaleX(0.556);">Target x:CIE31</span>
<span class="t" style="left:623.7px;top:959.8px;font-size:19.5px;line-height:19.5px;color:#f2f2f2;transform:scaleX(0.582);">0.31</span>
<span class="t" style="left:664.8px;top:959.8px;font-size:19.5px;line-height:19.5px;color:#f2f2f2;transform:scaleX(0.582);">0.31</span>
<span class="t" style="left:707.5px;top:959.8px;font-size:19.5px;line-height:19.5px;color:#f2f2f2;transform:scaleX(0.582);">0.31</span>
<span class="t" style="left:750.3px;top:959.8px;font-size:19.5px;line-height:19.5px;color:#f2f2f2;transform:scaleX(0.582);">0.31</span>
<span class="t" style="left:792.8px;top:959.8px;font-size:19.5px;line-height:19.5px;color:#f2f2f2;transform:scaleX(0.582);">0.31</span>
<span class="t" style="left:835.4px;top:959.8px;font-size:19.5px;line-height:19.5px;color:#f2f2f2;transform:scaleX(0.582);">0.31</span>
<span class="t" style="left:866.3px;top:959.8px;font-size:19.5px;line-height:19.5px;color:#f2f2f2;transform:scaleX(0.582);">0.40</span>
<span class="t" style="left:916.7px;top:959.8px;font-size:19.5px;line-height:19.5px;color:#f2f2f2;transform:scaleX(0.582);">0.38</span>
<span class="t" style="left:968.0px;top:959.8px;font-size:19.5px;line-height:19.5px;color:#f2f2f2;transform:scaleX(0.582);">0.25</span>
<span class="t" style="left:1013.7px;top:959.8px;font-size:19.5px;line-height:19.5px;color:#f2f2f2;transform:scaleX(0.582);">0.34</span>
<span class="t" style="left:1053.3px;top:959.8px;font-size:19.5px;line-height:19.5px;color:#f2f2f2;transform:scaleX(0.582);">0.27</span>
<span class="t" style="left:1116.0px;top:959.8px;font-size:19.5px;line-height:19.5px;color:#f2f2f2;transform:scaleX(0.582);">0.26</span>
<span class="t" style="left:1182.3px;top:959.8px;font-size:19.5px;line-height:19.5px;color:#f2f2f2;transform:scaleX(0.582);">0.51</span>
<span class="t" style="left:1223.0px;top:959.8px;font-size:19.5px;line-height:19.5px;color:#f2f2f2;transform:scaleX(0.582);">0.22</span>
<span class="t" style="left:1291.7px;top:959.8px;font-size:19.5px;line-height:19.5px;color:#f2f2f2;transform:scaleX(0.582);">0.46</span>
<span class="t" style="left:1366.0px;top:959.8px;font-size:19.5px;line-height:19.5px;color:#f2f2f2;transform:scaleX(0.582);">0.29</span>
<span class="t" style="left:1403.0px;top:959.8px;font-size:19.5px;line-height:19.5px;color:#f2f2f2;transform:scaleX(0.582);">0.38</span>
<span class="t" style="left:1471.6px;top:959.8px;font-size:19.5px;line-height:19.5px;color:#f2f2f2;transform:scaleX(0.582);">0.47</span>
<span class="t" style="left:1545.3px;top:959.8px;font-size:19.5px;line-height:19.5px;color:#f2f2f2;transform:scaleX(0.582);">0.19</span>
<span class="t" style="left:1580.4px;top:959.8px;font-size:19.5px;line-height:19.5px;color:#f2f2f2;transform:scaleX(0.582);">0.31</span>
<span class="t" style="left:1615.5px;top:959.8px;font-size:19.5px;line-height:19.5px;color:#f2f2f2;transform:scaleX(0.582);">0.54</span>
<span class="t" style="left:1650.3px;top:959.8px;font-size:19.5px;line-height:19.5px;color:#f2f2f2;transform:scaleX(0.582);">0.45</span>
<span class="t" style="left:1691.7px;top:959.8px;font-size:19.5px;line-height:19.5px;color:#f2f2f2;transform:scaleX(0.582);">0.37</span>
<span class="t" style="left:1739.8px;top:959.8px;font-size:19.5px;line-height:19.5px;color:#f2f2f2;transform:scaleX(0.582);">0.21</span>
<span class="t" style="left:1775.2px;top:959.8px;font-size:19.5px;line-height:19.5px;color:#f2f2f2;transform:scaleX(0.582);">0.64</span>
<span class="t" style="left:1828.0px;top:959.8px;font-size:19.5px;line-height:19.5px;color:#f2f2f2;transform:scaleX(0.582);">0.30</span>
<span class="t" style="left:1892.2px;top:959.8px;font-size:19.5px;line-height:19.5px;color:#f2f2f2;transform:scaleX(0.582);">0.15</span>
<div style="left:532px;top:984.32px;width:1388px;height:32.43px;background:#404040"></div>
<div style="left:532px;top:984.32px;width:9.3px;height:32.43px;background:#222"></div>
<span class="t" style="left:544.0px;top:992.0px;font-size:19.5px;line-height:19.5px;color:#f2f2f2;transform:scaleX(0.558);">Target y:CIE31</span>
<span class="t" style="left:623.7px;top:992.0px;font-size:19.5px;line-height:19.5px;color:#f2f2f2;transform:scaleX(0.582);">0.33</span>
<span class="t" style="left:664.8px;top:992.0px;font-size:19.5px;line-height:19.5px;color:#f2f2f2;transform:scaleX(0.582);">0.33</span>
<span class="t" style="left:707.5px;top:992.0px;font-size:19.5px;line-height:19.5px;color:#f2f2f2;transform:scaleX(0.582);">0.33</span>
<span class="t" style="left:750.3px;top:992.0px;font-size:19.5px;line-height:19.5px;color:#f2f2f2;transform:scaleX(0.582);">0.33</span>
<span class="t" style="left:792.8px;top:992.0px;font-size:19.5px;line-height:19.5px;color:#f2f2f2;transform:scaleX(0.582);">0.33</span>
<span class="t" style="left:835.4px;top:992.0px;font-size:19.5px;line-height:19.5px;color:#f2f2f2;transform:scaleX(0.582);">0.33</span>
<span class="t" style="left:866.3px;top:992.0px;font-size:19.5px;line-height:19.5px;color:#f2f2f2;transform:scaleX(0.582);">0.36</span>
<span class="t" style="left:916.7px;top:992.0px;font-size:19.5px;line-height:19.5px;color:#f2f2f2;transform:scaleX(0.582);">0.36</span>
<span class="t" style="left:968.0px;top:992.0px;font-size:19.5px;line-height:19.5px;color:#f2f2f2;transform:scaleX(0.582);">0.27</span>
<span class="t" style="left:1013.7px;top:992.0px;font-size:19.5px;line-height:19.5px;color:#f2f2f2;transform:scaleX(0.582);">0.43</span>
<span class="t" style="left:1053.3px;top:992.0px;font-size:19.5px;line-height:19.5px;color:#f2f2f2;transform:scaleX(0.582);">0.25</span>
<span class="t" style="left:1116.0px;top:992.0px;font-size:19.5px;line-height:19.5px;color:#f2f2f2;transform:scaleX(0.582);">0.36</span>
<span class="t" style="left:1182.3px;top:992.0px;font-size:19.5px;line-height:19.5px;color:#f2f2f2;transform:scaleX(0.582);">0.41</span>
<span class="t" style="left:1223.0px;top:992.0px;font-size:19.5px;line-height:19.5px;color:#f2f2f2;transform:scaleX(0.582);">0.19</span>
<span class="t" style="left:1291.7px;top:992.0px;font-size:19.5px;line-height:19.5px;color:#f2f2f2;transform:scaleX(0.582);">0.31</span>
<span class="t" style="left:1366.0px;top:992.0px;font-size:19.5px;line-height:19.5px;color:#f2f2f2;transform:scaleX(0.582);">0.22</span>
<span class="t" style="left:1403.0px;top:992.0px;font-size:19.5px;line-height:19.5px;color:#f2f2f2;transform:scaleX(0.582);">0.49</span>
<span class="t" style="left:1471.6px;top:992.0px;font-size:19.5px;line-height:19.5px;color:#f2f2f2;transform:scaleX(0.582);">0.44</span>
<span class="t" style="left:1545.3px;top:992.0px;font-size:19.5px;line-height:19.5px;color:#f2f2f2;transform:scaleX(0.582);">0.14</span>
<span class="t" style="left:1580.4px;top:992.0px;font-size:19.5px;line-height:19.5px;color:#f2f2f2;transform:scaleX(0.582);">0.49</span>
<span class="t" style="left:1615.5px;top:992.0px;font-size:19.5px;line-height:19.5px;color:#f2f2f2;transform:scaleX(0.582);">0.32</span>
<span class="t" style="left:1650.3px;top:992.0px;font-size:19.5px;line-height:19.5px;color:#f2f2f2;transform:scaleX(0.582);">0.47</span>
<span class="t" style="left:1691.7px;top:992.0px;font-size:19.5px;line-height:19.5px;color:#f2f2f2;transform:scaleX(0.582);">0.25</span>
<span class="t" style="left:1739.8px;top:992.0px;font-size:19.5px;line-height:19.5px;color:#f2f2f2;transform:scaleX(0.582);">0.27</span>
<span class="t" style="left:1775.2px;top:992.0px;font-size:19.5px;line-height:19.5px;color:#f2f2f2;transform:scaleX(0.582);">0.33</span>
<span class="t" style="left:1828.0px;top:992.0px;font-size:19.5px;line-height:19.5px;color:#f2f2f2;transform:scaleX(0.582);">0.60</span>
<span class="t" style="left:1892.2px;top:992.0px;font-size:19.5px;line-height:19.5px;color:#f2f2f2;transform:scaleX(0.582);">0.06</span>
<div style="left:532px;top:1016.45px;width:1388px;height:32.43px;background:#808080"></div>
<div style="left:532px;top:1016.45px;width:9.3px;height:32.43px;background:#222"></div>
<span class="t" style="left:544.0px;top:1024.1px;font-size:19.5px;line-height:19.5px;color:#f2f2f2;transform:scaleX(0.577);">Target Y</span>
<span class="t" style="left:623.7px;top:1024.1px;font-size:19.5px;line-height:19.5px;color:#f2f2f2;transform:scaleX(0.582);">328.99</span>
<span class="t" style="left:664.8px;top:1024.1px;font-size:19.5px;line-height:19.5px;color:#f2f2f2;transform:scaleX(0.582);">260.33</span>
<span class="t" style="left:707.5px;top:1024.1px;font-size:19.5px;line-height:19.5px;color:#f2f2f2;transform:scaleX(0.582);">209.76</span>
<span class="t" style="left:750.3px;top:1024.1px;font-size:19.5px;line-height:19.5px;color:#f2f2f2;transform:scaleX(0.582);">161.54</span>
<span class="t" style="left:792.8px;top:1024.1px;font-size:19.5px;line-height:19.5px;color:#f2f2f2;transform:scaleX(0.582);">112.49</span>
<span class="t" style="left:835.4px;top:1024.1px;font-size:19.5px;line-height:19.5px;color:#f2f2f2;transform:scaleX(0.582);">0.00</span>
<span class="t" style="left:866.3px;top:1024.1px;font-size:19.5px;line-height:19.5px;color:#f2f2f2;transform:scaleX(0.582);">33.14</span>
<span class="t" style="left:916.7px;top:1024.1px;font-size:19.5px;line-height:19.5px;color:#f2f2f2;transform:scaleX(0.582);">114.80</span>
<span class="t" style="left:968.0px;top:1024.1px;font-size:19.5px;line-height:19.5px;color:#f2f2f2;transform:scaleX(0.582);">61.52</span>
<span class="t" style="left:1013.7px;top:1024.1px;font-size:19.5px;line-height:19.5px;color:#f2f2f2;transform:scaleX(0.582);">42.88</span>
<span class="t" style="left:1053.3px;top:1024.1px;font-size:19.5px;line-height:19.5px;color:#f2f2f2;transform:scaleX(0.582);">76.72</span>
<span class="t" style="left:1116.0px;top:1024.1px;font-size:19.5px;line-height:19.5px;color:#f2f2f2;transform:scaleX(0.582);">137.76</span>
<span class="t" style="left:1182.3px;top:1024.1px;font-size:19.5px;line-height:19.5px;color:#f2f2f2;transform:scaleX(0.582);">93.26</span>
<span class="t" style="left:1223.0px;top:1024.1px;font-size:19.5px;line-height:19.5px;color:#f2f2f2;transform:scaleX(0.582);">38.67</span>
<span class="t" style="left:1291.7px;top:1024.1px;font-size:19.5px;line-height:19.5px;color:#f2f2f2;transform:scaleX(0.582);">61.44</span>
<span class="t" style="left:1366.0px;top:1024.1px;font-size:19.5px;line-height:19.5px;color:#f2f2f2;transform:scaleX(0.582);">21.96</span>
<span class="t" style="left:1403.0px;top:1024.1px;font-size:19.5px;line-height:19.5px;color:#f2f2f2;transform:scaleX(0.582);">140.67</span>
<span class="t" style="left:1471.6px;top:1024.1px;font-size:19.5px;line-height:19.5px;color:#f2f2f2;transform:scaleX(0.582);">139.86</span>
<span class="t" style="left:1545.3px;top:1024.1px;font-size:19.5px;line-height:19.5px;color:#f2f2f2;transform:scaleX(0.582);">20.54</span>
<span class="t" style="left:1580.4px;top:1024.1px;font-size:19.5px;line-height:19.5px;color:#f2f2f2;transform:scaleX(0.582);">75.58</span>
<span class="t" style="left:1615.5px;top:1024.1px;font-size:19.5px;line-height:19.5px;color:#f2f2f2;transform:scaleX(0.582);">38.37</span>
<span class="t" style="left:1650.3px;top:1024.1px;font-size:19.5px;line-height:19.5px;color:#f2f2f2;transform:scaleX(0.582);">193.98</span>
<span class="t" style="left:1691.7px;top:1024.1px;font-size:19.5px;line-height:19.5px;color:#f2f2f2;transform:scaleX(0.582);">61.94</span>
<span class="t" style="left:1739.8px;top:1024.1px;font-size:19.5px;line-height:19.5px;color:#f2f2f2;transform:scaleX(0.582);">63.88</span>
<span class="t" style="left:1775.2px;top:1024.1px;font-size:19.5px;line-height:19.5px;color:#f2f2f2;transform:scaleX(0.582);">69.96</span>
<span class="t" style="left:1828.0px;top:1024.1px;font-size:19.5px;line-height:19.5px;color:#f2f2f2;transform:scaleX(0.582);">235.28</span>
<span class="t" style="left:1892.2px;top:1024.1px;font-size:19.5px;line-height:19.5px;color:#f2f2f2;transform:scaleX(0.582);">23.75</span>
<div style="left:532px;top:1048.58px;width:1388px;height:32.43px;background:#404040"></div>
<div style="left:532px;top:1048.58px;width:9.3px;height:32.43px;background:#222"></div>
<span class="t" style="left:544.0px;top:1056.2px;font-size:19.5px;line-height:19.5px;color:#f2f2f2;transform:scaleX(0.565);">ΔE 2000</span>
<span class="t" style="left:623.7px;top:1056.2px;font-size:19.5px;line-height:19.5px;color:#f2f2f2;transform:scaleX(0.582);">6.10</span>
<span class="t" style="left:664.8px;top:1056.2px;font-size:19.5px;line-height:19.5px;color:#f2f2f2;transform:scaleX(0.582);">4.46</span>
<span class="t" style="left:707.5px;top:1056.2px;font-size:19.5px;line-height:19.5px;color:#f2f2f2;transform:scaleX(0.582);">3.98</span>
<span class="t" style="left:750.3px;top:1056.2px;font-size:19.5px;line-height:19.5px;color:#f2f2f2;transform:scaleX(0.582);">3.82</span>
<span class="t" style="left:792.8px;top:1056.2px;font-size:19.5px;line-height:19.5px;color:#f2f2f2;transform:scaleX(0.582);">3.83</span>
<span class="t" style="left:835.4px;top:1056.2px;font-size:19.5px;line-height:19.5px;color:#f2f2f2;transform:scaleX(0.582);">1.49</span>
<span class="t" style="left:866.3px;top:1056.2px;font-size:19.5px;line-height:19.5px;color:#f2f2f2;transform:scaleX(0.582);">3.65</span>
<span class="t" style="left:916.7px;top:1056.2px;font-size:19.5px;line-height:19.5px;color:#f2f2f2;transform:scaleX(0.582);">3.34</span>
<span class="t" style="left:968.0px;top:1056.2px;font-size:19.5px;line-height:19.5px;color:#f2f2f2;transform:scaleX(0.582);">6.31</span>
<span class="t" style="left:1013.7px;top:1056.2px;font-size:19.5px;line-height:19.5px;color:#f2f2f2;transform:scaleX(0.582);">3.22</span>
<span class="t" style="left:1053.3px;top:1056.2px;font-size:19.5px;line-height:19.5px;color:#f2f2f2;transform:scaleX(0.582);">3.48</span>
<span class="t" style="left:1116.0px;top:1056.2px;font-size:19.5px;line-height:19.5px;color:#f2f2f2;transform:scaleX(0.582);">4.24</span>
<span class="t" style="left:1182.3px;top:1056.2px;font-size:19.5px;line-height:19.5px;color:#f2f2f2;transform:scaleX(0.582);">10.15</span>
<span class="t" style="left:1223.0px;top:1056.2px;font-size:19.5px;line-height:19.5px;color:#f2f2f2;transform:scaleX(0.582);">4.61</span>
<span class="t" style="left:1291.7px;top:1056.2px;font-size:19.5px;line-height:19.5px;color:#f2f2f2;transform:scaleX(0.582);">3.36</span>
<span class="t" style="left:1366.0px;top:1056.2px;font-size:19.5px;line-height:19.5px;color:#f2f2f2;transform:scaleX(0.582);">3.88</span>
<span class="t" style="left:1403.0px;top:1056.2px;font-size:19.5px;line-height:19.5px;color:#f2f2f2;transform:scaleX(0.582);">3.22</span>
<span class="t" style="left:1471.6px;top:1056.2px;font-size:19.5px;line-height:19.5px;color:#f2f2f2;transform:scaleX(0.582);">8.53</span>
<span class="t" style="left:1545.3px;top:1056.2px;font-size:19.5px;line-height:19.5px;color:#f2f2f2;transform:scaleX(0.582);">4.07</span>
<span class="t" style="left:1580.4px;top:1056.2px;font-size:19.5px;line-height:19.5px;color:#f2f2f2;transform:scaleX(0.582);">3.56</span>
<span class="t" style="left:1615.5px;top:1056.2px;font-size:19.5px;line-height:19.5px;color:#f2f2f2;transform:scaleX(0.582);">1.34</span>
<span class="t" style="left:1650.3px;top:1056.2px;font-size:19.5px;line-height:19.5px;color:#f2f2f2;transform:scaleX(0.582);">4.03</span>
<span class="t" style="left:1691.7px;top:1056.2px;font-size:19.5px;line-height:19.5px;color:#f2f2f2;transform:scaleX(0.582);">3.55</span>
<span class="t" style="left:1739.8px;top:1056.2px;font-size:19.5px;line-height:19.5px;color:#f2f2f2;transform:scaleX(0.582);">6.31</span>
<span class="t" style="left:1775.2px;top:1056.2px;font-size:19.5px;line-height:19.5px;color:#f2f2f2;transform:scaleX(0.582);">8.23</span>
<span class="t" style="left:1828.0px;top:1056.2px;font-size:19.5px;line-height:19.5px;color:#f2f2f2;transform:scaleX(0.582);">6.95</span>
<span class="t" style="left:1892.2px;top:1056.2px;font-size:19.5px;line-height:19.5px;color:#f2f2f2;transform:scaleX(0.582);">4.74</span>
<div style="left:541.3px;top:1081.01px;width:1378.7px;height:20.8px;background:#606060"></div>
<div style="left:554.5px;top:1082.61px;width:815.5px;height:18px;background:#444;border-radius:7px"></div>
<div style="left:542px;top:1083.01px;width:10px;height:17px;background:#808080;border:1px solid #9a9a9a;border-radius:3px"></div>
<div style="left:1908px;top:1083.01px;width:10px;height:17px;background:#808080;border:1px solid #9a9a9a;border-radius:3px"></div>
<svg style="left:544.500px;top:1085.51px" width="6" height="12"><path d="M5.500 0v12l-5.500-6z" fill="#404040"/></svg>
<svg style="left:1910.500px;top:1085.51px" width="6" height="12"><path d="M.5 0v12l5.500-6z" fill="#404040"/></svg>
<!-- bottom swatch bar -->
<div class="sb" style="left:200px;top:1107px;width:1397px;height:63px;background:#3a3a3a;overflow:hidden"></div>
<div style="left:201px;top:1108px;width:50px;height:48.7px;background:linear-gradient(#a0a0a0,#808080 50%,#646464);border-radius:6px 6px 3px 3px;border-top:1px solid #aaa"></div>
<div style="left:206.3px;top:1113px;width:39.7px;height:24px;background:#ffffff;border-radius:3px;box-shadow:0 0 1px rgba(0,0,0,.5)"></div>
<span class="t" style="left:211.0px;top:1143.1px;font-size:11px;line-height:11px;color:#2e2e2e;font-weight:bold;">White</span>
<div style="left:253.05px;top:1108px;width:50px;height:48.7px;background:linear-gradient(#a0a0a0,#808080 50%,#646464);border-radius:6px 6px 3px 3px;border-top:1px solid #aaa"></div>
<div style="left:258.35px;top:1113px;width:39.7px;height:24px;background:#e6e6e6;border-radius:3px;box-shadow:0 0 1px rgba(0,0,0,.5)"></div>
<span class="t" style="left:257.9px;top:1143.1px;font-size:11px;line-height:11px;color:#2e2e2e;font-weight:bold;">Gray 80</span>
<div style="left:305.1px;top:1108px;width:50px;height:48.7px;background:linear-gradient(#a0a0a0,#808080 50%,#646464);border-radius:6px 6px 3px 3px;border-top:1px solid #aaa"></div>
<div style="left:310.4px;top:1113px;width:39.7px;height:24px;background:#d1d1d1;border-radius:3px;box-shadow:0 0 1px rgba(0,0,0,.5)"></div>
<span class="t" style="left:309.9px;top:1143.1px;font-size:11px;line-height:11px;color:#2e2e2e;font-weight:bold;">Gray 65</span>
<div style="left:357.15px;top:1108px;width:50px;height:48.7px;background:linear-gradient(#a0a0a0,#808080 50%,#646464);border-radius:6px 6px 3px 3px;border-top:1px solid #aaa"></div>
<div style="left:362.45px;top:1113px;width:39.7px;height:24px;background:#bababa;border-radius:3px;box-shadow:0 0 1px rgba(0,0,0,.5)"></div>
<span class="t" style="left:362.0px;top:1143.1px;font-size:11px;line-height:11px;color:#2e2e2e;font-weight:bold;">Gray 50</span>
<div style="left:409.2px;top:1108px;width:50px;height:48.7px;background:linear-gradient(#a0a0a0,#808080 50%,#646464);border-radius:6px 6px 3px 3px;border-top:1px solid #aaa"></div>
<div style="left:414.5px;top:1113px;width:39.7px;height:24px;background:#9e9e9e;border-radius:3px;box-shadow:0 0 1px rgba(0,0,0,.5)"></div>
<span class="t" style="left:414.0px;top:1143.1px;font-size:11px;line-height:11px;color:#2e2e2e;font-weight:bold;">Gray 35</span>
<div style="left:461.25px;top:1108px;width:50px;height:48.7px;background:linear-gradient(#a0a0a0,#808080 50%,#646464);border-radius:6px 6px 3px 3px;border-top:1px solid #aaa"></div>
<div style="left:466.55px;top:1113px;width:39.7px;height:24px;background:#000000;border-radius:3px;box-shadow:0 0 1px rgba(0,0,0,.5)"></div>
<span class="t" style="left:471.6px;top:1143.1px;font-size:11px;line-height:11px;color:#2e2e2e;font-weight:bold;">Black</span>
<div style="left:513.3px;top:1108px;width:50px;height:48.7px;background:linear-gradient(#a0a0a0,#808080 50%,#646464);border-radius:6px 6px 3px 3px;border-top:1px solid #aaa"></div>
<div style="left:518.6px;top:1113px;width:39.7px;height:24px;background:#735244;border-radius:3px;box-shadow:0 0 1px rgba(0,0,0,.5)"></div>
<span class="t" style="left:514.0px;top:1143.1px;font-size:11px;line-height:11px;color:#2e2e2e;font-weight:bold;transform:scaleX(0.956);">Dark Skin</span>
<div style="left:565.35px;top:1108px;width:50px;height:48.7px;background:linear-gradient(#a0a0a0,#808080 50%,#646464);border-radius:6px 6px 3px 3px;border-top:1px solid #aaa"></div>
<div style="left:570.65px;top:1113px;width:39.7px;height:24px;background:#c29682;border-radius:3px;box-shadow:0 0 1px rgba(0,0,0,.5)"></div>
<span class="t" style="left:566.1px;top:1143.1px;font-size:11px;line-height:11px;color:#2e2e2e;font-weight:bold;transform:scaleX(0.912);">Light Skin</span>
<div style="left:617.4px;top:1108px;width:50px;height:48.7px;background:linear-gradient(#a0a0a0,#808080 50%,#646464);border-radius:6px 6px 3px 3px;border-top:1px solid #aaa"></div>
<div style="left:622.7px;top:1113px;width:39.7px;height:24px;background:#627a9d;border-radius:3px;box-shadow:0 0 1px rgba(0,0,0,.5)"></div>
<span class="t" style="left:619.2px;top:1143.1px;font-size:11px;line-height:11px;color:#2e2e2e;font-weight:bold;">Blue Sky</span>
<div style="left:669.45px;top:1108px;width:50px;height:48.7px;background:linear-gradient(#a0a0a0,#808080 50%,#646464);border-radius:6px 6px 3px 3px;border-top:1px solid #aaa"></div>
<div style="left:674.75px;top:1113px;width:39.7px;height:24px;background:#576c43;border-radius:3px;box-shadow:0 0 1px rgba(0,0,0,.5)"></div>
<span class="t" style="left:675.2px;top:1143.1px;font-size:11px;line-height:11px;color:#2e2e2e;font-weight:bold;">Foliage</span>
<div style="left:721.5px;top:1108px;width:50px;height:48.7px;background:linear-gradient(#a0a0a0,#808080 50%,#646464);border-radius:6px 6px 3px 3px;border-top:1px solid #aaa"></div>
<div style="left:726.8px;top:1113px;width:39.7px;height:12px;background:#8580b1;border-radius:3px;box-shadow:0 0 1px rgba(0,0,0,.5)"></div>
<span class="t" style="left:728.8px;top:1131.5px;font-size:11px;line-height:11px;color:#2e2e2e;font-weight:bold;">Blue</span>
<span class="t" style="left:728.8px;top:1143.1px;font-size:11px;line-height:11px;color:#2e2e2e;font-weight:bold;">Flower</span>
<div style="left:773.55px;top:1108px;width:50px;height:48.7px;background:linear-gradient(#a0a0a0,#808080 50%,#646464);border-radius:6px 6px 3px 3px;border-top:1px solid #aaa"></div>
<div style="left:778.85px;top:1113px;width:39.7px;height:12px;background:#67bdaa;border-radius:3px;box-shadow:0 0 1px rgba(0,0,0,.5)"></div>
<span class="t" style="left:781.7px;top:1131.5px;font-size:11px;line-height:11px;color:#2e2e2e;font-weight:bold;">Bluish</span>
<span class="t" style="left:781.7px;top:1143.1px;font-size:11px;line-height:11px;color:#2e2e2e;font-weight:bold;">Green</span>
<div style="left:825.6px;top:1108px;width:50px;height:48.7px;background:linear-gradient(#a0a0a0,#808080 50%,#646464);border-radius:6px 6px 3px 3px;border-top:1px solid #aaa"></div>
<div style="left:830.9px;top:1113px;width:39.7px;height:24px;background:#d67e2c;border-radius:3px;box-shadow:0 0 1px rgba(0,0,0,.5)"></div>
<span class="t" style="left:831.3px;top:1143.1px;font-size:11px;line-height:11px;color:#2e2e2e;font-weight:bold;">Orange</span>
<div style="left:877.65px;top:1108px;width:50px;height:48.7px;background:linear-gradient(#a0a0a0,#808080 50%,#646464);border-radius:6px 6px 3px 3px;border-top:1px solid #aaa"></div>
<div style="left:882.95px;top:1113px;width:39.7px;height:12px;background:#505ba6;border-radius:3px;box-shadow:0 0 1px rgba(0,0,0,.5)"></div>
<span class="t" style="left:880.6px;top:1131.5px;font-size:11px;line-height:11px;color:#2e2e2e;font-weight:bold;">Purplish</span>
<span class="t" style="left:880.6px;top:1143.1px;font-size:11px;line-height:11px;color:#2e2e2e;font-weight:bold;">Blue</span>
<div style="left:929.7px;top:1108px;width:50px;height:48.7px;background:linear-gradient(#a0a0a0,#808080 50%,#646464);border-radius:6px 6px 3px 3px;border-top:1px solid #aaa"></div>
<div style="left:935px;top:1113px;width:39.7px;height:12px;background:#c15a63;border-radius:3px;box-shadow:0 0 1px rgba(0,0,0,.5)"></div>
<span class="t" style="left:930.3px;top:1131.5px;font-size:11px;line-height:11px;color:#2e2e2e;font-weight:bold;">Moderate</span>
<span class="t" style="left:930.3px;top:1143.1px;font-size:11px;line-height:11px;color:#2e2e2e;font-weight:bold;">Red</span>
<div style="left:981.75px;top:1108px;width:50px;height:48.7px;background:linear-gradient(#a0a0a0,#808080 50%,#646464);border-radius:6px 6px 3px 3px;border-top:1px solid #aaa"></div>
<div style="left:987.05px;top:1113px;width:39.7px;height:24px;background:#5e3c6c;border-radius:3px;box-shadow:0 0 1px rgba(0,0,0,.5)"></div>
<span class="t" style="left:989.6px;top:1143.1px;font-size:11px;line-height:11px;color:#2e2e2e;font-weight:bold;">Purple</span>
<div style="left:1033.8px;top:1108px;width:50px;height:48.7px;background:linear-gradient(#a0a0a0,#808080 50%,#646464);border-radius:6px 6px 3px 3px;border-top:1px solid #aaa"></div>
<div style="left:1039.1px;top:1113px;width:39.7px;height:12px;background:#9dbc40;border-radius:3px;box-shadow:0 0 1px rgba(0,0,0,.5)"></div>
<span class="t" style="left:1041.7px;top:1131.5px;font-size:11px;line-height:11px;color:#2e2e2e;font-weight:bold;">Yellow</span>
<span class="t" style="left:1041.7px;top:1143.1px;font-size:11px;line-height:11px;color:#2e2e2e;font-weight:bold;">Green</span>
<div style="left:1085.85px;top:1108px;width:50px;height:48.7px;background:linear-gradient(#a0a0a0,#808080 50%,#646464);border-radius:6px 6px 3px 3px;border-top:1px solid #aaa"></div>
<div style="left:1091.15px;top:1113px;width:39.7px;height:12px;background:#e0a32e;border-radius:3px;box-shadow:0 0 1px rgba(0,0,0,.5)"></div>
<span class="t" style="left:1091.6px;top:1131.5px;font-size:11px;line-height:11px;color:#2e2e2e;font-weight:bold;">Orange</span>
<span class="t" style="left:1091.6px;top:1143.1px;font-size:11px;line-height:11px;color:#2e2e2e;font-weight:bold;">Yellow</span>
<div style="left:1137.9px;top:1108px;width:50px;height:48.7px;background:linear-gradient(#a0a0a0,#808080 50%,#646464);border-radius:6px 6px 3px 3px;border-top:1px solid #aaa"></div>
<div style="left:1143.2px;top:1113px;width:39.7px;height:24px;background:#383d96;border-radius:3px;box-shadow:0 0 1px rgba(0,0,0,.5)"></div>
<span class="t" style="left:1151.0px;top:1143.1px;font-size:11px;line-height:11px;color:#2e2e2e;font-weight:bold;">Blue</span>
<div style="left:1189.95px;top:1108px;width:50px;height:48.7px;background:linear-gradient(#a0a0a0,#808080 50%,#646464);border-radius:6px 6px 3px 3px;border-top:1px solid #aaa"></div>
<div style="left:1195.25px;top:1113px;width:39.7px;height:24px;background:#469449;border-radius:3px;box-shadow:0 0 1px rgba(0,0,0,.5)"></div>
<span class="t" style="left:1199.1px;top:1143.1px;font-size:11px;line-height:11px;color:#2e2e2e;font-weight:bold;">Green</span>
<div style="left:1242px;top:1108px;width:50px;height:48.7px;background:linear-gradient(#a0a0a0,#808080 50%,#646464);border-radius:6px 6px 3px 3px;border-top:1px solid #aaa"></div>
<div style="left:1247.3px;top:1113px;width:39.7px;height:24px;background:#af363c;border-radius:3px;box-shadow:0 0 1px rgba(0,0,0,.5)"></div>
<span class="t" style="left:1256.6px;top:1143.1px;font-size:11px;line-height:11px;color:#2e2e2e;font-weight:bold;">Red</span>
<div style="left:1294.05px;top:1108px;width:50px;height:48.7px;background:linear-gradient(#a0a0a0,#808080 50%,#646464);border-radius:6px 6px 3px 3px;border-top:1px solid #aaa"></div>
<div style="left:1299.35px;top:1113px;width:39.7px;height:24px;background:#e7c71f;border-radius:3px;box-shadow:0 0 1px rgba(0,0,0,.5)"></div>
<span class="t" style="left:1301.9px;top:1143.1px;font-size:11px;line-height:11px;color:#2e2e2e;font-weight:bold;">Yellow</span>
<div style="left:1346.1px;top:1108px;width:50px;height:48.7px;background:linear-gradient(#a0a0a0,#808080 50%,#646464);border-radius:6px 6px 3px 3px;border-top:1px solid #aaa"></div>
<div style="left:1351.4px;top:1113px;width:39.7px;height:24px;background:#bb5695;border-radius:3px;box-shadow:0 0 1px rgba(0,0,0,.5)"></div>
<span class="t" style="left:1348.8px;top:1143.1px;font-size:11px;line-height:11px;color:#2e2e2e;font-weight:bold;">Magenta</span>
<div style="left:1398.15px;top:1108px;width:50px;height:48.7px;background:linear-gradient(#a0a0a0,#808080 50%,#646464);border-radius:6px 6px 3px 3px;border-top:1px solid #aaa"></div>
<div style="left:1403.45px;top:1113px;width:39.7px;height:24px;background:#0885a1;border-radius:3px;box-shadow:0 0 1px rgba(0,0,0,.5)"></div>
<span class="t" style="left:1409.7px;top:1143.1px;font-size:11px;line-height:11px;color:#2e2e2e;font-weight:bold;">Cyan</span>
<div style="left:1450.2px;top:1108px;width:50px;height:48.7px;background:linear-gradient(#a0a0a0,#808080 50%,#646464);border-radius:6px 6px 3px 3px;border-top:1px solid #aaa"></div>
<div style="left:1455.5px;top:1113px;width:39.7px;height:24px;background:#ff0000;border-radius:3px;box-shadow:0 0 1px rgba(0,0,0,.5)"></div>
<span class="t" style="left:1450.9px;top:1143.1px;font-size:11px;line-height:11px;color:#2e2e2e;font-weight:bold;transform:scaleX(0.933);">100% Red</span>
<div style="left:1502.25px;top:1108px;width:50px;height:48.7px;background:linear-gradient(#a0a0a0,#808080 50%,#646464);border-radius:6px 6px 3px 3px;border-top:1px solid #aaa"></div>
<div style="left:1507.55px;top:1113px;width:39.7px;height:12px;background:#00ff00;border-radius:3px;box-shadow:0 0 1px rgba(0,0,0,.5)"></div>
<span class="t" style="left:1511.4px;top:1131.5px;font-size:11px;line-height:11px;color:#2e2e2e;font-weight:bold;">100%</span>
<span class="t" style="left:1511.4px;top:1143.1px;font-size:11px;line-height:11px;color:#2e2e2e;font-weight:bold;">Green</span>
<div style="left:1554.3px;top:1108px;width:42.2px;height:48.7px;background:linear-gradient(#a0a0a0,#808080 50%,#646464);border-radius:6px 6px 3px 3px;border-top:1px solid #aaa"></div>
<div style="left:1559.6px;top:1113px;width:36.9px;height:12px;background:#0000ff;border-radius:3px;box-shadow:0 0 1px rgba(0,0,0,.5)"></div>
<span class="t" style="left:1565.2px;top:1131.5px;font-size:11px;line-height:11px;color:#2e2e2e;font-weight:bold;">100%</span>
<span class="t" style="left:1565.2px;top:1143.1px;font-size:11px;line-height:11px;color:#2e2e2e;font-weight:bold;">Blue</span>
<div style="left:200px;top:1157.5px;width:1397px;height:12.5px;background:#585858"></div>
<div style="left:214px;top:1158.5px;width:782px;height:10px;background:#444;border-radius:5px"></div>
<div style="left:201px;top:1158.5px;width:11px;height:11px;background:linear-gradient(#8a8a8a,#707070);border:1px solid #999;border-radius:2px"></div>
<svg style="left:204px;top:1160.500px" width="6" height="8"><path d="M5 0v8l-5-4z" fill="#3a3a3a"/></svg>
<div style="left:1585px;top:1158.5px;width:11px;height:11px;background:linear-gradient(#8a8a8a,#707070);border:1px solid #999;border-radius:2px"></div>
<svg style="left:1588px;top:1160.500px" width="6" height="8"><path d="M1 0v8l5-4z" fill="#3a3a3a"/></svg>
<!-- controls -->
<div style="left:1597px;top:1108px;width:48px;height:18px;background:linear-gradient(#b0b0b0,#8c8c8c 55%,#747474);border-top:1px solid #c4c4c4;border-radius:5px 5px 0 0"></div>
<div style="left:1611px;top:1110px;width:19px;height:14px;border-radius:50%;background:linear-gradient(#808080,#a8a8a8)"></div>
<svg style="left:1616px;top:1113.500px" width="10" height="6"><path d="M0 6h10l-5-6z" fill="#3c3c3c"/></svg>
<div style="left:1597px;top:1127px;width:48px;height:43px;background:linear-gradient(#b0b0b0,#8c8c8c 55%,#747474);border-top:1px solid #c4c4c4;border-radius:0 0 5px 5px"></div>
<div style="left:1605.5px;top:1132.5px;width:31px;height:30.5px;border:2.500px solid #333;border-radius:5px;background:linear-gradient(#b4b4b4,#9a9a9a 50%,#888 52%,#7a7a7a)"></div>
<div style="left:1614px;top:1141px;width:14px;height:13.6px;background:#050505"></div>
<div style="left:1646px;top:1108px;width:46px;height:30px;background:linear-gradient(#b0b0b0,#8c8c8c 55%,#747474);border-top:1px solid #c4c4c4;border-radius:5px 0 0 0"></div>
<div style="left:1659px;top:1113px;width:20px;height:20px;border-radius:50%;background:linear-gradient(#828282,#b4b4b4)"></div>
<div style="left:1693px;top:1108px;width:44px;height:30px;background:linear-gradient(#b0b0b0,#8c8c8c 55%,#747474);border-top:1px solid #c4c4c4;"></div>
<div style="left:1705px;top:1113px;width:20px;height:20px;border-radius:50%;background:linear-gradient(#828282,#b4b4b4)"></div>
<div style="left:1738px;top:1108px;width:44px;height:30px;background:linear-gradient(#b0b0b0,#8c8c8c 55%,#747474);border-top:1px solid #c4c4c4;"></div>
<div style="left:1750px;top:1113px;width:20px;height:20px;border-radius:50%;background:linear-gradient(#828282,#b4b4b4)"></div>
<div style="left:1783px;top:1108px;width:44px;height:30px;background:linear-gradient(#b0b0b0,#8c8c8c 55%,#747474);border-top:1px solid #c4c4c4;"></div>
<div style="left:1795px;top:1113px;width:20px;height:20px;border-radius:50%;background:linear-gradient(#828282,#b4b4b4)"></div>
<div style="left:1828px;top:1108px;width:44px;height:30px;background:linear-gradient(#4a4a4a,#3a3a3a 55%,#2e2e2e);"></div>
<div style="left:1840px;top:1113px;width:20px;height:20px;border-radius:50%;background:linear-gradient(#303030,#444)"></div>
<div style="left:1873px;top:1108px;width:46px;height:30px;background:linear-gradient(#4a4a4a,#3a3a3a 55%,#2e2e2e);border-radius:0 5px 0 0"></div>
<div style="left:1886px;top:1113px;width:20px;height:20px;border-radius:50%;background:linear-gradient(#303030,#444)"></div>
<svg style="left:1646px;top:1108px" width="274" height="30" viewBox="1646 1108 274 30"><rect x="1665" y="1119" width="8" height="8" fill="#333"/><path d="M1711.500 1117.500v11l9-5.500z" fill="#333"/><path d="M1757.500 1118h-2.500v10.500h2.500M1762.500 1118h2.500v10.500h-2.500" stroke="#333" stroke-width="1.800" fill="none"/><rect x="1757.600" y="1122" width="1.800" height="1.800" fill="#333"/><rect x="1760.600" y="1122" width="1.800" height="1.800" fill="#333"/><path d="M1805 1123c1.500-3.500 6-3.500 6 0s-4.500 3.500-6 0s-4.500-3.500-6 0s4.500 3.500 6 0z" stroke="#333" stroke-width="1.500" fill="none"/><path d="M1845 1122a5.500 5.500 0 0 1 10-2.500M1855 1124a5.500 5.500 0 0 1-10 2.500" stroke="#222" stroke-width="2.600" fill="none"/><path d="M1852 1120.500h5v-5zM1848 1125.500h-5v5z" fill="#222"/></svg>
<div style="left:1646px;top:1139px;width:136.5px;height:31px;background:linear-gradient(#b0b0b0,#8c8c8c 55%,#747474);border-top:1px solid #c4c4c4;border-radius:5px 0 0 5px"></div>
<div style="left:1783px;top:1139px;width:136px;height:31px;background:linear-gradient(#b0b0b0,#8c8c8c 55%,#747474);border-top:1px solid #c4c4c4;border-radius:0 5px 5px 0;border-left:1px solid #666"></div>
<div style="left:1666.5px;top:1144px;width:20px;height:20px;border-radius:50%;background:linear-gradient(#828282,#b4b4b4)"></div>
<div style="left:1880px;top:1144px;width:20px;height:20px;border-radius:50%;background:linear-gradient(#828282,#b4b4b4)"></div>
<svg style="left:1670px;top:1149px" width="13" height="10" fill="none" stroke="#333" stroke-width="1.700"><path d="M6 .5l-4.500 4.500 4.500 4.500M11.500 .5l-4.500 4.500 4.500 4.500"/></svg>
<svg style="left:1883.500px;top:1149px" width="13" height="10" fill="none" stroke="#333" stroke-width="1.700"><path d="M1.500 .5l4.500 4.500-4.500 4.500M7 .5l4.500 4.500-4.500 4.500"/></svg>
<span class="t" style="left:1703.4px;top:1143.2px;font-size:21.8px;line-height:21.8px;color:#303030;transform:scaleX(1.044);-webkit-text-stroke:.7px #303030;">Back</span>
<span class="t" style="left:1810.3px;top:1143.2px;font-size:21.8px;line-height:21.8px;color:#303030;transform:scaleX(1.151);-webkit-text-stroke:.7px #303030;">Next</span>
</body></html>
